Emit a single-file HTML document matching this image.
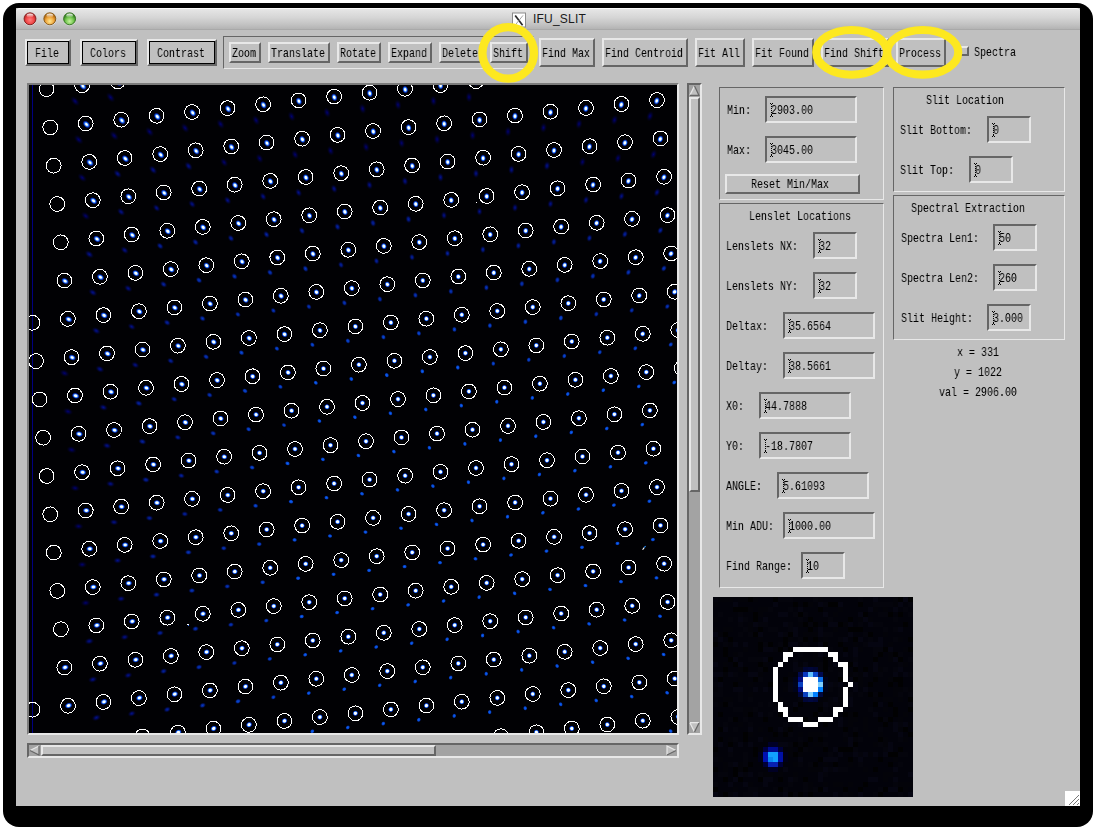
<!DOCTYPE html><html><head><meta charset="utf-8"><style>
html,body{margin:0;padding:0;width:1096px;height:830px;overflow:hidden;background:#fff}
.a{position:absolute;box-sizing:border-box}
.m{font-family:"Liberation Mono",monospace;font-size:13px;line-height:13px;white-space:pre;transform:scaleX(0.7692);transform-origin:0 0;color:#000;will-change:transform}
</style></head><body>
<div class="a" style="left:3px;top:3px;width:1090px;height:824px;background:#000;border-radius:16px"></div>
<div class="a" style="left:16px;top:8px;width:1064px;height:798px;background:#c0c0c0;"></div>
<div class="a" style="left:16px;top:8px;width:1064px;height:22px;border-radius:4px 4px 0 0;background:linear-gradient(#e6e6e6 0%,#d6d6d6 40%,#c2c2c2 75%,#b0b0b0 100%);border-top:1px solid #fafafa"></div>
<div class="a" style="left:16px;top:29px;width:1064px;height:1px;background:#a9a9a9"></div>
<svg class="a" style="left:16px;top:8px" width="70" height="22"><defs><radialGradient id="tr" cx="50%" cy="60%" r="55%"><stop offset="0" stop-color="#ff8080"/><stop offset="0.6" stop-color="#f04848"/><stop offset="1" stop-color="#b02020"/></radialGradient><radialGradient id="to" cx="50%" cy="70%" r="55%"><stop offset="0" stop-color="#ffe890"/><stop offset="0.6" stop-color="#f0a840"/><stop offset="1" stop-color="#b86c10"/></radialGradient><radialGradient id="tg" cx="50%" cy="70%" r="55%"><stop offset="0" stop-color="#c8f0a0"/><stop offset="0.6" stop-color="#74c850"/><stop offset="1" stop-color="#3c8828"/></radialGradient><linearGradient id="th" x1="0" y1="0" x2="0" y2="1"><stop offset="0" stop-color="#fff" stop-opacity="0.95"/><stop offset="1" stop-color="#fff" stop-opacity="0"/></linearGradient></defs><circle cx="14" cy="11.2" r="6.6" fill="#f2f2f2" opacity="0.7"/><circle cx="33.8" cy="11.2" r="6.6" fill="#f2f2f2" opacity="0.7"/><circle cx="53.6" cy="11.2" r="6.6" fill="#f2f2f2" opacity="0.7"/><circle cx="14" cy="10.8" r="6" fill="url(#tr)" stroke="#7a1818" stroke-width="0.9"/><circle cx="33.8" cy="10.8" r="6" fill="url(#to)" stroke="#7a5010" stroke-width="0.9"/><circle cx="53.6" cy="10.8" r="6" fill="url(#tg)" stroke="#2e6a1a" stroke-width="0.9"/><ellipse cx="14" cy="7.6" rx="3.4" ry="2" fill="url(#th)"/><ellipse cx="33.8" cy="7.6" rx="3.4" ry="2" fill="url(#th)"/><ellipse cx="53.6" cy="7.6" rx="3.4" ry="2" fill="url(#th)"/></svg>
<svg class="a" style="left:510px;top:10px" width="18" height="19"><rect x="2.5" y="3" width="13" height="14" fill="#fff" stroke="#8c8c8c" stroke-width="1"/><path d="M5.2 5.4 L12.6 15.2" stroke="#2a2a2a" stroke-width="1.7"/><path d="M13 5.4 L5.6 14.6" stroke="#999" stroke-width="0.9"/></svg>
<div class="a" style="left:533px;top:12px;font:12px 'Liberation Sans';line-height:14px;color:#1a1a1a;letter-spacing:0.2px;white-space:pre">IFU_SLIT</div>
<div class="a" style="left:25px;top:39px;width:46px;height:27px;background:#c0c0c0;border-style:solid;border-width:2px;border-color:#e8e8e8 #666666 #666666 #e8e8e8;"></div>
<div class="a" style="left:27px;top:41px;width:42px;height:23px;border-style:solid;border-width:1px;border-color:#000 #000 #000 #000;"></div>
<div class="a m" style="left:35.0px;top:47px;">File</div>
<div class="a" style="left:80px;top:39px;width:58px;height:27px;background:#c0c0c0;border-style:solid;border-width:2px;border-color:#e8e8e8 #666666 #666666 #e8e8e8;"></div>
<div class="a" style="left:82px;top:41px;width:54px;height:23px;border-style:solid;border-width:1px;border-color:#000 #000 #000 #000;"></div>
<div class="a m" style="left:90.0px;top:47px;">Colors</div>
<div class="a" style="left:147px;top:39px;width:70px;height:27px;background:#c0c0c0;border-style:solid;border-width:2px;border-color:#e8e8e8 #666666 #666666 #e8e8e8;"></div>
<div class="a" style="left:149px;top:41px;width:66px;height:23px;border-style:solid;border-width:1px;border-color:#000 #000 #000 #000;"></div>
<div class="a m" style="left:157.0px;top:47px;">Contrast</div>
<div class="a" style="left:223px;top:36px;width:311px;height:33px;border-style:solid;border-width:1px;border-color:#666666 #e8e8e8 #e8e8e8 #666666;"></div>
<div class="a" style="left:229px;top:42px;width:32px;height:21px;background:#c0c0c0;border-style:solid;border-width:2px;border-color:#e8e8e8 #666666 #666666 #e8e8e8;"></div>
<div class="a m" style="left:232.0px;top:47px;">Zoom</div>
<div class="a" style="left:268px;top:42px;width:62px;height:21px;background:#c0c0c0;border-style:solid;border-width:2px;border-color:#e8e8e8 #666666 #666666 #e8e8e8;"></div>
<div class="a m" style="left:271.0px;top:47px;">Translate</div>
<div class="a" style="left:337px;top:42px;width:44px;height:21px;background:#c0c0c0;border-style:solid;border-width:2px;border-color:#e8e8e8 #666666 #666666 #e8e8e8;"></div>
<div class="a m" style="left:340.0px;top:47px;">Rotate</div>
<div class="a" style="left:388px;top:42px;width:44px;height:21px;background:#c0c0c0;border-style:solid;border-width:2px;border-color:#e8e8e8 #666666 #666666 #e8e8e8;"></div>
<div class="a m" style="left:391.0px;top:47px;">Expand</div>
<div class="a" style="left:439px;top:42px;width:44px;height:21px;background:#c0c0c0;border-style:solid;border-width:2px;border-color:#e8e8e8 #666666 #666666 #e8e8e8;"></div>
<div class="a m" style="left:442.0px;top:47px;">Delete</div>
<div class="a" style="left:490px;top:42px;width:38px;height:21px;background:#c0c0c0;border-style:solid;border-width:2px;border-color:#e8e8e8 #666666 #666666 #e8e8e8;"></div>
<div class="a m" style="left:493.0px;top:47px;">Shift</div>
<div class="a" style="left:539px;top:38px;width:56px;height:29px;background:#c0c0c0;border-style:solid;border-width:2px;border-color:#e8e8e8 #666666 #666666 #e8e8e8;"></div>
<div class="a m" style="left:542.0px;top:47px;">Find Max</div>
<div class="a" style="left:602px;top:38px;width:86px;height:29px;background:#c0c0c0;border-style:solid;border-width:2px;border-color:#e8e8e8 #666666 #666666 #e8e8e8;"></div>
<div class="a m" style="left:605.0px;top:47px;">Find Centroid</div>
<div class="a" style="left:695px;top:38px;width:50px;height:29px;background:#c0c0c0;border-style:solid;border-width:2px;border-color:#e8e8e8 #666666 #666666 #e8e8e8;"></div>
<div class="a m" style="left:698.0px;top:47px;">Fit All</div>
<div class="a" style="left:752px;top:38px;width:62px;height:29px;background:#c0c0c0;border-style:solid;border-width:2px;border-color:#e8e8e8 #666666 #666666 #e8e8e8;"></div>
<div class="a m" style="left:755.0px;top:47px;">Fit Found</div>
<div class="a" style="left:821px;top:38px;width:68px;height:29px;background:#c0c0c0;border-style:solid;border-width:2px;border-color:#e8e8e8 #666666 #666666 #e8e8e8;"></div>
<div class="a m" style="left:824.0px;top:47px;">Find Shift</div>
<div class="a" style="left:896px;top:38px;width:50px;height:29px;background:#c0c0c0;border-style:solid;border-width:2px;border-color:#e8e8e8 #666666 #666666 #e8e8e8;"></div>
<div class="a m" style="left:899.0px;top:47px;">Process</div>
<div class="a" style="left:959px;top:46px;width:10px;height:10px;background:#c0c0c0;border-style:solid;border-width:2px;border-color:#e8e8e8 #666666 #666666 #e8e8e8;"></div>
<div class="a m" style="left:974px;top:46px;">Spectra</div>
<div class="a" style="left:27px;top:83px;width:652px;height:652px;border-style:solid;border-width:2px;border-color:#7c7c7c #e8e8e8 #e8e8e8 #7c7c7c;background:#010104"></div>
<svg class="a" style="left:29px;top:85px" width="648" height="648" viewBox="29 85 648 648">
<defs>
<radialGradient id="bs0"><stop offset="0" stop-color="#fff"/><stop offset="0.42" stop-color="#f4faff"/><stop offset="0.62" stop-color="#2a80ff"/><stop offset="0.82" stop-color="#0820b0" stop-opacity="0.7"/><stop offset="1" stop-color="#000050" stop-opacity="0"/></radialGradient>
<radialGradient id="bs1"><stop offset="0" stop-color="#fff"/><stop offset="0.37" stop-color="#f4faff"/><stop offset="0.59" stop-color="#2a80ff"/><stop offset="0.81" stop-color="#0820b0" stop-opacity="0.7"/><stop offset="1" stop-color="#000050" stop-opacity="0"/></radialGradient>
<radialGradient id="bs2"><stop offset="0" stop-color="#fff"/><stop offset="0.32" stop-color="#f4faff"/><stop offset="0.56" stop-color="#2a80ff"/><stop offset="0.79" stop-color="#0820b0" stop-opacity="0.7"/><stop offset="1" stop-color="#000050" stop-opacity="0"/></radialGradient>
<radialGradient id="bs3"><stop offset="0" stop-color="#fff"/><stop offset="0.27" stop-color="#f4faff"/><stop offset="0.53" stop-color="#2a80ff"/><stop offset="0.78" stop-color="#0820b0" stop-opacity="0.7"/><stop offset="1" stop-color="#000050" stop-opacity="0"/></radialGradient>
<radialGradient id="bs4"><stop offset="0" stop-color="#fff"/><stop offset="0.22" stop-color="#f4faff"/><stop offset="0.50" stop-color="#2a80ff"/><stop offset="0.77" stop-color="#0820b0" stop-opacity="0.7"/><stop offset="1" stop-color="#000050" stop-opacity="0"/></radialGradient>
<radialGradient id="ds0"><stop offset="0" stop-color="rgb(0,0,150)" stop-opacity="0.75"/><stop offset="0.30" stop-color="rgb(0,0,127)" stop-opacity="0.55"/><stop offset="1" stop-color="#000030" stop-opacity="0"/></radialGradient>
<radialGradient id="ds1"><stop offset="0" stop-color="rgb(2,21,171)" stop-opacity="0.80"/><stop offset="0.35" stop-color="rgb(1,14,145)" stop-opacity="0.62"/><stop offset="1" stop-color="#000030" stop-opacity="0"/></radialGradient>
<radialGradient id="ds2"><stop offset="0" stop-color="rgb(4,42,192)" stop-opacity="0.85"/><stop offset="0.40" stop-color="rgb(2,29,163)" stop-opacity="0.69"/><stop offset="1" stop-color="#000030" stop-opacity="0"/></radialGradient>
<radialGradient id="ds3"><stop offset="0" stop-color="rgb(6,63,213)" stop-opacity="0.90"/><stop offset="0.45" stop-color="rgb(4,44,181)" stop-opacity="0.76"/><stop offset="1" stop-color="#000030" stop-opacity="0"/></radialGradient>
<radialGradient id="ds4"><stop offset="0" stop-color="rgb(8,84,234)" stop-opacity="0.95"/><stop offset="0.50" stop-color="rgb(5,58,198)" stop-opacity="0.83"/><stop offset="1" stop-color="#000030" stop-opacity="0"/></radialGradient>
<radialGradient id="ds5"><stop offset="0" stop-color="rgb(10,105,255)" stop-opacity="1.00"/><stop offset="0.55" stop-color="rgb(7,73,216)" stop-opacity="0.90"/><stop offset="1" stop-color="#000030" stop-opacity="0"/></radialGradient>
<clipPath id="cp"><rect x="29" y="85" width="648" height="648"/></clipPath></defs>
<rect x="29" y="85" width="648" height="648" fill="#010104"/>
<g clip-path="url(#cp)">
<rect x="32" y="85" width="1" height="648" fill="#000080"/>
<g><ellipse cx="64.5" cy="373.2" rx="5.5" ry="3.6" transform="rotate(-156 64.5 373.2)" fill="url(#ds0)"/><ellipse cx="68.0" cy="411.5" rx="5.4" ry="3.6" transform="rotate(-160 68.0 411.5)" fill="url(#ds0)"/><ellipse cx="71.6" cy="449.8" rx="5.3" ry="3.6" transform="rotate(-165 71.6 449.8)" fill="url(#ds0)"/><ellipse cx="75.1" cy="488.1" rx="5.2" ry="3.5" transform="rotate(-169 75.1 488.1)" fill="url(#ds0)"/><ellipse cx="78.6" cy="526.3" rx="5.2" ry="3.5" transform="rotate(-175 78.6 526.3)" fill="url(#ds0)"/><ellipse cx="82.2" cy="564.6" rx="5.1" ry="3.5" transform="rotate(-180 82.2 564.6)" fill="url(#ds0)"/><ellipse cx="85.7" cy="602.9" rx="5.1" ry="3.5" transform="rotate(175 85.7 602.9)" fill="url(#ds0)"/><ellipse cx="89.3" cy="641.2" rx="5.0" ry="3.5" transform="rotate(169 89.3 641.2)" fill="url(#ds1)"/><ellipse cx="92.8" cy="679.5" rx="5.0" ry="3.4" transform="rotate(164 92.8 679.5)" fill="url(#ds1)"/><ellipse cx="96.4" cy="717.7" rx="5.0" ry="3.4" transform="rotate(159 96.4 717.7)" fill="url(#ds1)"/><ellipse cx="75.1" cy="101.2" rx="6.1" ry="3.6" transform="rotate(-132 75.1 101.2)" fill="url(#ds0)"/><ellipse cx="78.7" cy="139.6" rx="6.0" ry="3.6" transform="rotate(-134 78.7 139.6)" fill="url(#ds0)"/><ellipse cx="82.2" cy="177.7" rx="5.7" ry="3.5" transform="rotate(-137 82.2 177.7)" fill="url(#ds0)"/><ellipse cx="85.7" cy="216.0" rx="5.5" ry="3.5" transform="rotate(-139 85.7 216.0)" fill="url(#ds0)"/><ellipse cx="89.3" cy="254.3" rx="5.4" ry="3.5" transform="rotate(-142 89.3 254.3)" fill="url(#ds1)"/><ellipse cx="92.8" cy="292.5" rx="5.2" ry="3.4" transform="rotate(-146 92.8 292.5)" fill="url(#ds1)"/><ellipse cx="96.3" cy="330.8" rx="5.1" ry="3.4" transform="rotate(-149 96.3 330.8)" fill="url(#ds1)"/><ellipse cx="99.9" cy="369.1" rx="5.0" ry="3.4" transform="rotate(-153 99.9 369.1)" fill="url(#ds1)"/><ellipse cx="103.4" cy="407.4" rx="4.9" ry="3.4" transform="rotate(-158 103.4 407.4)" fill="url(#ds1)"/><ellipse cx="107.0" cy="445.7" rx="4.8" ry="3.4" transform="rotate(-163 107.0 445.7)" fill="url(#ds1)"/><ellipse cx="110.5" cy="483.9" rx="4.7" ry="3.3" transform="rotate(-168 110.5 483.9)" fill="url(#ds1)"/><ellipse cx="114.0" cy="522.2" rx="4.7" ry="3.3" transform="rotate(-173 114.0 522.2)" fill="url(#ds1)"/><ellipse cx="117.6" cy="560.5" rx="4.6" ry="3.3" transform="rotate(-179 117.6 560.5)" fill="url(#ds1)"/><ellipse cx="121.1" cy="598.8" rx="4.6" ry="3.3" transform="rotate(175 121.1 598.8)" fill="url(#ds1)"/><ellipse cx="124.7" cy="637.1" rx="4.6" ry="3.3" transform="rotate(169 124.7 637.1)" fill="url(#ds1)"/><ellipse cx="128.2" cy="675.3" rx="4.5" ry="3.3" transform="rotate(163 128.2 675.3)" fill="url(#ds1)"/><ellipse cx="131.8" cy="713.6" rx="4.5" ry="3.2" transform="rotate(158 131.8 713.6)" fill="url(#ds1)"/><ellipse cx="135.3" cy="751.9" rx="4.5" ry="3.2" transform="rotate(152 135.3 751.9)" fill="url(#ds1)"/><ellipse cx="110.6" cy="97.4" rx="6.1" ry="3.6" transform="rotate(-129 110.6 97.4)" fill="url(#ds0)"/><ellipse cx="114.2" cy="135.7" rx="6.0" ry="3.6" transform="rotate(-131 114.2 135.7)" fill="url(#ds0)"/><ellipse cx="117.6" cy="173.8" rx="5.4" ry="3.4" transform="rotate(-134 117.6 173.8)" fill="url(#ds1)"/><ellipse cx="121.1" cy="211.9" rx="5.0" ry="3.3" transform="rotate(-136 121.1 211.9)" fill="url(#ds1)"/><ellipse cx="124.7" cy="250.2" rx="4.9" ry="3.3" transform="rotate(-139 124.7 250.2)" fill="url(#ds1)"/><ellipse cx="128.2" cy="288.4" rx="4.8" ry="3.3" transform="rotate(-143 128.2 288.4)" fill="url(#ds1)"/><ellipse cx="131.7" cy="326.7" rx="4.6" ry="3.2" transform="rotate(-147 131.7 326.7)" fill="url(#ds1)"/><ellipse cx="135.3" cy="365.0" rx="4.5" ry="3.2" transform="rotate(-151 135.3 365.0)" fill="url(#ds1)"/><ellipse cx="138.8" cy="403.3" rx="4.5" ry="3.2" transform="rotate(-155 138.8 403.3)" fill="url(#ds2)"/><ellipse cx="142.4" cy="441.6" rx="4.4" ry="3.2" transform="rotate(-161 142.4 441.6)" fill="url(#ds2)"/><ellipse cx="145.9" cy="479.8" rx="4.3" ry="3.2" transform="rotate(-166 145.9 479.8)" fill="url(#ds2)"/><ellipse cx="149.4" cy="518.1" rx="4.2" ry="3.1" transform="rotate(-172 149.4 518.1)" fill="url(#ds2)"/><ellipse cx="153.0" cy="556.4" rx="4.2" ry="3.1" transform="rotate(-178 153.0 556.4)" fill="url(#ds2)"/><ellipse cx="156.5" cy="594.7" rx="4.1" ry="3.1" transform="rotate(175 156.5 594.7)" fill="url(#ds2)"/><ellipse cx="160.1" cy="633.0" rx="4.1" ry="3.1" transform="rotate(169 160.1 633.0)" fill="url(#ds2)"/><ellipse cx="163.6" cy="671.2" rx="4.1" ry="3.1" transform="rotate(162 163.6 671.2)" fill="url(#ds2)"/><ellipse cx="167.2" cy="709.5" rx="4.1" ry="3.1" transform="rotate(156 167.2 709.5)" fill="url(#ds2)"/><ellipse cx="170.7" cy="747.8" rx="4.1" ry="3.0" transform="rotate(150 170.7 747.8)" fill="url(#ds2)"/><ellipse cx="149.6" cy="131.8" rx="5.9" ry="3.6" transform="rotate(-128 149.6 131.8)" fill="url(#ds0)"/><ellipse cx="153.1" cy="169.9" rx="5.4" ry="3.4" transform="rotate(-131 153.1 169.9)" fill="url(#ds1)"/><ellipse cx="156.6" cy="208.0" rx="4.8" ry="3.2" transform="rotate(-133 156.6 208.0)" fill="url(#ds1)"/><ellipse cx="160.1" cy="246.0" rx="4.4" ry="3.1" transform="rotate(-136 160.1 246.0)" fill="url(#ds2)"/><ellipse cx="163.6" cy="284.3" rx="4.3" ry="3.1" transform="rotate(-140 163.6 284.3)" fill="url(#ds2)"/><ellipse cx="167.1" cy="322.6" rx="4.2" ry="3.1" transform="rotate(-143 167.1 322.6)" fill="url(#ds2)"/><ellipse cx="170.7" cy="360.9" rx="4.1" ry="3.0" transform="rotate(-148 170.7 360.9)" fill="url(#ds2)"/><ellipse cx="174.2" cy="399.2" rx="4.0" ry="3.0" transform="rotate(-152 174.2 399.2)" fill="url(#ds2)"/><ellipse cx="177.8" cy="437.4" rx="4.0" ry="3.0" transform="rotate(-158 177.8 437.4)" fill="url(#ds2)"/><ellipse cx="181.3" cy="475.7" rx="3.9" ry="3.0" transform="rotate(-164 181.3 475.7)" fill="url(#ds2)"/><ellipse cx="184.8" cy="514.0" rx="3.8" ry="3.0" transform="rotate(-171 184.8 514.0)" fill="url(#ds2)"/><ellipse cx="188.4" cy="552.3" rx="3.8" ry="2.9" transform="rotate(-178 188.4 552.3)" fill="url(#ds3)"/><ellipse cx="191.9" cy="590.6" rx="3.7" ry="2.9" transform="rotate(175 191.9 590.6)" fill="url(#ds3)"/><ellipse cx="195.5" cy="628.8" rx="3.7" ry="2.9" transform="rotate(168 195.5 628.8)" fill="url(#ds3)"/><ellipse cx="199.0" cy="667.1" rx="3.7" ry="2.9" transform="rotate(161 199.0 667.1)" fill="url(#ds3)"/><ellipse cx="202.6" cy="705.4" rx="3.7" ry="2.9" transform="rotate(154 202.6 705.4)" fill="url(#ds3)"/><ellipse cx="206.1" cy="743.7" rx="3.7" ry="2.8" transform="rotate(148 206.1 743.7)" fill="url(#ds3)"/><ellipse cx="185.1" cy="128.0" rx="5.8" ry="3.6" transform="rotate(-125 185.1 128.0)" fill="url(#ds0)"/><ellipse cx="188.6" cy="166.1" rx="5.4" ry="3.5" transform="rotate(-127 188.6 166.1)" fill="url(#ds1)"/><ellipse cx="192.1" cy="204.1" rx="4.8" ry="3.3" transform="rotate(-130 192.1 204.1)" fill="url(#ds1)"/><ellipse cx="195.5" cy="242.2" rx="4.3" ry="3.1" transform="rotate(-133 195.5 242.2)" fill="url(#ds2)"/><ellipse cx="199.0" cy="280.2" rx="3.9" ry="2.9" transform="rotate(-136 199.0 280.2)" fill="url(#ds3)"/><ellipse cx="202.5" cy="318.5" rx="3.8" ry="2.9" transform="rotate(-140 202.5 318.5)" fill="url(#ds3)"/><ellipse cx="206.1" cy="356.8" rx="3.7" ry="2.8" transform="rotate(-144 206.1 356.8)" fill="url(#ds3)"/><ellipse cx="209.6" cy="395.0" rx="3.6" ry="2.8" transform="rotate(-149 209.6 395.0)" fill="url(#ds3)"/><ellipse cx="213.2" cy="433.3" rx="3.6" ry="2.8" transform="rotate(-155 213.2 433.3)" fill="url(#ds3)"/><ellipse cx="216.7" cy="471.6" rx="3.5" ry="2.8" transform="rotate(-161 216.7 471.6)" fill="url(#ds3)"/><ellipse cx="220.2" cy="509.9" rx="3.5" ry="2.8" transform="rotate(-169 220.2 509.9)" fill="url(#ds3)"/><ellipse cx="223.8" cy="548.2" rx="3.4" ry="2.8" transform="rotate(-176 223.8 548.2)" fill="url(#ds3)"/><ellipse cx="227.3" cy="586.4" rx="3.4" ry="2.7" transform="rotate(175 227.3 586.4)" fill="url(#ds3)"/><ellipse cx="230.9" cy="624.7" rx="3.4" ry="2.7" transform="rotate(167 230.9 624.7)" fill="url(#ds3)"/><ellipse cx="234.4" cy="663.0" rx="3.3" ry="2.7" transform="rotate(159 234.4 663.0)" fill="url(#ds3)"/><ellipse cx="238.0" cy="701.3" rx="3.3" ry="2.7" transform="rotate(152 238.0 701.3)" fill="url(#ds4)"/><ellipse cx="241.5" cy="739.6" rx="3.3" ry="2.7" transform="rotate(145 241.5 739.6)" fill="url(#ds4)"/><ellipse cx="220.6" cy="124.1" rx="5.7" ry="3.6" transform="rotate(-122 220.6 124.1)" fill="url(#ds0)"/><ellipse cx="224.1" cy="162.3" rx="5.4" ry="3.5" transform="rotate(-124 224.1 162.3)" fill="url(#ds0)"/><ellipse cx="227.6" cy="200.3" rx="4.8" ry="3.3" transform="rotate(-126 227.6 200.3)" fill="url(#ds1)"/><ellipse cx="231.0" cy="238.3" rx="4.3" ry="3.1" transform="rotate(-129 231.0 238.3)" fill="url(#ds2)"/><ellipse cx="234.5" cy="276.4" rx="3.8" ry="2.9" transform="rotate(-132 234.5 276.4)" fill="url(#ds3)"/><ellipse cx="237.9" cy="314.4" rx="3.4" ry="2.7" transform="rotate(-135 237.9 314.4)" fill="url(#ds3)"/><ellipse cx="241.5" cy="352.7" rx="3.3" ry="2.7" transform="rotate(-140 241.5 352.7)" fill="url(#ds4)"/><ellipse cx="245.0" cy="390.9" rx="3.3" ry="2.6" transform="rotate(-145 245.0 390.9)" fill="url(#ds4)"/><ellipse cx="248.6" cy="429.2" rx="3.2" ry="2.6" transform="rotate(-151 248.6 429.2)" fill="url(#ds4)"/><ellipse cx="252.1" cy="467.5" rx="3.2" ry="2.6" transform="rotate(-158 252.1 467.5)" fill="url(#ds4)"/><ellipse cx="255.6" cy="505.8" rx="3.1" ry="2.6" transform="rotate(-166 255.6 505.8)" fill="url(#ds4)"/><ellipse cx="259.2" cy="544.1" rx="3.1" ry="2.6" transform="rotate(-175 259.2 544.1)" fill="url(#ds4)"/><ellipse cx="262.7" cy="582.3" rx="3.1" ry="2.6" transform="rotate(176 262.7 582.3)" fill="url(#ds4)"/><ellipse cx="266.3" cy="620.6" rx="3.0" ry="2.5" transform="rotate(166 266.3 620.6)" fill="url(#ds4)"/><ellipse cx="269.8" cy="658.9" rx="3.0" ry="2.5" transform="rotate(157 269.8 658.9)" fill="url(#ds4)"/><ellipse cx="273.4" cy="697.2" rx="3.0" ry="2.5" transform="rotate(149 273.4 697.2)" fill="url(#ds4)"/><ellipse cx="276.9" cy="735.5" rx="3.0" ry="2.5" transform="rotate(142 276.9 735.5)" fill="url(#ds4)"/><ellipse cx="256.1" cy="120.3" rx="5.7" ry="3.6" transform="rotate(-118 256.1 120.3)" fill="url(#ds0)"/><ellipse cx="259.6" cy="158.4" rx="5.3" ry="3.5" transform="rotate(-120 259.6 158.4)" fill="url(#ds0)"/><ellipse cx="263.1" cy="196.5" rx="4.8" ry="3.3" transform="rotate(-122 263.1 196.5)" fill="url(#ds1)"/><ellipse cx="266.5" cy="234.5" rx="4.3" ry="3.1" transform="rotate(-124 266.5 234.5)" fill="url(#ds2)"/><ellipse cx="270.0" cy="272.5" rx="3.8" ry="2.9" transform="rotate(-127 270.0 272.5)" fill="url(#ds3)"/><ellipse cx="273.4" cy="310.6" rx="3.4" ry="2.7" transform="rotate(-131 273.4 310.6)" fill="url(#ds3)"/><ellipse cx="276.9" cy="348.6" rx="3.1" ry="2.5" transform="rotate(-135 276.9 348.6)" fill="url(#ds4)"/><ellipse cx="280.4" cy="386.8" rx="3.0" ry="2.5" transform="rotate(-140 280.4 386.8)" fill="url(#ds4)"/><ellipse cx="284.0" cy="425.1" rx="2.9" ry="2.4" transform="rotate(-146 284.0 425.1)" fill="url(#ds4)"/><ellipse cx="287.5" cy="463.4" rx="2.9" ry="2.4" transform="rotate(-154 287.5 463.4)" fill="url(#ds5)"/><ellipse cx="291.0" cy="501.7" rx="2.9" ry="2.4" transform="rotate(-163 291.0 501.7)" fill="url(#ds5)"/><ellipse cx="294.6" cy="539.9" rx="2.8" ry="2.4" transform="rotate(-173 294.6 539.9)" fill="url(#ds5)"/><ellipse cx="298.1" cy="578.2" rx="2.8" ry="2.4" transform="rotate(176 298.1 578.2)" fill="url(#ds5)"/><ellipse cx="301.7" cy="616.5" rx="2.8" ry="2.4" transform="rotate(165 301.7 616.5)" fill="url(#ds5)"/><ellipse cx="305.2" cy="654.8" rx="2.7" ry="2.3" transform="rotate(154 305.2 654.8)" fill="url(#ds5)"/><ellipse cx="308.8" cy="693.1" rx="2.7" ry="2.3" transform="rotate(145 308.8 693.1)" fill="url(#ds5)"/><ellipse cx="312.3" cy="731.3" rx="2.7" ry="2.3" transform="rotate(137 312.3 731.3)" fill="url(#ds5)"/><ellipse cx="291.6" cy="116.4" rx="5.6" ry="3.6" transform="rotate(-114 291.6 116.4)" fill="url(#ds0)"/><ellipse cx="295.1" cy="154.6" rx="5.3" ry="3.5" transform="rotate(-116 295.1 154.6)" fill="url(#ds0)"/><ellipse cx="298.6" cy="192.6" rx="4.8" ry="3.3" transform="rotate(-118 298.6 192.6)" fill="url(#ds1)"/><ellipse cx="302.0" cy="230.7" rx="4.3" ry="3.1" transform="rotate(-120 302.0 230.7)" fill="url(#ds2)"/><ellipse cx="305.5" cy="268.7" rx="3.9" ry="2.9" transform="rotate(-122 305.5 268.7)" fill="url(#ds3)"/><ellipse cx="308.9" cy="306.7" rx="3.4" ry="2.7" transform="rotate(-125 308.9 306.7)" fill="url(#ds3)"/><ellipse cx="312.4" cy="344.8" rx="3.1" ry="2.5" transform="rotate(-129 312.4 344.8)" fill="url(#ds4)"/><ellipse cx="315.8" cy="382.8" rx="2.8" ry="2.3" transform="rotate(-134 315.8 382.8)" fill="url(#ds5)"/><ellipse cx="319.4" cy="421.0" rx="2.7" ry="2.3" transform="rotate(-140 319.4 421.0)" fill="url(#ds5)"/><ellipse cx="322.9" cy="459.4" rx="2.7" ry="2.3" transform="rotate(-148 322.9 459.4)" fill="url(#ds5)"/><ellipse cx="326.5" cy="497.7" rx="2.7" ry="2.3" transform="rotate(-158 326.5 497.7)" fill="url(#ds5)"/><ellipse cx="330.0" cy="536.0" rx="2.7" ry="2.3" transform="rotate(-170 330.0 536.0)" fill="url(#ds5)"/><ellipse cx="333.6" cy="574.3" rx="2.7" ry="2.3" transform="rotate(176 333.6 574.3)" fill="url(#ds5)"/><ellipse cx="337.1" cy="612.6" rx="2.7" ry="2.3" transform="rotate(163 337.1 612.6)" fill="url(#ds5)"/><ellipse cx="340.7" cy="650.9" rx="2.7" ry="2.3" transform="rotate(150 340.7 650.9)" fill="url(#ds5)"/><ellipse cx="344.2" cy="689.2" rx="2.7" ry="2.3" transform="rotate(140 344.2 689.2)" fill="url(#ds5)"/><ellipse cx="347.8" cy="727.5" rx="2.7" ry="2.3" transform="rotate(132 347.8 727.5)" fill="url(#ds5)"/><ellipse cx="327.1" cy="112.6" rx="5.6" ry="3.6" transform="rotate(-110 327.1 112.6)" fill="url(#ds0)"/><ellipse cx="330.6" cy="150.8" rx="5.3" ry="3.5" transform="rotate(-111 330.6 150.8)" fill="url(#ds0)"/><ellipse cx="334.1" cy="188.8" rx="4.8" ry="3.3" transform="rotate(-113 334.1 188.8)" fill="url(#ds1)"/><ellipse cx="337.5" cy="226.8" rx="4.3" ry="3.2" transform="rotate(-115 337.5 226.8)" fill="url(#ds2)"/><ellipse cx="341.0" cy="264.9" rx="3.9" ry="3.0" transform="rotate(-117 341.0 264.9)" fill="url(#ds2)"/><ellipse cx="344.4" cy="302.9" rx="3.5" ry="2.8" transform="rotate(-119 344.4 302.9)" fill="url(#ds3)"/><ellipse cx="347.9" cy="340.9" rx="3.1" ry="2.6" transform="rotate(-123 347.9 340.9)" fill="url(#ds4)"/><ellipse cx="351.3" cy="379.0" rx="2.8" ry="2.4" transform="rotate(-127 351.3 379.0)" fill="url(#ds5)"/><ellipse cx="354.9" cy="417.2" rx="2.7" ry="2.3" transform="rotate(-133 354.9 417.2)" fill="url(#ds5)"/><ellipse cx="358.4" cy="455.5" rx="2.7" ry="2.3" transform="rotate(-141 358.4 455.5)" fill="url(#ds5)"/><ellipse cx="362.0" cy="493.8" rx="2.7" ry="2.3" transform="rotate(-152 362.0 493.8)" fill="url(#ds5)"/><ellipse cx="365.5" cy="532.1" rx="2.7" ry="2.3" transform="rotate(-166 365.5 532.1)" fill="url(#ds5)"/><ellipse cx="369.1" cy="570.4" rx="2.7" ry="2.3" transform="rotate(177 369.1 570.4)" fill="url(#ds5)"/><ellipse cx="372.6" cy="608.7" rx="2.7" ry="2.3" transform="rotate(160 372.6 608.7)" fill="url(#ds5)"/><ellipse cx="376.2" cy="647.0" rx="2.7" ry="2.3" transform="rotate(145 376.2 647.0)" fill="url(#ds5)"/><ellipse cx="379.7" cy="685.3" rx="2.7" ry="2.3" transform="rotate(133 379.7 685.3)" fill="url(#ds5)"/><ellipse cx="383.3" cy="723.6" rx="2.7" ry="2.3" transform="rotate(124 383.3 723.6)" fill="url(#ds5)"/><ellipse cx="362.6" cy="108.7" rx="5.6" ry="3.6" transform="rotate(-106 362.6 108.7)" fill="url(#ds0)"/><ellipse cx="366.1" cy="147.0" rx="5.4" ry="3.6" transform="rotate(-107 366.1 147.0)" fill="url(#ds0)"/><ellipse cx="369.5" cy="185.0" rx="4.8" ry="3.4" transform="rotate(-108 369.5 185.0)" fill="url(#ds1)"/><ellipse cx="373.0" cy="223.0" rx="4.3" ry="3.2" transform="rotate(-109 373.0 223.0)" fill="url(#ds2)"/><ellipse cx="376.5" cy="261.0" rx="3.9" ry="3.0" transform="rotate(-111 376.5 261.0)" fill="url(#ds2)"/><ellipse cx="379.9" cy="299.1" rx="3.5" ry="2.8" transform="rotate(-113 379.9 299.1)" fill="url(#ds3)"/><ellipse cx="383.4" cy="337.1" rx="3.1" ry="2.6" transform="rotate(-116 383.4 337.1)" fill="url(#ds4)"/><ellipse cx="386.8" cy="375.1" rx="2.8" ry="2.4" transform="rotate(-119 386.8 375.1)" fill="url(#ds5)"/><ellipse cx="390.4" cy="413.3" rx="2.7" ry="2.3" transform="rotate(-124 390.4 413.3)" fill="url(#ds5)"/><ellipse cx="393.9" cy="451.6" rx="2.7" ry="2.3" transform="rotate(-131 393.9 451.6)" fill="url(#ds5)"/><ellipse cx="397.5" cy="489.9" rx="2.7" ry="2.3" transform="rotate(-142 397.5 489.9)" fill="url(#ds5)"/><ellipse cx="401.0" cy="528.2" rx="2.7" ry="2.3" transform="rotate(-159 401.0 528.2)" fill="url(#ds5)"/><ellipse cx="404.6" cy="566.6" rx="2.7" ry="2.3" transform="rotate(178 404.6 566.6)" fill="url(#ds5)"/><ellipse cx="408.1" cy="604.9" rx="2.7" ry="2.3" transform="rotate(154 408.1 604.9)" fill="url(#ds5)"/><ellipse cx="411.7" cy="643.2" rx="2.7" ry="2.3" transform="rotate(136 411.7 643.2)" fill="url(#ds5)"/><ellipse cx="415.2" cy="681.5" rx="2.7" ry="2.3" transform="rotate(123 415.2 681.5)" fill="url(#ds5)"/><ellipse cx="418.8" cy="719.8" rx="2.7" ry="2.3" transform="rotate(115 418.8 719.8)" fill="url(#ds5)"/><ellipse cx="398.0" cy="104.8" rx="5.6" ry="3.6" transform="rotate(-102 398.0 104.8)" fill="url(#ds0)"/><ellipse cx="401.6" cy="143.1" rx="5.4" ry="3.6" transform="rotate(-102 401.6 143.1)" fill="url(#ds0)"/><ellipse cx="405.0" cy="181.2" rx="4.8" ry="3.4" transform="rotate(-103 405.0 181.2)" fill="url(#ds1)"/><ellipse cx="408.5" cy="219.2" rx="4.3" ry="3.2" transform="rotate(-104 408.5 219.2)" fill="url(#ds2)"/><ellipse cx="412.0" cy="257.2" rx="3.9" ry="3.0" transform="rotate(-105 412.0 257.2)" fill="url(#ds2)"/><ellipse cx="415.4" cy="295.2" rx="3.5" ry="2.8" transform="rotate(-106 415.4 295.2)" fill="url(#ds3)"/><ellipse cx="418.9" cy="333.3" rx="3.1" ry="2.6" transform="rotate(-108 418.9 333.3)" fill="url(#ds4)"/><ellipse cx="422.3" cy="371.3" rx="2.8" ry="2.4" transform="rotate(-110 422.3 371.3)" fill="url(#ds5)"/><ellipse cx="425.8" cy="409.5" rx="2.7" ry="2.3" transform="rotate(-113 425.8 409.5)" fill="url(#ds5)"/><ellipse cx="429.4" cy="447.8" rx="2.7" ry="2.3" transform="rotate(-118 429.4 447.8)" fill="url(#ds5)"/><ellipse cx="432.9" cy="486.1" rx="2.7" ry="2.3" transform="rotate(-127 432.9 486.1)" fill="url(#ds5)"/><ellipse cx="436.5" cy="524.4" rx="2.7" ry="2.3" transform="rotate(-145 436.5 524.4)" fill="url(#ds5)"/><ellipse cx="440.0" cy="562.7" rx="2.7" ry="2.3" transform="rotate(-178 440.0 562.7)" fill="url(#ds5)"/><ellipse cx="443.6" cy="601.0" rx="2.7" ry="2.3" transform="rotate(143 443.6 601.0)" fill="url(#ds5)"/><ellipse cx="447.1" cy="639.3" rx="2.7" ry="2.3" transform="rotate(121 447.1 639.3)" fill="url(#ds5)"/><ellipse cx="450.7" cy="677.6" rx="2.7" ry="2.3" transform="rotate(110 450.7 677.6)" fill="url(#ds5)"/><ellipse cx="454.2" cy="715.9" rx="2.7" ry="2.3" transform="rotate(104 454.2 715.9)" fill="url(#ds5)"/><ellipse cx="433.5" cy="101.0" rx="5.5" ry="3.6" transform="rotate(-97 433.5 101.0)" fill="url(#ds0)"/><ellipse cx="437.1" cy="139.3" rx="5.4" ry="3.6" transform="rotate(-97 437.1 139.3)" fill="url(#ds0)"/><ellipse cx="440.5" cy="177.3" rx="4.9" ry="3.4" transform="rotate(-98 440.5 177.3)" fill="url(#ds1)"/><ellipse cx="444.0" cy="215.4" rx="4.4" ry="3.2" transform="rotate(-98 444.0 215.4)" fill="url(#ds1)"/><ellipse cx="447.5" cy="253.4" rx="3.9" ry="3.0" transform="rotate(-98 447.5 253.4)" fill="url(#ds2)"/><ellipse cx="450.9" cy="291.4" rx="3.5" ry="2.8" transform="rotate(-99 450.9 291.4)" fill="url(#ds3)"/><ellipse cx="454.4" cy="329.4" rx="3.2" ry="2.6" transform="rotate(-99 454.4 329.4)" fill="url(#ds4)"/><ellipse cx="457.8" cy="367.5" rx="2.9" ry="2.4" transform="rotate(-100 457.8 367.5)" fill="url(#ds5)"/><ellipse cx="461.3" cy="405.6" rx="2.7" ry="2.3" transform="rotate(-101 461.3 405.6)" fill="url(#ds5)"/><ellipse cx="464.9" cy="443.9" rx="2.7" ry="2.3" transform="rotate(-103 464.9 443.9)" fill="url(#ds5)"/><ellipse cx="468.4" cy="482.2" rx="2.7" ry="2.3" transform="rotate(-106 468.4 482.2)" fill="url(#ds5)"/><ellipse cx="472.0" cy="520.5" rx="2.7" ry="2.3" transform="rotate(-115 472.0 520.5)" fill="url(#ds5)"/><ellipse cx="475.5" cy="558.8" rx="2.7" ry="2.3" transform="rotate(-162 475.5 558.8)" fill="url(#ds5)"/><ellipse cx="479.1" cy="597.1" rx="2.7" ry="2.3" transform="rotate(112 479.1 597.1)" fill="url(#ds5)"/><ellipse cx="482.6" cy="635.5" rx="2.7" ry="2.3" transform="rotate(98 482.6 635.5)" fill="url(#ds5)"/><ellipse cx="486.2" cy="673.8" rx="2.7" ry="2.3" transform="rotate(93 486.2 673.8)" fill="url(#ds5)"/><ellipse cx="489.7" cy="712.1" rx="2.7" ry="2.3" transform="rotate(91 489.7 712.1)" fill="url(#ds5)"/><ellipse cx="493.3" cy="750.4" rx="2.7" ry="2.3" transform="rotate(90 493.3 750.4)" fill="url(#ds5)"/><ellipse cx="469.0" cy="97.1" rx="5.5" ry="3.6" transform="rotate(-93 469.0 97.1)" fill="url(#ds0)"/><ellipse cx="472.6" cy="135.4" rx="5.4" ry="3.6" transform="rotate(-93 472.6 135.4)" fill="url(#ds0)"/><ellipse cx="476.0" cy="173.5" rx="4.9" ry="3.4" transform="rotate(-92 476.0 173.5)" fill="url(#ds1)"/><ellipse cx="479.5" cy="211.5" rx="4.4" ry="3.2" transform="rotate(-92 479.5 211.5)" fill="url(#ds1)"/><ellipse cx="482.9" cy="249.6" rx="4.0" ry="3.0" transform="rotate(-92 482.9 249.6)" fill="url(#ds2)"/><ellipse cx="486.4" cy="287.6" rx="3.6" ry="2.8" transform="rotate(-91 486.4 287.6)" fill="url(#ds3)"/><ellipse cx="489.9" cy="325.6" rx="3.2" ry="2.6" transform="rotate(-91 489.9 325.6)" fill="url(#ds4)"/><ellipse cx="493.3" cy="363.6" rx="2.9" ry="2.4" transform="rotate(-90 493.3 363.6)" fill="url(#ds4)"/><ellipse cx="496.8" cy="401.8" rx="2.7" ry="2.3" transform="rotate(-88 496.8 401.8)" fill="url(#ds5)"/><ellipse cx="500.4" cy="440.1" rx="2.7" ry="2.3" transform="rotate(-86 500.4 440.1)" fill="url(#ds5)"/><ellipse cx="503.9" cy="478.4" rx="2.7" ry="2.3" transform="rotate(-82 503.9 478.4)" fill="url(#ds5)"/><ellipse cx="507.5" cy="516.7" rx="2.7" ry="2.3" transform="rotate(-72 507.5 516.7)" fill="url(#ds5)"/><ellipse cx="511.0" cy="555.0" rx="2.7" ry="2.3" transform="rotate(-26 511.0 555.0)" fill="url(#ds5)"/><ellipse cx="514.6" cy="593.3" rx="2.7" ry="2.3" transform="rotate(53 514.6 593.3)" fill="url(#ds5)"/><ellipse cx="518.1" cy="631.6" rx="2.7" ry="2.3" transform="rotate(69 518.1 631.6)" fill="url(#ds5)"/><ellipse cx="521.7" cy="669.9" rx="2.7" ry="2.3" transform="rotate(75 521.7 669.9)" fill="url(#ds5)"/><ellipse cx="525.2" cy="708.2" rx="2.7" ry="2.3" transform="rotate(77 525.2 708.2)" fill="url(#ds5)"/><ellipse cx="528.8" cy="746.5" rx="2.7" ry="2.3" transform="rotate(79 528.8 746.5)" fill="url(#ds5)"/><ellipse cx="508.0" cy="131.6" rx="5.4" ry="3.6" transform="rotate(-88 508.0 131.6)" fill="url(#ds0)"/><ellipse cx="511.5" cy="169.7" rx="5.0" ry="3.4" transform="rotate(-87 511.5 169.7)" fill="url(#ds1)"/><ellipse cx="515.0" cy="207.7" rx="4.5" ry="3.3" transform="rotate(-86 515.0 207.7)" fill="url(#ds1)"/><ellipse cx="518.4" cy="245.7" rx="4.0" ry="3.1" transform="rotate(-85 518.4 245.7)" fill="url(#ds2)"/><ellipse cx="521.9" cy="283.8" rx="3.6" ry="2.9" transform="rotate(-84 521.9 283.8)" fill="url(#ds3)"/><ellipse cx="525.4" cy="321.8" rx="3.2" ry="2.7" transform="rotate(-82 525.4 321.8)" fill="url(#ds4)"/><ellipse cx="528.8" cy="359.8" rx="2.9" ry="2.5" transform="rotate(-80 528.8 359.8)" fill="url(#ds4)"/><ellipse cx="532.3" cy="397.9" rx="2.7" ry="2.3" transform="rotate(-77 532.3 397.9)" fill="url(#ds5)"/><ellipse cx="535.8" cy="436.2" rx="2.7" ry="2.3" transform="rotate(-71 535.8 436.2)" fill="url(#ds5)"/><ellipse cx="539.4" cy="474.5" rx="2.7" ry="2.3" transform="rotate(-62 539.4 474.5)" fill="url(#ds5)"/><ellipse cx="542.9" cy="512.8" rx="2.7" ry="2.3" transform="rotate(-45 542.9 512.8)" fill="url(#ds5)"/><ellipse cx="546.5" cy="551.1" rx="2.7" ry="2.3" transform="rotate(-14 546.5 551.1)" fill="url(#ds5)"/><ellipse cx="550.0" cy="589.4" rx="2.7" ry="2.3" transform="rotate(24 550.0 589.4)" fill="url(#ds5)"/><ellipse cx="553.6" cy="627.7" rx="2.7" ry="2.3" transform="rotate(46 553.6 627.7)" fill="url(#ds5)"/><ellipse cx="557.1" cy="666.0" rx="2.7" ry="2.3" transform="rotate(58 557.1 666.0)" fill="url(#ds5)"/><ellipse cx="560.7" cy="704.3" rx="2.7" ry="2.3" transform="rotate(64 560.7 704.3)" fill="url(#ds5)"/><ellipse cx="564.2" cy="742.7" rx="2.7" ry="2.3" transform="rotate(68 564.2 742.7)" fill="url(#ds5)"/><ellipse cx="543.5" cy="127.7" rx="5.4" ry="3.6" transform="rotate(-83 543.5 127.7)" fill="url(#ds0)"/><ellipse cx="547.0" cy="165.8" rx="5.0" ry="3.5" transform="rotate(-82 547.0 165.8)" fill="url(#ds1)"/><ellipse cx="550.5" cy="203.9" rx="4.5" ry="3.3" transform="rotate(-81 550.5 203.9)" fill="url(#ds1)"/><ellipse cx="553.9" cy="241.9" rx="4.1" ry="3.1" transform="rotate(-79 553.9 241.9)" fill="url(#ds2)"/><ellipse cx="557.4" cy="279.9" rx="3.6" ry="2.9" transform="rotate(-77 557.4 279.9)" fill="url(#ds3)"/><ellipse cx="560.9" cy="318.0" rx="3.3" ry="2.7" transform="rotate(-75 560.9 318.0)" fill="url(#ds4)"/><ellipse cx="564.3" cy="356.0" rx="3.0" ry="2.5" transform="rotate(-71 564.3 356.0)" fill="url(#ds4)"/><ellipse cx="567.8" cy="394.0" rx="2.7" ry="2.3" transform="rotate(-66 567.8 394.0)" fill="url(#ds5)"/><ellipse cx="571.3" cy="432.4" rx="2.7" ry="2.3" transform="rotate(-59 571.3 432.4)" fill="url(#ds5)"/><ellipse cx="574.9" cy="470.7" rx="2.7" ry="2.3" transform="rotate(-49 574.9 470.7)" fill="url(#ds5)"/><ellipse cx="578.4" cy="509.0" rx="2.7" ry="2.3" transform="rotate(-33 578.4 509.0)" fill="url(#ds5)"/><ellipse cx="582.0" cy="547.3" rx="2.7" ry="2.3" transform="rotate(-11 582.0 547.3)" fill="url(#ds5)"/><ellipse cx="585.5" cy="585.6" rx="2.7" ry="2.3" transform="rotate(13 585.5 585.6)" fill="url(#ds5)"/><ellipse cx="589.1" cy="623.9" rx="2.7" ry="2.3" transform="rotate(32 589.1 623.9)" fill="url(#ds5)"/><ellipse cx="592.6" cy="662.2" rx="2.7" ry="2.3" transform="rotate(44 592.6 662.2)" fill="url(#ds5)"/><ellipse cx="596.2" cy="700.5" rx="2.7" ry="2.3" transform="rotate(53 596.2 700.5)" fill="url(#ds5)"/><ellipse cx="599.7" cy="738.8" rx="2.7" ry="2.3" transform="rotate(58 599.7 738.8)" fill="url(#ds5)"/><ellipse cx="579.0" cy="123.9" rx="5.5" ry="3.6" transform="rotate(-79 579.0 123.9)" fill="url(#ds0)"/><ellipse cx="582.5" cy="162.0" rx="5.1" ry="3.5" transform="rotate(-77 582.5 162.0)" fill="url(#ds0)"/><ellipse cx="586.0" cy="200.0" rx="4.6" ry="3.3" transform="rotate(-76 586.0 200.0)" fill="url(#ds1)"/><ellipse cx="589.4" cy="238.1" rx="4.1" ry="3.1" transform="rotate(-74 589.4 238.1)" fill="url(#ds2)"/><ellipse cx="592.9" cy="276.1" rx="3.7" ry="2.9" transform="rotate(-71 592.9 276.1)" fill="url(#ds3)"/><ellipse cx="596.3" cy="314.1" rx="3.3" ry="2.7" transform="rotate(-68 596.3 314.1)" fill="url(#ds3)"/><ellipse cx="599.8" cy="352.2" rx="3.0" ry="2.5" transform="rotate(-63 599.8 352.2)" fill="url(#ds4)"/><ellipse cx="603.3" cy="390.2" rx="2.7" ry="2.3" transform="rotate(-57 603.3 390.2)" fill="url(#ds5)"/><ellipse cx="606.8" cy="428.5" rx="2.7" ry="2.3" transform="rotate(-50 606.8 428.5)" fill="url(#ds5)"/><ellipse cx="610.4" cy="466.8" rx="2.7" ry="2.3" transform="rotate(-40 610.4 466.8)" fill="url(#ds5)"/><ellipse cx="613.9" cy="505.1" rx="2.7" ry="2.3" transform="rotate(-26 613.9 505.1)" fill="url(#ds5)"/><ellipse cx="617.5" cy="543.4" rx="2.7" ry="2.3" transform="rotate(-9 617.5 543.4)" fill="url(#ds5)"/><ellipse cx="621.0" cy="581.7" rx="2.7" ry="2.3" transform="rotate(8 621.0 581.7)" fill="url(#ds5)"/><ellipse cx="624.6" cy="620.0" rx="2.7" ry="2.3" transform="rotate(23 624.6 620.0)" fill="url(#ds5)"/><ellipse cx="628.1" cy="658.3" rx="2.7" ry="2.3" transform="rotate(35 628.1 658.3)" fill="url(#ds5)"/><ellipse cx="631.7" cy="696.6" rx="2.7" ry="2.3" transform="rotate(44 631.7 696.6)" fill="url(#ds5)"/><ellipse cx="635.2" cy="734.9" rx="2.7" ry="2.3" transform="rotate(50 635.2 734.9)" fill="url(#ds5)"/><ellipse cx="614.5" cy="120.0" rx="5.5" ry="3.6" transform="rotate(-75 614.5 120.0)" fill="url(#ds0)"/><ellipse cx="618.0" cy="158.2" rx="5.2" ry="3.5" transform="rotate(-73 618.0 158.2)" fill="url(#ds0)"/><ellipse cx="621.5" cy="196.2" rx="4.7" ry="3.3" transform="rotate(-71 621.5 196.2)" fill="url(#ds1)"/><ellipse cx="624.9" cy="234.2" rx="4.2" ry="3.1" transform="rotate(-68 624.9 234.2)" fill="url(#ds2)"/><ellipse cx="628.4" cy="272.3" rx="3.8" ry="2.9" transform="rotate(-65 628.4 272.3)" fill="url(#ds3)"/><ellipse cx="631.8" cy="310.3" rx="3.4" ry="2.7" transform="rotate(-61 631.8 310.3)" fill="url(#ds3)"/><ellipse cx="635.3" cy="348.3" rx="3.0" ry="2.5" transform="rotate(-57 635.3 348.3)" fill="url(#ds4)"/><ellipse cx="638.8" cy="386.4" rx="2.7" ry="2.3" transform="rotate(-51 638.8 386.4)" fill="url(#ds5)"/><ellipse cx="642.3" cy="424.6" rx="2.7" ry="2.3" transform="rotate(-43 642.3 424.6)" fill="url(#ds5)"/><ellipse cx="645.8" cy="462.9" rx="2.7" ry="2.3" transform="rotate(-33 645.8 462.9)" fill="url(#ds5)"/><ellipse cx="649.4" cy="501.2" rx="2.7" ry="2.3" transform="rotate(-22 649.4 501.2)" fill="url(#ds5)"/><ellipse cx="652.9" cy="539.6" rx="2.7" ry="2.3" transform="rotate(-9 652.9 539.6)" fill="url(#ds5)"/><ellipse cx="656.5" cy="577.9" rx="2.7" ry="2.3" transform="rotate(5 656.5 577.9)" fill="url(#ds5)"/><ellipse cx="660.0" cy="616.2" rx="2.7" ry="2.3" transform="rotate(17 660.0 616.2)" fill="url(#ds5)"/><ellipse cx="663.6" cy="654.5" rx="2.7" ry="2.3" transform="rotate(28 663.6 654.5)" fill="url(#ds5)"/><ellipse cx="667.1" cy="692.8" rx="2.7" ry="2.3" transform="rotate(36 667.1 692.8)" fill="url(#ds5)"/><ellipse cx="670.7" cy="731.1" rx="2.7" ry="2.3" transform="rotate(43 670.7 731.1)" fill="url(#ds5)"/><ellipse cx="650.0" cy="116.1" rx="5.6" ry="3.6" transform="rotate(-71 650.0 116.1)" fill="url(#ds0)"/><ellipse cx="653.5" cy="154.4" rx="5.3" ry="3.5" transform="rotate(-69 653.5 154.4)" fill="url(#ds0)"/><ellipse cx="657.0" cy="192.4" rx="4.8" ry="3.3" transform="rotate(-66 657.0 192.4)" fill="url(#ds1)"/><ellipse cx="660.4" cy="230.4" rx="4.3" ry="3.1" transform="rotate(-63 660.4 230.4)" fill="url(#ds2)"/><ellipse cx="663.9" cy="268.4" rx="3.8" ry="2.9" transform="rotate(-60 663.9 268.4)" fill="url(#ds3)"/><ellipse cx="667.3" cy="306.5" rx="3.4" ry="2.7" transform="rotate(-56 667.3 306.5)" fill="url(#ds3)"/><ellipse cx="670.8" cy="344.5" rx="3.1" ry="2.5" transform="rotate(-51 670.8 344.5)" fill="url(#ds4)"/><ellipse cx="674.2" cy="382.5" rx="2.8" ry="2.3" transform="rotate(-45 674.2 382.5)" fill="url(#ds5)"/></g>
<g><ellipse cx="65.1" cy="667.4" rx="4.0" ry="3.1" transform="rotate(165 65.1 667.4)" fill="url(#bs2)"/><ellipse cx="68.6" cy="705.6" rx="4.1" ry="3.1" transform="rotate(160 68.6 705.6)" fill="url(#bs2)"/><ellipse cx="65.1" cy="281.1" rx="4.3" ry="3.1" transform="rotate(-148 65.1 281.1)" fill="url(#bs3)"/><ellipse cx="68.7" cy="319.3" rx="4.2" ry="3.1" transform="rotate(-152 68.7 319.3)" fill="url(#bs3)"/><ellipse cx="72.2" cy="357.5" rx="4.1" ry="3.1" transform="rotate(-156 72.2 357.5)" fill="url(#bs3)"/><ellipse cx="75.7" cy="395.8" rx="4.1" ry="3.1" transform="rotate(-160 75.7 395.8)" fill="url(#bs2)"/><ellipse cx="79.2" cy="434.0" rx="4.0" ry="3.1" transform="rotate(-165 79.2 434.0)" fill="url(#bs2)"/><ellipse cx="82.7" cy="472.3" rx="3.9" ry="3.1" transform="rotate(-169 82.7 472.3)" fill="url(#bs2)"/><ellipse cx="86.3" cy="510.5" rx="3.9" ry="3.0" transform="rotate(-175 86.3 510.5)" fill="url(#bs2)"/><ellipse cx="89.8" cy="548.8" rx="3.9" ry="3.0" transform="rotate(-180 89.8 548.8)" fill="url(#bs2)"/><ellipse cx="93.4" cy="587.0" rx="3.8" ry="3.0" transform="rotate(175 93.4 587.0)" fill="url(#bs2)"/><ellipse cx="96.9" cy="625.3" rx="3.9" ry="3.0" transform="rotate(169 96.9 625.3)" fill="url(#bs2)"/><ellipse cx="100.5" cy="663.5" rx="3.9" ry="3.0" transform="rotate(164 100.5 663.5)" fill="url(#bs2)"/><ellipse cx="104.0" cy="701.8" rx="3.9" ry="3.1" transform="rotate(159 104.0 701.8)" fill="url(#bs2)"/><ellipse cx="82.9" cy="86.1" rx="4.8" ry="3.2" transform="rotate(-132 82.9 86.1)" fill="url(#bs4)"/><ellipse cx="86.5" cy="124.4" rx="4.7" ry="3.2" transform="rotate(-134 86.5 124.4)" fill="url(#bs4)"/><ellipse cx="90.0" cy="162.6" rx="4.6" ry="3.2" transform="rotate(-137 90.0 162.6)" fill="url(#bs4)"/><ellipse cx="93.5" cy="200.8" rx="4.5" ry="3.1" transform="rotate(-139 93.5 200.8)" fill="url(#bs3)"/><ellipse cx="97.0" cy="239.0" rx="4.3" ry="3.1" transform="rotate(-142 97.0 239.0)" fill="url(#bs3)"/><ellipse cx="100.5" cy="277.2" rx="4.2" ry="3.1" transform="rotate(-146 100.5 277.2)" fill="url(#bs3)"/><ellipse cx="104.1" cy="315.4" rx="4.1" ry="3.1" transform="rotate(-149 104.1 315.4)" fill="url(#bs2)"/><ellipse cx="107.6" cy="353.7" rx="4.0" ry="3.1" transform="rotate(-153 107.6 353.7)" fill="url(#bs2)"/><ellipse cx="111.1" cy="391.9" rx="3.9" ry="3.1" transform="rotate(-158 111.1 391.9)" fill="url(#bs2)"/><ellipse cx="114.6" cy="430.2" rx="3.8" ry="3.0" transform="rotate(-163 114.6 430.2)" fill="url(#bs2)"/><ellipse cx="118.1" cy="468.4" rx="3.8" ry="3.0" transform="rotate(-168 118.1 468.4)" fill="url(#bs2)"/><ellipse cx="121.6" cy="506.7" rx="3.7" ry="3.0" transform="rotate(-173 121.6 506.7)" fill="url(#bs2)"/><ellipse cx="125.2" cy="544.9" rx="3.7" ry="3.0" transform="rotate(-179 125.2 544.9)" fill="url(#bs2)"/><ellipse cx="128.7" cy="583.2" rx="3.7" ry="3.0" transform="rotate(175 128.7 583.2)" fill="url(#bs2)"/><ellipse cx="132.3" cy="621.4" rx="3.7" ry="3.0" transform="rotate(169 132.3 621.4)" fill="url(#bs2)"/><ellipse cx="135.8" cy="659.7" rx="3.7" ry="3.0" transform="rotate(163 135.8 659.7)" fill="url(#bs2)"/><ellipse cx="139.4" cy="697.9" rx="3.8" ry="3.0" transform="rotate(158 139.4 697.9)" fill="url(#bs2)"/><ellipse cx="143.0" cy="736.2" rx="3.8" ry="3.0" transform="rotate(152 143.0 736.2)" fill="url(#bs2)"/><ellipse cx="118.4" cy="82.3" rx="4.8" ry="3.2" transform="rotate(-129 118.4 82.3)" fill="url(#bs4)"/><ellipse cx="121.9" cy="120.5" rx="4.6" ry="3.2" transform="rotate(-131 121.9 120.5)" fill="url(#bs4)"/><ellipse cx="125.4" cy="158.7" rx="4.5" ry="3.1" transform="rotate(-134 125.4 158.7)" fill="url(#bs3)"/><ellipse cx="128.9" cy="196.9" rx="4.3" ry="3.1" transform="rotate(-136 128.9 196.9)" fill="url(#bs3)"/><ellipse cx="132.4" cy="235.1" rx="4.2" ry="3.1" transform="rotate(-139 132.4 235.1)" fill="url(#bs3)"/><ellipse cx="135.9" cy="273.3" rx="4.1" ry="3.1" transform="rotate(-143 135.9 273.3)" fill="url(#bs2)"/><ellipse cx="139.4" cy="311.6" rx="4.0" ry="3.1" transform="rotate(-147 139.4 311.6)" fill="url(#bs2)"/><ellipse cx="143.0" cy="349.8" rx="3.9" ry="3.0" transform="rotate(-151 143.0 349.8)" fill="url(#bs2)"/><ellipse cx="146.5" cy="388.0" rx="3.8" ry="3.0" transform="rotate(-155 146.5 388.0)" fill="url(#bs2)"/><ellipse cx="150.0" cy="426.3" rx="3.7" ry="3.0" transform="rotate(-161 150.0 426.3)" fill="url(#bs1)"/><ellipse cx="153.5" cy="464.5" rx="3.6" ry="3.0" transform="rotate(-166 153.5 464.5)" fill="url(#bs1)"/><ellipse cx="157.0" cy="502.8" rx="3.6" ry="3.0" transform="rotate(-172 157.0 502.8)" fill="url(#bs1)"/><ellipse cx="160.6" cy="541.1" rx="3.5" ry="3.0" transform="rotate(-178 160.6 541.1)" fill="url(#bs1)"/><ellipse cx="164.1" cy="579.3" rx="3.5" ry="3.0" transform="rotate(175 164.1 579.3)" fill="url(#bs1)"/><ellipse cx="167.6" cy="617.6" rx="3.5" ry="3.0" transform="rotate(169 167.6 617.6)" fill="url(#bs1)"/><ellipse cx="171.2" cy="655.9" rx="3.5" ry="3.0" transform="rotate(162 171.2 655.9)" fill="url(#bs1)"/><ellipse cx="174.8" cy="694.1" rx="3.6" ry="3.0" transform="rotate(156 174.8 694.1)" fill="url(#bs1)"/><ellipse cx="178.3" cy="732.4" rx="3.7" ry="3.0" transform="rotate(150 178.3 732.4)" fill="url(#bs1)"/><ellipse cx="157.3" cy="116.6" rx="4.5" ry="3.2" transform="rotate(-128 157.3 116.6)" fill="url(#bs3)"/><ellipse cx="160.8" cy="154.8" rx="4.4" ry="3.1" transform="rotate(-131 160.8 154.8)" fill="url(#bs3)"/><ellipse cx="164.3" cy="193.0" rx="4.2" ry="3.1" transform="rotate(-133 164.3 193.0)" fill="url(#bs3)"/><ellipse cx="167.8" cy="231.3" rx="4.1" ry="3.1" transform="rotate(-136 167.8 231.3)" fill="url(#bs2)"/><ellipse cx="171.3" cy="269.5" rx="4.0" ry="3.1" transform="rotate(-140 171.3 269.5)" fill="url(#bs2)"/><ellipse cx="174.8" cy="307.7" rx="3.8" ry="3.0" transform="rotate(-143 174.8 307.7)" fill="url(#bs2)"/><ellipse cx="178.3" cy="345.9" rx="3.7" ry="3.0" transform="rotate(-148 178.3 345.9)" fill="url(#bs2)"/><ellipse cx="181.9" cy="384.2" rx="3.6" ry="3.0" transform="rotate(-152 181.9 384.2)" fill="url(#bs1)"/><ellipse cx="185.4" cy="422.4" rx="3.5" ry="3.0" transform="rotate(-158 185.4 422.4)" fill="url(#bs1)"/><ellipse cx="188.9" cy="460.7" rx="3.4" ry="3.0" transform="rotate(-164 188.9 460.7)" fill="url(#bs1)"/><ellipse cx="192.4" cy="498.9" rx="3.4" ry="3.0" transform="rotate(-171 192.4 498.9)" fill="url(#bs1)"/><ellipse cx="195.9" cy="537.2" rx="3.4" ry="3.0" transform="rotate(-178 195.9 537.2)" fill="url(#bs1)"/><ellipse cx="199.5" cy="575.5" rx="3.3" ry="3.0" transform="rotate(175 199.5 575.5)" fill="url(#bs1)"/><ellipse cx="203.0" cy="613.8" rx="3.4" ry="3.0" transform="rotate(168 203.0 613.8)" fill="url(#bs1)"/><ellipse cx="206.6" cy="652.0" rx="3.4" ry="3.0" transform="rotate(161 206.6 652.0)" fill="url(#bs1)"/><ellipse cx="210.2" cy="690.3" rx="3.4" ry="3.0" transform="rotate(154 210.2 690.3)" fill="url(#bs1)"/><ellipse cx="213.7" cy="728.5" rx="3.5" ry="3.0" transform="rotate(148 213.7 728.5)" fill="url(#bs1)"/><ellipse cx="192.7" cy="112.8" rx="4.4" ry="3.1" transform="rotate(-125 192.7 112.8)" fill="url(#bs3)"/><ellipse cx="196.2" cy="151.0" rx="4.3" ry="3.1" transform="rotate(-127 196.2 151.0)" fill="url(#bs3)"/><ellipse cx="199.7" cy="189.2" rx="4.1" ry="3.1" transform="rotate(-130 199.7 189.2)" fill="url(#bs3)"/><ellipse cx="203.2" cy="227.4" rx="4.0" ry="3.1" transform="rotate(-133 203.2 227.4)" fill="url(#bs2)"/><ellipse cx="206.7" cy="265.6" rx="3.8" ry="3.0" transform="rotate(-136 206.7 265.6)" fill="url(#bs2)"/><ellipse cx="210.2" cy="303.8" rx="3.7" ry="3.0" transform="rotate(-140 210.2 303.8)" fill="url(#bs2)"/><ellipse cx="213.7" cy="342.0" rx="3.6" ry="3.0" transform="rotate(-144 213.7 342.0)" fill="url(#bs1)"/><ellipse cx="217.2" cy="380.3" rx="3.5" ry="3.0" transform="rotate(-149 217.2 380.3)" fill="url(#bs1)"/><ellipse cx="220.8" cy="418.5" rx="3.4" ry="3.0" transform="rotate(-155 220.8 418.5)" fill="url(#bs1)"/><ellipse cx="224.3" cy="456.8" rx="3.3" ry="2.9" transform="rotate(-161 224.3 456.8)" fill="url(#bs1)"/><ellipse cx="227.8" cy="495.1" rx="3.2" ry="2.9" transform="rotate(-169 227.8 495.1)" fill="url(#bs1)"/><ellipse cx="231.3" cy="533.3" rx="3.2" ry="2.9" transform="rotate(-176 231.3 533.3)" fill="url(#bs0)"/><ellipse cx="234.8" cy="571.6" rx="3.2" ry="2.9" transform="rotate(175 234.8 571.6)" fill="url(#bs0)"/><ellipse cx="238.4" cy="609.9" rx="3.2" ry="2.9" transform="rotate(167 238.4 609.9)" fill="url(#bs0)"/><ellipse cx="242.0" cy="648.2" rx="3.2" ry="2.9" transform="rotate(159 242.0 648.2)" fill="url(#bs0)"/><ellipse cx="245.5" cy="686.5" rx="3.3" ry="2.9" transform="rotate(152 245.5 686.5)" fill="url(#bs1)"/><ellipse cx="249.1" cy="724.7" rx="3.4" ry="3.0" transform="rotate(145 249.1 724.7)" fill="url(#bs1)"/><ellipse cx="228.1" cy="108.9" rx="4.4" ry="3.1" transform="rotate(-122 228.1 108.9)" fill="url(#bs3)"/><ellipse cx="231.6" cy="147.1" rx="4.2" ry="3.1" transform="rotate(-124 231.6 147.1)" fill="url(#bs3)"/><ellipse cx="235.1" cy="185.3" rx="4.0" ry="3.1" transform="rotate(-126 235.1 185.3)" fill="url(#bs2)"/><ellipse cx="238.6" cy="223.5" rx="3.9" ry="3.0" transform="rotate(-129 238.6 223.5)" fill="url(#bs2)"/><ellipse cx="242.1" cy="261.7" rx="3.7" ry="3.0" transform="rotate(-132 242.1 261.7)" fill="url(#bs2)"/><ellipse cx="245.6" cy="299.9" rx="3.6" ry="3.0" transform="rotate(-135 245.6 299.9)" fill="url(#bs1)"/><ellipse cx="249.2" cy="338.2" rx="3.5" ry="3.0" transform="rotate(-140 249.2 338.2)" fill="url(#bs1)"/><ellipse cx="252.7" cy="376.4" rx="3.3" ry="3.0" transform="rotate(-145 252.7 376.4)" fill="url(#bs1)"/><ellipse cx="256.1" cy="414.6" rx="3.2" ry="2.9" transform="rotate(-151 256.1 414.6)" fill="url(#bs1)"/><ellipse cx="259.6" cy="452.9" rx="3.1" ry="2.9" transform="rotate(-158 259.6 452.9)" fill="url(#bs0)"/><ellipse cx="263.2" cy="491.2" rx="3.1" ry="2.9" transform="rotate(-166 263.2 491.2)" fill="url(#bs0)"/><ellipse cx="266.7" cy="529.5" rx="3.0" ry="2.9" transform="rotate(-175 266.7 529.5)" fill="url(#bs0)"/><ellipse cx="270.2" cy="567.8" rx="3.0" ry="2.9" transform="rotate(176 270.2 567.8)" fill="url(#bs0)"/><ellipse cx="273.8" cy="606.1" rx="3.0" ry="2.9" transform="rotate(166 273.8 606.1)" fill="url(#bs0)"/><ellipse cx="277.3" cy="644.4" rx="3.1" ry="2.9" transform="rotate(157 277.3 644.4)" fill="url(#bs0)"/><ellipse cx="280.9" cy="682.7" rx="3.1" ry="2.9" transform="rotate(149 280.9 682.7)" fill="url(#bs0)"/><ellipse cx="284.5" cy="720.9" rx="3.2" ry="2.9" transform="rotate(142 284.5 720.9)" fill="url(#bs0)"/><ellipse cx="263.5" cy="105.0" rx="4.3" ry="3.1" transform="rotate(-118 263.5 105.0)" fill="url(#bs3)"/><ellipse cx="267.0" cy="143.2" rx="4.1" ry="3.1" transform="rotate(-120 267.0 143.2)" fill="url(#bs3)"/><ellipse cx="270.5" cy="181.4" rx="4.0" ry="3.1" transform="rotate(-122 270.5 181.4)" fill="url(#bs2)"/><ellipse cx="274.1" cy="219.6" rx="3.8" ry="3.0" transform="rotate(-124 274.1 219.6)" fill="url(#bs2)"/><ellipse cx="277.6" cy="257.8" rx="3.7" ry="3.0" transform="rotate(-127 277.6 257.8)" fill="url(#bs1)"/><ellipse cx="281.1" cy="296.0" rx="3.5" ry="3.0" transform="rotate(-131 281.1 296.0)" fill="url(#bs1)"/><ellipse cx="284.6" cy="334.3" rx="3.4" ry="3.0" transform="rotate(-135 284.6 334.3)" fill="url(#bs1)"/><ellipse cx="288.1" cy="372.5" rx="3.2" ry="2.9" transform="rotate(-140 288.1 372.5)" fill="url(#bs0)"/><ellipse cx="291.6" cy="410.7" rx="3.1" ry="2.9" transform="rotate(-146 291.6 410.7)" fill="url(#bs0)"/><ellipse cx="295.0" cy="449.0" rx="3.0" ry="2.9" transform="rotate(-154 295.0 449.0)" fill="url(#bs0)"/><ellipse cx="298.6" cy="487.3" rx="3.0" ry="2.9" transform="rotate(-163 298.6 487.3)" fill="url(#bs0)"/><ellipse cx="302.1" cy="525.6" rx="3.0" ry="2.9" transform="rotate(-173 302.1 525.6)" fill="url(#bs0)"/><ellipse cx="305.7" cy="563.9" rx="3.0" ry="2.9" transform="rotate(176 305.7 563.9)" fill="url(#bs0)"/><ellipse cx="309.2" cy="602.2" rx="3.0" ry="2.9" transform="rotate(165 309.2 602.2)" fill="url(#bs0)"/><ellipse cx="312.8" cy="640.5" rx="3.0" ry="2.9" transform="rotate(154 312.8 640.5)" fill="url(#bs0)"/><ellipse cx="316.3" cy="678.8" rx="3.0" ry="2.9" transform="rotate(145 316.3 678.8)" fill="url(#bs0)"/><ellipse cx="319.9" cy="717.1" rx="3.1" ry="2.9" transform="rotate(137 319.9 717.1)" fill="url(#bs0)"/><ellipse cx="298.9" cy="101.2" rx="4.2" ry="3.1" transform="rotate(-114 298.9 101.2)" fill="url(#bs3)"/><ellipse cx="302.4" cy="139.4" rx="4.1" ry="3.1" transform="rotate(-116 302.4 139.4)" fill="url(#bs2)"/><ellipse cx="306.0" cy="177.6" rx="3.9" ry="3.1" transform="rotate(-118 306.0 177.6)" fill="url(#bs2)"/><ellipse cx="309.5" cy="215.7" rx="3.7" ry="3.0" transform="rotate(-120 309.5 215.7)" fill="url(#bs2)"/><ellipse cx="313.0" cy="253.9" rx="3.6" ry="3.0" transform="rotate(-122 313.0 253.9)" fill="url(#bs1)"/><ellipse cx="316.5" cy="292.2" rx="3.4" ry="3.0" transform="rotate(-125 316.5 292.2)" fill="url(#bs1)"/><ellipse cx="320.0" cy="330.4" rx="3.3" ry="2.9" transform="rotate(-129 320.0 330.4)" fill="url(#bs1)"/><ellipse cx="323.5" cy="368.6" rx="3.1" ry="2.9" transform="rotate(-134 323.5 368.6)" fill="url(#bs0)"/><ellipse cx="327.0" cy="406.8" rx="3.0" ry="2.9" transform="rotate(-140 327.0 406.8)" fill="url(#bs0)"/><ellipse cx="330.5" cy="445.2" rx="3.0" ry="2.9" transform="rotate(-148 330.5 445.2)" fill="url(#bs0)"/><ellipse cx="334.1" cy="483.5" rx="3.0" ry="2.9" transform="rotate(-158 334.1 483.5)" fill="url(#bs0)"/><ellipse cx="337.6" cy="521.8" rx="3.0" ry="2.9" transform="rotate(-170 337.6 521.8)" fill="url(#bs0)"/><ellipse cx="341.2" cy="560.1" rx="3.0" ry="2.9" transform="rotate(176 341.2 560.1)" fill="url(#bs0)"/><ellipse cx="344.7" cy="598.4" rx="3.0" ry="2.9" transform="rotate(163 344.7 598.4)" fill="url(#bs0)"/><ellipse cx="348.3" cy="636.7" rx="3.0" ry="2.9" transform="rotate(150 348.3 636.7)" fill="url(#bs0)"/><ellipse cx="351.8" cy="675.0" rx="3.0" ry="2.9" transform="rotate(140 351.8 675.0)" fill="url(#bs0)"/><ellipse cx="355.4" cy="713.3" rx="3.0" ry="2.9" transform="rotate(132 355.4 713.3)" fill="url(#bs0)"/><ellipse cx="334.3" cy="97.3" rx="4.2" ry="3.1" transform="rotate(-110 334.3 97.3)" fill="url(#bs3)"/><ellipse cx="337.9" cy="135.5" rx="4.0" ry="3.1" transform="rotate(-111 337.9 135.5)" fill="url(#bs2)"/><ellipse cx="341.4" cy="173.7" rx="3.8" ry="3.0" transform="rotate(-113 341.4 173.7)" fill="url(#bs2)"/><ellipse cx="344.9" cy="211.9" rx="3.7" ry="3.0" transform="rotate(-115 344.9 211.9)" fill="url(#bs1)"/><ellipse cx="348.4" cy="250.1" rx="3.5" ry="3.0" transform="rotate(-117 348.4 250.1)" fill="url(#bs1)"/><ellipse cx="351.9" cy="288.3" rx="3.3" ry="3.0" transform="rotate(-119 351.9 288.3)" fill="url(#bs1)"/><ellipse cx="355.4" cy="326.5" rx="3.2" ry="2.9" transform="rotate(-123 355.4 326.5)" fill="url(#bs0)"/><ellipse cx="358.9" cy="364.7" rx="3.0" ry="2.9" transform="rotate(-127 358.9 364.7)" fill="url(#bs0)"/><ellipse cx="362.5" cy="403.0" rx="3.0" ry="2.9" transform="rotate(-133 362.5 403.0)" fill="url(#bs0)"/><ellipse cx="366.0" cy="441.3" rx="3.0" ry="2.9" transform="rotate(-141 366.0 441.3)" fill="url(#bs0)"/><ellipse cx="369.6" cy="479.6" rx="3.0" ry="2.9" transform="rotate(-152 369.6 479.6)" fill="url(#bs0)"/><ellipse cx="373.1" cy="517.9" rx="3.0" ry="2.9" transform="rotate(-166 373.1 517.9)" fill="url(#bs0)"/><ellipse cx="376.7" cy="556.2" rx="3.0" ry="2.9" transform="rotate(177 376.7 556.2)" fill="url(#bs0)"/><ellipse cx="380.2" cy="594.5" rx="3.0" ry="2.9" transform="rotate(160 380.2 594.5)" fill="url(#bs0)"/><ellipse cx="383.8" cy="632.8" rx="3.0" ry="2.9" transform="rotate(145 383.8 632.8)" fill="url(#bs0)"/><ellipse cx="387.3" cy="671.1" rx="3.0" ry="2.9" transform="rotate(133 387.3 671.1)" fill="url(#bs0)"/><ellipse cx="390.9" cy="709.4" rx="3.0" ry="2.9" transform="rotate(124 390.9 709.4)" fill="url(#bs0)"/><ellipse cx="369.8" cy="93.4" rx="4.2" ry="3.1" transform="rotate(-106 369.8 93.4)" fill="url(#bs3)"/><ellipse cx="373.3" cy="131.6" rx="4.0" ry="3.1" transform="rotate(-107 373.3 131.6)" fill="url(#bs2)"/><ellipse cx="376.8" cy="169.8" rx="3.8" ry="3.0" transform="rotate(-108 376.8 169.8)" fill="url(#bs2)"/><ellipse cx="380.3" cy="208.0" rx="3.6" ry="3.0" transform="rotate(-109 380.3 208.0)" fill="url(#bs1)"/><ellipse cx="383.9" cy="246.2" rx="3.5" ry="3.0" transform="rotate(-111 383.9 246.2)" fill="url(#bs1)"/><ellipse cx="387.4" cy="284.4" rx="3.3" ry="2.9" transform="rotate(-113 387.4 284.4)" fill="url(#bs1)"/><ellipse cx="390.9" cy="322.6" rx="3.1" ry="2.9" transform="rotate(-116 390.9 322.6)" fill="url(#bs0)"/><ellipse cx="394.4" cy="360.8" rx="3.0" ry="2.9" transform="rotate(-119 394.4 360.8)" fill="url(#bs0)"/><ellipse cx="398.0" cy="399.1" rx="3.0" ry="2.9" transform="rotate(-124 398.0 399.1)" fill="url(#bs0)"/><ellipse cx="401.5" cy="437.4" rx="3.0" ry="2.9" transform="rotate(-131 401.5 437.4)" fill="url(#bs0)"/><ellipse cx="405.1" cy="475.7" rx="3.0" ry="2.9" transform="rotate(-142 405.1 475.7)" fill="url(#bs0)"/><ellipse cx="408.6" cy="514.0" rx="3.0" ry="2.9" transform="rotate(-159 408.6 514.0)" fill="url(#bs0)"/><ellipse cx="412.2" cy="552.4" rx="3.0" ry="2.9" transform="rotate(178 412.2 552.4)" fill="url(#bs0)"/><ellipse cx="415.7" cy="590.7" rx="3.0" ry="2.9" transform="rotate(154 415.7 590.7)" fill="url(#bs0)"/><ellipse cx="419.3" cy="629.0" rx="3.0" ry="2.9" transform="rotate(136 419.3 629.0)" fill="url(#bs0)"/><ellipse cx="422.8" cy="667.3" rx="3.0" ry="2.9" transform="rotate(123 422.8 667.3)" fill="url(#bs0)"/><ellipse cx="426.4" cy="705.6" rx="3.0" ry="2.9" transform="rotate(115 426.4 705.6)" fill="url(#bs0)"/><ellipse cx="405.2" cy="89.6" rx="4.1" ry="3.1" transform="rotate(-102 405.2 89.6)" fill="url(#bs3)"/><ellipse cx="408.7" cy="127.8" rx="4.0" ry="3.1" transform="rotate(-102 408.7 127.8)" fill="url(#bs2)"/><ellipse cx="412.3" cy="166.0" rx="3.8" ry="3.0" transform="rotate(-103 412.3 166.0)" fill="url(#bs2)"/><ellipse cx="415.8" cy="204.1" rx="3.6" ry="3.0" transform="rotate(-104 415.8 204.1)" fill="url(#bs1)"/><ellipse cx="419.3" cy="242.3" rx="3.4" ry="3.0" transform="rotate(-105 419.3 242.3)" fill="url(#bs1)"/><ellipse cx="422.8" cy="280.5" rx="3.2" ry="2.9" transform="rotate(-106 422.8 280.5)" fill="url(#bs1)"/><ellipse cx="426.4" cy="318.7" rx="3.1" ry="2.9" transform="rotate(-108 426.4 318.7)" fill="url(#bs0)"/><ellipse cx="429.9" cy="357.0" rx="3.0" ry="2.9" transform="rotate(-110 429.9 357.0)" fill="url(#bs0)"/><ellipse cx="433.4" cy="395.3" rx="3.0" ry="2.9" transform="rotate(-113 433.4 395.3)" fill="url(#bs0)"/><ellipse cx="437.0" cy="433.6" rx="3.0" ry="2.9" transform="rotate(-118 437.0 433.6)" fill="url(#bs0)"/><ellipse cx="440.5" cy="471.9" rx="3.0" ry="2.9" transform="rotate(-127 440.5 471.9)" fill="url(#bs0)"/><ellipse cx="444.1" cy="510.2" rx="3.0" ry="2.9" transform="rotate(-145 444.1 510.2)" fill="url(#bs0)"/><ellipse cx="447.6" cy="548.5" rx="3.0" ry="2.9" transform="rotate(-178 447.6 548.5)" fill="url(#bs0)"/><ellipse cx="451.2" cy="586.8" rx="3.0" ry="2.9" transform="rotate(143 451.2 586.8)" fill="url(#bs0)"/><ellipse cx="454.7" cy="625.1" rx="3.0" ry="2.9" transform="rotate(121 454.7 625.1)" fill="url(#bs0)"/><ellipse cx="458.3" cy="663.4" rx="3.0" ry="2.9" transform="rotate(110 458.3 663.4)" fill="url(#bs0)"/><ellipse cx="461.8" cy="701.7" rx="3.0" ry="2.9" transform="rotate(104 461.8 701.7)" fill="url(#bs0)"/><ellipse cx="440.6" cy="85.7" rx="4.1" ry="3.1" transform="rotate(-97 440.6 85.7)" fill="url(#bs3)"/><ellipse cx="444.2" cy="123.9" rx="3.9" ry="3.1" transform="rotate(-97 444.2 123.9)" fill="url(#bs2)"/><ellipse cx="447.7" cy="162.1" rx="3.8" ry="3.0" transform="rotate(-98 447.7 162.1)" fill="url(#bs2)"/><ellipse cx="451.2" cy="200.3" rx="3.6" ry="3.0" transform="rotate(-98 451.2 200.3)" fill="url(#bs1)"/><ellipse cx="454.8" cy="238.5" rx="3.4" ry="3.0" transform="rotate(-98 454.8 238.5)" fill="url(#bs1)"/><ellipse cx="458.3" cy="276.7" rx="3.2" ry="2.9" transform="rotate(-99 458.3 276.7)" fill="url(#bs0)"/><ellipse cx="461.8" cy="314.8" rx="3.0" ry="2.9" transform="rotate(-99 461.8 314.8)" fill="url(#bs0)"/><ellipse cx="465.4" cy="353.1" rx="3.0" ry="2.9" transform="rotate(-100 465.4 353.1)" fill="url(#bs0)"/><ellipse cx="468.9" cy="391.4" rx="3.0" ry="2.9" transform="rotate(-101 468.9 391.4)" fill="url(#bs0)"/><ellipse cx="472.5" cy="429.7" rx="3.0" ry="2.9" transform="rotate(-103 472.5 429.7)" fill="url(#bs0)"/><ellipse cx="476.0" cy="468.0" rx="3.0" ry="2.9" transform="rotate(-106 476.0 468.0)" fill="url(#bs0)"/><ellipse cx="479.6" cy="506.3" rx="3.0" ry="2.9" transform="rotate(-115 479.6 506.3)" fill="url(#bs0)"/><ellipse cx="483.1" cy="544.6" rx="3.0" ry="2.9" transform="rotate(-162 483.1 544.6)" fill="url(#bs0)"/><ellipse cx="486.7" cy="582.9" rx="3.0" ry="2.9" transform="rotate(112 486.7 582.9)" fill="url(#bs0)"/><ellipse cx="490.2" cy="621.2" rx="3.0" ry="2.9" transform="rotate(98 490.2 621.2)" fill="url(#bs0)"/><ellipse cx="493.8" cy="659.6" rx="3.0" ry="2.9" transform="rotate(93 493.8 659.6)" fill="url(#bs0)"/><ellipse cx="497.3" cy="697.9" rx="3.0" ry="2.9" transform="rotate(91 497.3 697.9)" fill="url(#bs0)"/><ellipse cx="500.9" cy="736.2" rx="3.0" ry="2.9" transform="rotate(90 500.9 736.2)" fill="url(#bs0)"/><ellipse cx="476.0" cy="81.9" rx="4.1" ry="3.1" transform="rotate(-93 476.0 81.9)" fill="url(#bs3)"/><ellipse cx="479.6" cy="120.1" rx="4.0" ry="3.1" transform="rotate(-93 479.6 120.1)" fill="url(#bs2)"/><ellipse cx="483.1" cy="158.2" rx="3.8" ry="3.0" transform="rotate(-92 483.1 158.2)" fill="url(#bs2)"/><ellipse cx="486.7" cy="196.4" rx="3.6" ry="3.0" transform="rotate(-92 486.7 196.4)" fill="url(#bs1)"/><ellipse cx="490.2" cy="234.6" rx="3.4" ry="3.0" transform="rotate(-92 490.2 234.6)" fill="url(#bs1)"/><ellipse cx="493.8" cy="272.8" rx="3.2" ry="2.9" transform="rotate(-91 493.8 272.8)" fill="url(#bs0)"/><ellipse cx="497.3" cy="311.0" rx="3.0" ry="2.9" transform="rotate(-91 497.3 311.0)" fill="url(#bs0)"/><ellipse cx="500.9" cy="349.3" rx="3.0" ry="2.9" transform="rotate(-90 500.9 349.3)" fill="url(#bs0)"/><ellipse cx="504.4" cy="387.6" rx="3.0" ry="2.9" transform="rotate(-88 504.4 387.6)" fill="url(#bs0)"/><ellipse cx="508.0" cy="425.9" rx="3.0" ry="2.9" transform="rotate(-86 508.0 425.9)" fill="url(#bs0)"/><ellipse cx="511.5" cy="464.2" rx="3.0" ry="2.9" transform="rotate(-82 511.5 464.2)" fill="url(#bs0)"/><ellipse cx="515.1" cy="502.5" rx="3.0" ry="2.9" transform="rotate(-72 515.1 502.5)" fill="url(#bs0)"/><ellipse cx="518.6" cy="540.8" rx="3.0" ry="2.9" transform="rotate(-26 518.6 540.8)" fill="url(#bs0)"/><ellipse cx="522.2" cy="579.1" rx="3.0" ry="2.9" transform="rotate(53 522.2 579.1)" fill="url(#bs0)"/><ellipse cx="525.7" cy="617.4" rx="3.0" ry="2.9" transform="rotate(69 525.7 617.4)" fill="url(#bs0)"/><ellipse cx="529.3" cy="655.7" rx="3.0" ry="2.9" transform="rotate(75 529.3 655.7)" fill="url(#bs0)"/><ellipse cx="532.8" cy="694.0" rx="3.0" ry="2.9" transform="rotate(77 532.8 694.0)" fill="url(#bs0)"/><ellipse cx="536.4" cy="732.3" rx="3.0" ry="2.9" transform="rotate(79 536.4 732.3)" fill="url(#bs0)"/><ellipse cx="515.0" cy="116.2" rx="4.0" ry="3.1" transform="rotate(-88 515.0 116.2)" fill="url(#bs2)"/><ellipse cx="518.6" cy="154.4" rx="3.8" ry="3.0" transform="rotate(-87 518.6 154.4)" fill="url(#bs2)"/><ellipse cx="522.1" cy="192.6" rx="3.6" ry="3.0" transform="rotate(-86 522.1 192.6)" fill="url(#bs1)"/><ellipse cx="525.7" cy="230.8" rx="3.4" ry="3.0" transform="rotate(-85 525.7 230.8)" fill="url(#bs1)"/><ellipse cx="529.2" cy="269.0" rx="3.2" ry="2.9" transform="rotate(-84 529.2 269.0)" fill="url(#bs1)"/><ellipse cx="532.8" cy="307.1" rx="3.1" ry="2.9" transform="rotate(-82 532.8 307.1)" fill="url(#bs0)"/><ellipse cx="536.3" cy="345.4" rx="3.0" ry="2.9" transform="rotate(-80 536.3 345.4)" fill="url(#bs0)"/><ellipse cx="539.9" cy="383.7" rx="3.0" ry="2.9" transform="rotate(-77 539.9 383.7)" fill="url(#bs0)"/><ellipse cx="543.4" cy="422.0" rx="3.0" ry="2.9" transform="rotate(-71 543.4 422.0)" fill="url(#bs0)"/><ellipse cx="547.0" cy="460.3" rx="3.0" ry="2.9" transform="rotate(-62 547.0 460.3)" fill="url(#bs0)"/><ellipse cx="550.5" cy="498.6" rx="3.0" ry="2.9" transform="rotate(-45 550.5 498.6)" fill="url(#bs0)"/><ellipse cx="554.1" cy="536.9" rx="3.0" ry="2.9" transform="rotate(-14 554.1 536.9)" fill="url(#bs0)"/><ellipse cx="557.6" cy="575.2" rx="3.0" ry="2.9" transform="rotate(24 557.6 575.2)" fill="url(#bs0)"/><ellipse cx="561.2" cy="613.5" rx="3.0" ry="2.9" transform="rotate(46 561.2 613.5)" fill="url(#bs0)"/><ellipse cx="564.7" cy="651.8" rx="3.0" ry="2.9" transform="rotate(58 564.7 651.8)" fill="url(#bs0)"/><ellipse cx="568.3" cy="690.1" rx="3.0" ry="2.9" transform="rotate(64 568.3 690.1)" fill="url(#bs0)"/><ellipse cx="571.8" cy="728.5" rx="3.0" ry="2.9" transform="rotate(68 571.8 728.5)" fill="url(#bs0)"/><ellipse cx="550.5" cy="112.4" rx="4.0" ry="3.1" transform="rotate(-83 550.5 112.4)" fill="url(#bs2)"/><ellipse cx="554.0" cy="150.6" rx="3.8" ry="3.0" transform="rotate(-82 554.0 150.6)" fill="url(#bs2)"/><ellipse cx="557.6" cy="188.7" rx="3.6" ry="3.0" transform="rotate(-81 557.6 188.7)" fill="url(#bs1)"/><ellipse cx="561.1" cy="226.9" rx="3.5" ry="3.0" transform="rotate(-79 561.1 226.9)" fill="url(#bs1)"/><ellipse cx="564.7" cy="265.1" rx="3.3" ry="2.9" transform="rotate(-77 564.7 265.1)" fill="url(#bs1)"/><ellipse cx="568.3" cy="303.3" rx="3.1" ry="2.9" transform="rotate(-75 568.3 303.3)" fill="url(#bs0)"/><ellipse cx="571.8" cy="341.5" rx="3.0" ry="2.9" transform="rotate(-71 571.8 341.5)" fill="url(#bs0)"/><ellipse cx="575.4" cy="379.8" rx="3.0" ry="2.9" transform="rotate(-66 575.4 379.8)" fill="url(#bs0)"/><ellipse cx="578.9" cy="418.2" rx="3.0" ry="2.9" transform="rotate(-59 578.9 418.2)" fill="url(#bs0)"/><ellipse cx="582.5" cy="456.5" rx="3.0" ry="2.9" transform="rotate(-49 582.5 456.5)" fill="url(#bs0)"/><ellipse cx="586.0" cy="494.8" rx="3.0" ry="2.9" transform="rotate(-33 586.0 494.8)" fill="url(#bs0)"/><ellipse cx="589.6" cy="533.1" rx="3.0" ry="2.9" transform="rotate(-11 589.6 533.1)" fill="url(#bs0)"/><ellipse cx="593.1" cy="571.4" rx="3.0" ry="2.9" transform="rotate(13 593.1 571.4)" fill="url(#bs0)"/><ellipse cx="596.7" cy="609.7" rx="3.0" ry="2.9" transform="rotate(32 596.7 609.7)" fill="url(#bs0)"/><ellipse cx="600.2" cy="648.0" rx="3.0" ry="2.9" transform="rotate(44 600.2 648.0)" fill="url(#bs0)"/><ellipse cx="603.8" cy="686.3" rx="3.0" ry="2.9" transform="rotate(53 603.8 686.3)" fill="url(#bs0)"/><ellipse cx="607.3" cy="724.6" rx="3.0" ry="2.9" transform="rotate(58 607.3 724.6)" fill="url(#bs0)"/><ellipse cx="585.9" cy="108.5" rx="4.0" ry="3.1" transform="rotate(-79 585.9 108.5)" fill="url(#bs2)"/><ellipse cx="589.4" cy="146.7" rx="3.9" ry="3.0" transform="rotate(-77 589.4 146.7)" fill="url(#bs2)"/><ellipse cx="593.0" cy="184.9" rx="3.7" ry="3.0" transform="rotate(-76 593.0 184.9)" fill="url(#bs2)"/><ellipse cx="596.6" cy="223.1" rx="3.5" ry="3.0" transform="rotate(-74 596.6 223.1)" fill="url(#bs1)"/><ellipse cx="600.1" cy="261.3" rx="3.4" ry="3.0" transform="rotate(-71 600.1 261.3)" fill="url(#bs1)"/><ellipse cx="603.7" cy="299.5" rx="3.2" ry="2.9" transform="rotate(-68 603.7 299.5)" fill="url(#bs0)"/><ellipse cx="607.3" cy="337.7" rx="3.0" ry="2.9" transform="rotate(-63 607.3 337.7)" fill="url(#bs0)"/><ellipse cx="610.9" cy="376.0" rx="3.0" ry="2.9" transform="rotate(-57 610.9 376.0)" fill="url(#bs0)"/><ellipse cx="614.4" cy="414.3" rx="3.0" ry="2.9" transform="rotate(-50 614.4 414.3)" fill="url(#bs0)"/><ellipse cx="618.0" cy="452.6" rx="3.0" ry="2.9" transform="rotate(-40 618.0 452.6)" fill="url(#bs0)"/><ellipse cx="621.5" cy="490.9" rx="3.0" ry="2.9" transform="rotate(-26 621.5 490.9)" fill="url(#bs0)"/><ellipse cx="625.1" cy="529.2" rx="3.0" ry="2.9" transform="rotate(-9 625.1 529.2)" fill="url(#bs0)"/><ellipse cx="628.6" cy="567.5" rx="3.0" ry="2.9" transform="rotate(8 628.6 567.5)" fill="url(#bs0)"/><ellipse cx="632.2" cy="605.8" rx="3.0" ry="2.9" transform="rotate(23 632.2 605.8)" fill="url(#bs0)"/><ellipse cx="635.7" cy="644.1" rx="3.0" ry="2.9" transform="rotate(35 635.7 644.1)" fill="url(#bs0)"/><ellipse cx="639.3" cy="682.4" rx="3.0" ry="2.9" transform="rotate(44 639.3 682.4)" fill="url(#bs0)"/><ellipse cx="642.8" cy="720.7" rx="3.0" ry="2.9" transform="rotate(50 642.8 720.7)" fill="url(#bs0)"/><ellipse cx="621.3" cy="104.7" rx="4.1" ry="3.1" transform="rotate(-75 621.3 104.7)" fill="url(#bs2)"/><ellipse cx="624.9" cy="142.9" rx="3.9" ry="3.1" transform="rotate(-73 624.9 142.9)" fill="url(#bs2)"/><ellipse cx="628.4" cy="181.1" rx="3.8" ry="3.0" transform="rotate(-71 628.4 181.1)" fill="url(#bs2)"/><ellipse cx="632.0" cy="219.3" rx="3.6" ry="3.0" transform="rotate(-68 632.0 219.3)" fill="url(#bs1)"/><ellipse cx="635.6" cy="257.5" rx="3.4" ry="3.0" transform="rotate(-65 635.6 257.5)" fill="url(#bs1)"/><ellipse cx="639.2" cy="295.7" rx="3.3" ry="2.9" transform="rotate(-61 639.2 295.7)" fill="url(#bs1)"/><ellipse cx="642.7" cy="333.9" rx="3.1" ry="2.9" transform="rotate(-57 642.7 333.9)" fill="url(#bs0)"/><ellipse cx="646.3" cy="372.1" rx="3.0" ry="2.9" transform="rotate(-51 646.3 372.1)" fill="url(#bs0)"/><ellipse cx="649.9" cy="410.4" rx="3.0" ry="2.9" transform="rotate(-43 649.9 410.4)" fill="url(#bs0)"/><ellipse cx="653.4" cy="448.7" rx="3.0" ry="2.9" transform="rotate(-33 653.4 448.7)" fill="url(#bs0)"/><ellipse cx="657.0" cy="487.1" rx="3.0" ry="2.9" transform="rotate(-22 657.0 487.1)" fill="url(#bs0)"/><ellipse cx="660.5" cy="525.4" rx="3.0" ry="2.9" transform="rotate(-9 660.5 525.4)" fill="url(#bs0)"/><ellipse cx="664.1" cy="563.7" rx="3.0" ry="2.9" transform="rotate(5 664.1 563.7)" fill="url(#bs0)"/><ellipse cx="667.6" cy="602.0" rx="3.0" ry="2.9" transform="rotate(17 667.6 602.0)" fill="url(#bs0)"/><ellipse cx="671.2" cy="640.3" rx="3.0" ry="2.9" transform="rotate(28 671.2 640.3)" fill="url(#bs0)"/><ellipse cx="674.7" cy="678.6" rx="3.0" ry="2.9" transform="rotate(36 674.7 678.6)" fill="url(#bs0)"/><ellipse cx="678.3" cy="716.8" rx="3.1" ry="2.9" transform="rotate(43 678.3 716.8)" fill="url(#bs0)"/><ellipse cx="656.7" cy="100.9" rx="4.2" ry="3.1" transform="rotate(-71 656.7 100.9)" fill="url(#bs3)"/><ellipse cx="660.3" cy="139.1" rx="4.0" ry="3.1" transform="rotate(-69 660.3 139.1)" fill="url(#bs2)"/><ellipse cx="663.9" cy="177.3" rx="3.8" ry="3.0" transform="rotate(-66 663.9 177.3)" fill="url(#bs2)"/><ellipse cx="667.4" cy="215.5" rx="3.7" ry="3.0" transform="rotate(-63 667.4 215.5)" fill="url(#bs2)"/><ellipse cx="671.0" cy="253.7" rx="3.5" ry="3.0" transform="rotate(-60 671.0 253.7)" fill="url(#bs1)"/><ellipse cx="674.6" cy="291.9" rx="3.4" ry="3.0" transform="rotate(-56 674.6 291.9)" fill="url(#bs1)"/><ellipse cx="678.2" cy="330.1" rx="3.3" ry="2.9" transform="rotate(-51 678.2 330.1)" fill="url(#bs1)"/><ellipse cx="681.8" cy="368.3" rx="3.1" ry="2.9" transform="rotate(-45 681.8 368.3)" fill="url(#bs0)"/></g>
<g fill="none" stroke="#fff" stroke-width="1" shape-rendering="crispEdges"><circle cx="32.5" cy="709.7" r="7.4"/><circle cx="32.5" cy="322.8" r="7.4"/><circle cx="36.0" cy="361.1" r="7.4"/><circle cx="39.6" cy="399.4" r="7.4"/><circle cx="43.1" cy="437.7" r="7.4"/><circle cx="46.7" cy="476.0" r="7.4"/><circle cx="50.2" cy="514.3" r="7.4"/><circle cx="53.8" cy="552.6" r="7.4"/><circle cx="57.3" cy="590.9" r="7.4"/><circle cx="60.9" cy="629.2" r="7.4"/><circle cx="64.4" cy="667.5" r="7.4"/><circle cx="68.0" cy="705.8" r="7.4"/><circle cx="46.6" cy="89.1" r="7.4"/><circle cx="50.2" cy="127.4" r="7.4"/><circle cx="53.7" cy="165.7" r="7.4"/><circle cx="57.3" cy="204.0" r="7.4"/><circle cx="60.8" cy="242.3" r="7.4"/><circle cx="64.4" cy="280.6" r="7.4"/><circle cx="67.9" cy="318.9" r="7.4"/><circle cx="71.5" cy="357.2" r="7.4"/><circle cx="75.0" cy="395.5" r="7.4"/><circle cx="78.6" cy="433.8" r="7.4"/><circle cx="82.1" cy="472.2" r="7.4"/><circle cx="85.7" cy="510.5" r="7.4"/><circle cx="89.2" cy="548.8" r="7.4"/><circle cx="92.8" cy="587.1" r="7.4"/><circle cx="96.3" cy="625.4" r="7.4"/><circle cx="99.9" cy="663.7" r="7.4"/><circle cx="103.4" cy="702.0" r="7.4"/><circle cx="82.1" cy="85.2" r="7.4"/><circle cx="85.7" cy="123.5" r="7.4"/><circle cx="89.2" cy="161.9" r="7.4"/><circle cx="92.8" cy="200.2" r="7.4"/><circle cx="96.3" cy="238.5" r="7.4"/><circle cx="99.9" cy="276.8" r="7.4"/><circle cx="103.4" cy="315.1" r="7.4"/><circle cx="107.0" cy="353.4" r="7.4"/><circle cx="110.5" cy="391.7" r="7.4"/><circle cx="114.1" cy="430.0" r="7.4"/><circle cx="117.6" cy="468.3" r="7.4"/><circle cx="121.2" cy="506.6" r="7.4"/><circle cx="124.7" cy="544.9" r="7.4"/><circle cx="128.3" cy="583.2" r="7.4"/><circle cx="131.8" cy="621.5" r="7.4"/><circle cx="135.4" cy="659.8" r="7.4"/><circle cx="138.9" cy="698.1" r="7.4"/><circle cx="142.5" cy="736.4" r="7.4"/><circle cx="117.6" cy="81.4" r="7.4"/><circle cx="121.2" cy="119.7" r="7.4"/><circle cx="124.7" cy="158.0" r="7.4"/><circle cx="128.3" cy="196.3" r="7.4"/><circle cx="131.8" cy="234.6" r="7.4"/><circle cx="135.4" cy="272.9" r="7.4"/><circle cx="138.9" cy="311.2" r="7.4"/><circle cx="142.5" cy="349.5" r="7.4"/><circle cx="146.0" cy="387.8" r="7.4"/><circle cx="149.6" cy="426.1" r="7.4"/><circle cx="153.1" cy="464.4" r="7.4"/><circle cx="156.7" cy="502.7" r="7.4"/><circle cx="160.2" cy="541.0" r="7.4"/><circle cx="163.8" cy="579.4" r="7.4"/><circle cx="167.3" cy="617.7" r="7.4"/><circle cx="170.9" cy="656.0" r="7.4"/><circle cx="174.4" cy="694.3" r="7.4"/><circle cx="178.0" cy="732.6" r="7.4"/><circle cx="156.6" cy="115.8" r="7.4"/><circle cx="160.2" cy="154.1" r="7.4"/><circle cx="163.7" cy="192.4" r="7.4"/><circle cx="167.3" cy="230.8" r="7.4"/><circle cx="170.8" cy="269.1" r="7.4"/><circle cx="174.4" cy="307.4" r="7.4"/><circle cx="177.9" cy="345.7" r="7.4"/><circle cx="181.5" cy="384.0" r="7.4"/><circle cx="185.0" cy="422.3" r="7.4"/><circle cx="188.6" cy="460.6" r="7.4"/><circle cx="192.1" cy="498.9" r="7.4"/><circle cx="195.7" cy="537.2" r="7.4"/><circle cx="199.2" cy="575.5" r="7.4"/><circle cx="202.8" cy="613.8" r="7.4"/><circle cx="206.3" cy="652.1" r="7.4"/><circle cx="209.9" cy="690.4" r="7.4"/><circle cx="213.4" cy="728.7" r="7.4"/><circle cx="192.1" cy="112.0" r="7.4"/><circle cx="195.7" cy="150.3" r="7.4"/><circle cx="199.2" cy="188.6" r="7.4"/><circle cx="202.8" cy="226.9" r="7.4"/><circle cx="206.3" cy="265.2" r="7.4"/><circle cx="209.9" cy="303.5" r="7.4"/><circle cx="213.4" cy="341.8" r="7.4"/><circle cx="217.0" cy="380.1" r="7.4"/><circle cx="220.5" cy="418.4" r="7.4"/><circle cx="224.1" cy="456.7" r="7.4"/><circle cx="227.6" cy="495.0" r="7.4"/><circle cx="231.2" cy="533.3" r="7.4"/><circle cx="234.7" cy="571.6" r="7.4"/><circle cx="238.3" cy="609.9" r="7.4"/><circle cx="241.8" cy="648.2" r="7.4"/><circle cx="245.4" cy="686.6" r="7.4"/><circle cx="248.9" cy="724.9" r="7.4"/><circle cx="227.6" cy="108.1" r="7.4"/><circle cx="231.2" cy="146.4" r="7.4"/><circle cx="234.7" cy="184.7" r="7.4"/><circle cx="238.3" cy="223.0" r="7.4"/><circle cx="241.8" cy="261.3" r="7.4"/><circle cx="245.4" cy="299.6" r="7.4"/><circle cx="248.9" cy="338.0" r="7.4"/><circle cx="252.5" cy="376.3" r="7.4"/><circle cx="256.0" cy="414.6" r="7.4"/><circle cx="259.6" cy="452.9" r="7.4"/><circle cx="263.1" cy="491.2" r="7.4"/><circle cx="266.7" cy="529.5" r="7.4"/><circle cx="270.2" cy="567.8" r="7.4"/><circle cx="273.8" cy="606.1" r="7.4"/><circle cx="277.3" cy="644.4" r="7.4"/><circle cx="280.9" cy="682.7" r="7.4"/><circle cx="284.4" cy="721.0" r="7.4"/><circle cx="263.1" cy="104.3" r="7.4"/><circle cx="266.6" cy="142.6" r="7.4"/><circle cx="270.2" cy="180.9" r="7.4"/><circle cx="273.7" cy="219.2" r="7.4"/><circle cx="277.3" cy="257.5" r="7.4"/><circle cx="280.8" cy="295.8" r="7.4"/><circle cx="284.4" cy="334.1" r="7.4"/><circle cx="287.9" cy="372.4" r="7.4"/><circle cx="291.5" cy="410.7" r="7.4"/><circle cx="295.0" cy="449.0" r="7.4"/><circle cx="298.6" cy="487.3" r="7.4"/><circle cx="302.1" cy="525.6" r="7.4"/><circle cx="305.7" cy="563.9" r="7.4"/><circle cx="309.2" cy="602.2" r="7.4"/><circle cx="312.8" cy="640.5" r="7.4"/><circle cx="316.3" cy="678.8" r="7.4"/><circle cx="319.9" cy="717.1" r="7.4"/><circle cx="298.6" cy="100.4" r="7.4"/><circle cx="302.1" cy="138.7" r="7.4"/><circle cx="305.7" cy="177.0" r="7.4"/><circle cx="309.2" cy="215.3" r="7.4"/><circle cx="312.8" cy="253.6" r="7.4"/><circle cx="316.3" cy="291.9" r="7.4"/><circle cx="319.9" cy="330.2" r="7.4"/><circle cx="323.4" cy="368.5" r="7.4"/><circle cx="327.0" cy="406.8" r="7.4"/><circle cx="330.5" cy="445.2" r="7.4"/><circle cx="334.1" cy="483.5" r="7.4"/><circle cx="337.6" cy="521.8" r="7.4"/><circle cx="341.2" cy="560.1" r="7.4"/><circle cx="344.7" cy="598.4" r="7.4"/><circle cx="348.3" cy="636.7" r="7.4"/><circle cx="351.8" cy="675.0" r="7.4"/><circle cx="355.4" cy="713.3" r="7.4"/><circle cx="334.1" cy="96.6" r="7.4"/><circle cx="337.6" cy="134.9" r="7.4"/><circle cx="341.2" cy="173.2" r="7.4"/><circle cx="344.7" cy="211.5" r="7.4"/><circle cx="348.3" cy="249.8" r="7.4"/><circle cx="351.8" cy="288.1" r="7.4"/><circle cx="355.4" cy="326.4" r="7.4"/><circle cx="358.9" cy="364.7" r="7.4"/><circle cx="362.5" cy="403.0" r="7.4"/><circle cx="366.0" cy="441.3" r="7.4"/><circle cx="369.6" cy="479.6" r="7.4"/><circle cx="373.1" cy="517.9" r="7.4"/><circle cx="376.7" cy="556.2" r="7.4"/><circle cx="380.2" cy="594.5" r="7.4"/><circle cx="383.8" cy="632.8" r="7.4"/><circle cx="387.3" cy="671.1" r="7.4"/><circle cx="390.9" cy="709.4" r="7.4"/><circle cx="369.6" cy="92.7" r="7.4"/><circle cx="373.1" cy="131.0" r="7.4"/><circle cx="376.7" cy="169.3" r="7.4"/><circle cx="380.2" cy="207.6" r="7.4"/><circle cx="383.8" cy="245.9" r="7.4"/><circle cx="387.3" cy="284.2" r="7.4"/><circle cx="390.9" cy="322.5" r="7.4"/><circle cx="394.4" cy="360.8" r="7.4"/><circle cx="398.0" cy="399.1" r="7.4"/><circle cx="401.5" cy="437.4" r="7.4"/><circle cx="405.1" cy="475.7" r="7.4"/><circle cx="408.6" cy="514.0" r="7.4"/><circle cx="412.2" cy="552.4" r="7.4"/><circle cx="415.7" cy="590.7" r="7.4"/><circle cx="419.3" cy="629.0" r="7.4"/><circle cx="422.8" cy="667.3" r="7.4"/><circle cx="426.4" cy="705.6" r="7.4"/><circle cx="405.0" cy="88.8" r="7.4"/><circle cx="408.6" cy="127.1" r="7.4"/><circle cx="412.1" cy="165.4" r="7.4"/><circle cx="415.7" cy="203.8" r="7.4"/><circle cx="419.2" cy="242.1" r="7.4"/><circle cx="422.8" cy="280.4" r="7.4"/><circle cx="426.3" cy="318.7" r="7.4"/><circle cx="429.9" cy="357.0" r="7.4"/><circle cx="433.4" cy="395.3" r="7.4"/><circle cx="437.0" cy="433.6" r="7.4"/><circle cx="440.5" cy="471.9" r="7.4"/><circle cx="444.1" cy="510.2" r="7.4"/><circle cx="447.6" cy="548.5" r="7.4"/><circle cx="451.2" cy="586.8" r="7.4"/><circle cx="454.7" cy="625.1" r="7.4"/><circle cx="458.3" cy="663.4" r="7.4"/><circle cx="461.8" cy="701.7" r="7.4"/><circle cx="440.5" cy="85.0" r="7.4"/><circle cx="444.1" cy="123.3" r="7.4"/><circle cx="447.6" cy="161.6" r="7.4"/><circle cx="451.2" cy="199.9" r="7.4"/><circle cx="454.7" cy="238.2" r="7.4"/><circle cx="458.3" cy="276.5" r="7.4"/><circle cx="461.8" cy="314.8" r="7.4"/><circle cx="465.4" cy="353.1" r="7.4"/><circle cx="468.9" cy="391.4" r="7.4"/><circle cx="472.5" cy="429.7" r="7.4"/><circle cx="476.0" cy="468.0" r="7.4"/><circle cx="479.6" cy="506.3" r="7.4"/><circle cx="483.1" cy="544.6" r="7.4"/><circle cx="486.7" cy="582.9" r="7.4"/><circle cx="490.2" cy="621.2" r="7.4"/><circle cx="493.8" cy="659.6" r="7.4"/><circle cx="497.3" cy="697.9" r="7.4"/><circle cx="500.9" cy="736.2" r="7.4"/><circle cx="476.0" cy="81.1" r="7.4"/><circle cx="479.6" cy="119.4" r="7.4"/><circle cx="483.1" cy="157.7" r="7.4"/><circle cx="486.7" cy="196.0" r="7.4"/><circle cx="490.2" cy="234.3" r="7.4"/><circle cx="493.8" cy="272.6" r="7.4"/><circle cx="497.3" cy="311.0" r="7.4"/><circle cx="500.9" cy="349.3" r="7.4"/><circle cx="504.4" cy="387.6" r="7.4"/><circle cx="508.0" cy="425.9" r="7.4"/><circle cx="511.5" cy="464.2" r="7.4"/><circle cx="515.1" cy="502.5" r="7.4"/><circle cx="518.6" cy="540.8" r="7.4"/><circle cx="522.2" cy="579.1" r="7.4"/><circle cx="525.7" cy="617.4" r="7.4"/><circle cx="529.3" cy="655.7" r="7.4"/><circle cx="532.8" cy="694.0" r="7.4"/><circle cx="536.4" cy="732.3" r="7.4"/><circle cx="515.0" cy="115.6" r="7.4"/><circle cx="518.6" cy="153.9" r="7.4"/><circle cx="522.1" cy="192.2" r="7.4"/><circle cx="525.7" cy="230.5" r="7.4"/><circle cx="529.2" cy="268.8" r="7.4"/><circle cx="532.8" cy="307.1" r="7.4"/><circle cx="536.3" cy="345.4" r="7.4"/><circle cx="539.9" cy="383.7" r="7.4"/><circle cx="543.4" cy="422.0" r="7.4"/><circle cx="547.0" cy="460.3" r="7.4"/><circle cx="550.5" cy="498.6" r="7.4"/><circle cx="554.1" cy="536.9" r="7.4"/><circle cx="557.6" cy="575.2" r="7.4"/><circle cx="561.2" cy="613.5" r="7.4"/><circle cx="564.7" cy="651.8" r="7.4"/><circle cx="568.3" cy="690.1" r="7.4"/><circle cx="571.8" cy="728.5" r="7.4"/><circle cx="550.5" cy="111.7" r="7.4"/><circle cx="554.1" cy="150.0" r="7.4"/><circle cx="557.6" cy="188.3" r="7.4"/><circle cx="561.2" cy="226.6" r="7.4"/><circle cx="564.7" cy="264.9" r="7.4"/><circle cx="568.3" cy="303.2" r="7.4"/><circle cx="571.8" cy="341.5" r="7.4"/><circle cx="575.4" cy="379.8" r="7.4"/><circle cx="578.9" cy="418.2" r="7.4"/><circle cx="582.5" cy="456.5" r="7.4"/><circle cx="586.0" cy="494.8" r="7.4"/><circle cx="589.6" cy="533.1" r="7.4"/><circle cx="593.1" cy="571.4" r="7.4"/><circle cx="596.7" cy="609.7" r="7.4"/><circle cx="600.2" cy="648.0" r="7.4"/><circle cx="603.8" cy="686.3" r="7.4"/><circle cx="607.3" cy="724.6" r="7.4"/><circle cx="586.0" cy="107.9" r="7.4"/><circle cx="589.6" cy="146.2" r="7.4"/><circle cx="593.1" cy="184.5" r="7.4"/><circle cx="596.7" cy="222.8" r="7.4"/><circle cx="600.2" cy="261.1" r="7.4"/><circle cx="603.8" cy="299.4" r="7.4"/><circle cx="607.3" cy="337.7" r="7.4"/><circle cx="610.9" cy="376.0" r="7.4"/><circle cx="614.4" cy="414.3" r="7.4"/><circle cx="618.0" cy="452.6" r="7.4"/><circle cx="621.5" cy="490.9" r="7.4"/><circle cx="625.1" cy="529.2" r="7.4"/><circle cx="628.6" cy="567.5" r="7.4"/><circle cx="632.2" cy="605.8" r="7.4"/><circle cx="635.7" cy="644.1" r="7.4"/><circle cx="639.3" cy="682.4" r="7.4"/><circle cx="642.8" cy="720.7" r="7.4"/><circle cx="621.5" cy="104.0" r="7.4"/><circle cx="625.0" cy="142.3" r="7.4"/><circle cx="628.6" cy="180.6" r="7.4"/><circle cx="632.1" cy="218.9" r="7.4"/><circle cx="635.7" cy="257.2" r="7.4"/><circle cx="639.2" cy="295.5" r="7.4"/><circle cx="642.8" cy="333.8" r="7.4"/><circle cx="646.3" cy="372.1" r="7.4"/><circle cx="649.9" cy="410.4" r="7.4"/><circle cx="653.4" cy="448.7" r="7.4"/><circle cx="657.0" cy="487.1" r="7.4"/><circle cx="660.5" cy="525.4" r="7.4"/><circle cx="664.1" cy="563.7" r="7.4"/><circle cx="667.6" cy="602.0" r="7.4"/><circle cx="671.2" cy="640.3" r="7.4"/><circle cx="674.7" cy="678.6" r="7.4"/><circle cx="678.3" cy="716.9" r="7.4"/><circle cx="657.0" cy="100.1" r="7.4"/><circle cx="660.5" cy="138.4" r="7.4"/><circle cx="664.1" cy="176.8" r="7.4"/><circle cx="667.6" cy="215.1" r="7.4"/><circle cx="671.2" cy="253.4" r="7.4"/><circle cx="674.7" cy="291.7" r="7.4"/><circle cx="678.3" cy="330.0" r="7.4"/><circle cx="681.8" cy="368.3" r="7.4"/></g>
<rect x="187" y="624" width="2" height="1" fill="#fff"/><rect x="188" y="625" width="1" height="1" fill="#2a70ff"/>
<rect x="476" y="202" width="1" height="1" fill="#fff"/>
<path d="M642.6 549.8 L644.2 547.6" stroke="#fff" stroke-width="1.1"/><path d="M644.2 547.6 L645.6 546" stroke="#2a90ff" stroke-width="1.1"/>
</g></svg>
<div class="a" style="left:687px;top:83px;width:15px;height:652px;background:#a3a3a3;border-style:solid;border-width:2px;border-color:#666666 #e8e8e8 #e8e8e8 #666666;"></div>
<svg class="a" style="left:689px;top:85px" width="11" height="11"><polygon points="5.5,1 10,10 1,10" fill="#c0c0c0"/><path d="M1 10 L5.5 1" stroke="#e8e8e8" stroke-width="1.2"/><path d="M1 10.4 H10 L5.5 1" stroke="#666" stroke-width="1.2" fill="none"/></svg>
<div class="a" style="left:689px;top:97px;width:11px;height:395px;background:#c0c0c0;border-style:solid;border-width:2px;border-color:#e8e8e8 #666666 #666666 #e8e8e8;"></div>
<svg class="a" style="left:689px;top:722px" width="11" height="11"><polygon points="1,1 10,1 5.5,10" fill="#c0c0c0"/><path d="M1 0.6 H10 M1 1 L5.5 10" stroke="#e8e8e8" stroke-width="1.2" fill="none"/><path d="M10 1 L5.5 10" stroke="#666" stroke-width="1.2"/></svg>
<div class="a" style="left:27px;top:743px;width:652px;height:15px;background:#a3a3a3;border-style:solid;border-width:2px;border-color:#666666 #e8e8e8 #e8e8e8 #666666;"></div>
<svg class="a" style="left:29px;top:745px" width="11" height="11"><polygon points="1,5.5 10,1 10,10" fill="#c0c0c0"/><path d="M1 5.5 L10 1" stroke="#e8e8e8" stroke-width="1.2"/><path d="M1 5.5 L10 10 V1" stroke="#666" stroke-width="1.2" fill="none"/></svg>
<div class="a" style="left:41px;top:745px;width:395px;height:11px;background:#c0c0c0;border-style:solid;border-width:2px;border-color:#e8e8e8 #666666 #666666 #e8e8e8;"></div>
<svg class="a" style="left:666px;top:745px" width="11" height="11"><polygon points="10,5.5 1,1 1,10" fill="#c0c0c0"/><path d="M1 10 V1 L10 5.5" stroke="#e8e8e8" stroke-width="1.2" fill="none"/><path d="M1 10 L10 5.5" stroke="#666" stroke-width="1.2"/></svg>
<div class="a" style="left:719px;top:87px;width:165px;height:113px;border-style:solid;border-width:1px;border-color:#666666 #e8e8e8 #e8e8e8 #666666;"></div>
<div class="a" style="left:719px;top:203px;width:165px;height:385px;border-style:solid;border-width:1px;border-color:#666666 #e8e8e8 #e8e8e8 #666666;"></div>
<div class="a" style="left:893px;top:87px;width:172px;height:105px;border-style:solid;border-width:1px;border-color:#666666 #e8e8e8 #e8e8e8 #666666;"></div>
<div class="a" style="left:893px;top:195px;width:172px;height:145px;border-style:solid;border-width:1px;border-color:#666666 #e8e8e8 #e8e8e8 #666666;"></div>
<div class="a m" style="left:727px;top:104px;">Min:</div>
<div class="a" style="left:765px;top:96px;width:92px;height:27px;background:#c0c0c0;border-style:solid;border-width:2px;border-color:#666666 #e8e8e8 #e8e8e8 #666666;"></div>
<div class="a m" style="left:771px;top:104px;">2903.00</div>
<svg class="a" style="left:770px;top:103px" width="3" height="15" fill="#000"><rect x="0" y="0" width="1" height="1"/><rect x="2" y="0" width="1" height="1"/><rect x="1" y="1" width="1" height="1"/><rect x="1" y="3" width="1" height="1"/><rect x="1" y="5" width="1" height="1"/><rect x="1" y="7" width="1" height="1"/><rect x="1" y="9" width="1" height="1"/><rect x="1" y="11" width="1" height="1"/><rect x="0" y="13" width="1" height="1"/><rect x="2" y="13" width="1" height="1"/><rect x="1" y="12" width="1" height="1"/></svg>
<div class="a m" style="left:727px;top:144px;">Max:</div>
<div class="a" style="left:765px;top:136px;width:92px;height:27px;background:#c0c0c0;border-style:solid;border-width:2px;border-color:#666666 #e8e8e8 #e8e8e8 #666666;"></div>
<div class="a m" style="left:771px;top:144px;">3045.00</div>
<svg class="a" style="left:770px;top:143px" width="3" height="15" fill="#000"><rect x="0" y="0" width="1" height="1"/><rect x="2" y="0" width="1" height="1"/><rect x="1" y="1" width="1" height="1"/><rect x="1" y="3" width="1" height="1"/><rect x="1" y="5" width="1" height="1"/><rect x="1" y="7" width="1" height="1"/><rect x="1" y="9" width="1" height="1"/><rect x="1" y="11" width="1" height="1"/><rect x="0" y="13" width="1" height="1"/><rect x="2" y="13" width="1" height="1"/><rect x="1" y="12" width="1" height="1"/></svg>
<div class="a" style="left:725px;top:174px;width:135px;height:20px;background:#c0c0c0;border-style:solid;border-width:2px;border-color:#e8e8e8 #666666 #666666 #e8e8e8;"></div>
<div class="a m" style="left:751px;top:178px;">Reset Min/Max</div>
<div class="a m" style="left:749px;top:210px;">Lenslet Locations</div>
<div class="a m" style="left:726px;top:240px;">Lenslets NX:</div>
<div class="a" style="left:813px;top:232px;width:44px;height:27px;background:#c0c0c0;border-style:solid;border-width:2px;border-color:#666666 #e8e8e8 #e8e8e8 #666666;"></div>
<div class="a m" style="left:819px;top:240px;">32</div>
<svg class="a" style="left:818px;top:239px" width="3" height="15" fill="#000"><rect x="0" y="0" width="1" height="1"/><rect x="2" y="0" width="1" height="1"/><rect x="1" y="1" width="1" height="1"/><rect x="1" y="3" width="1" height="1"/><rect x="1" y="5" width="1" height="1"/><rect x="1" y="7" width="1" height="1"/><rect x="1" y="9" width="1" height="1"/><rect x="1" y="11" width="1" height="1"/><rect x="0" y="13" width="1" height="1"/><rect x="2" y="13" width="1" height="1"/><rect x="1" y="12" width="1" height="1"/></svg>
<div class="a m" style="left:726px;top:280px;">Lenslets NY:</div>
<div class="a" style="left:813px;top:272px;width:44px;height:27px;background:#c0c0c0;border-style:solid;border-width:2px;border-color:#666666 #e8e8e8 #e8e8e8 #666666;"></div>
<div class="a m" style="left:819px;top:280px;">32</div>
<svg class="a" style="left:818px;top:279px" width="3" height="15" fill="#000"><rect x="0" y="0" width="1" height="1"/><rect x="2" y="0" width="1" height="1"/><rect x="1" y="1" width="1" height="1"/><rect x="1" y="3" width="1" height="1"/><rect x="1" y="5" width="1" height="1"/><rect x="1" y="7" width="1" height="1"/><rect x="1" y="9" width="1" height="1"/><rect x="1" y="11" width="1" height="1"/><rect x="0" y="13" width="1" height="1"/><rect x="2" y="13" width="1" height="1"/><rect x="1" y="12" width="1" height="1"/></svg>
<div class="a m" style="left:726px;top:320px;">Deltax:</div>
<div class="a" style="left:783px;top:312px;width:92px;height:27px;background:#c0c0c0;border-style:solid;border-width:2px;border-color:#666666 #e8e8e8 #e8e8e8 #666666;"></div>
<div class="a m" style="left:789px;top:320px;">35.6564</div>
<svg class="a" style="left:788px;top:319px" width="3" height="15" fill="#000"><rect x="0" y="0" width="1" height="1"/><rect x="2" y="0" width="1" height="1"/><rect x="1" y="1" width="1" height="1"/><rect x="1" y="3" width="1" height="1"/><rect x="1" y="5" width="1" height="1"/><rect x="1" y="7" width="1" height="1"/><rect x="1" y="9" width="1" height="1"/><rect x="1" y="11" width="1" height="1"/><rect x="0" y="13" width="1" height="1"/><rect x="2" y="13" width="1" height="1"/><rect x="1" y="12" width="1" height="1"/></svg>
<div class="a m" style="left:726px;top:360px;">Deltay:</div>
<div class="a" style="left:783px;top:352px;width:92px;height:27px;background:#c0c0c0;border-style:solid;border-width:2px;border-color:#666666 #e8e8e8 #e8e8e8 #666666;"></div>
<div class="a m" style="left:789px;top:360px;">38.5661</div>
<svg class="a" style="left:788px;top:359px" width="3" height="15" fill="#000"><rect x="0" y="0" width="1" height="1"/><rect x="2" y="0" width="1" height="1"/><rect x="1" y="1" width="1" height="1"/><rect x="1" y="3" width="1" height="1"/><rect x="1" y="5" width="1" height="1"/><rect x="1" y="7" width="1" height="1"/><rect x="1" y="9" width="1" height="1"/><rect x="1" y="11" width="1" height="1"/><rect x="0" y="13" width="1" height="1"/><rect x="2" y="13" width="1" height="1"/><rect x="1" y="12" width="1" height="1"/></svg>
<div class="a m" style="left:726px;top:400px;">X0:</div>
<div class="a" style="left:759px;top:392px;width:92px;height:27px;background:#c0c0c0;border-style:solid;border-width:2px;border-color:#666666 #e8e8e8 #e8e8e8 #666666;"></div>
<div class="a m" style="left:765px;top:400px;">44.7888</div>
<svg class="a" style="left:764px;top:399px" width="3" height="15" fill="#000"><rect x="0" y="0" width="1" height="1"/><rect x="2" y="0" width="1" height="1"/><rect x="1" y="1" width="1" height="1"/><rect x="1" y="3" width="1" height="1"/><rect x="1" y="5" width="1" height="1"/><rect x="1" y="7" width="1" height="1"/><rect x="1" y="9" width="1" height="1"/><rect x="1" y="11" width="1" height="1"/><rect x="0" y="13" width="1" height="1"/><rect x="2" y="13" width="1" height="1"/><rect x="1" y="12" width="1" height="1"/></svg>
<div class="a m" style="left:726px;top:440px;">Y0:</div>
<div class="a" style="left:759px;top:432px;width:92px;height:27px;background:#c0c0c0;border-style:solid;border-width:2px;border-color:#666666 #e8e8e8 #e8e8e8 #666666;"></div>
<div class="a m" style="left:765px;top:440px;">-18.7807</div>
<svg class="a" style="left:764px;top:439px" width="3" height="15" fill="#000"><rect x="0" y="0" width="1" height="1"/><rect x="2" y="0" width="1" height="1"/><rect x="1" y="1" width="1" height="1"/><rect x="1" y="3" width="1" height="1"/><rect x="1" y="5" width="1" height="1"/><rect x="1" y="7" width="1" height="1"/><rect x="1" y="9" width="1" height="1"/><rect x="1" y="11" width="1" height="1"/><rect x="0" y="13" width="1" height="1"/><rect x="2" y="13" width="1" height="1"/><rect x="1" y="12" width="1" height="1"/></svg>
<div class="a m" style="left:726px;top:480px;">ANGLE:</div>
<div class="a" style="left:777px;top:472px;width:92px;height:27px;background:#c0c0c0;border-style:solid;border-width:2px;border-color:#666666 #e8e8e8 #e8e8e8 #666666;"></div>
<div class="a m" style="left:783px;top:480px;">5.61093</div>
<svg class="a" style="left:782px;top:479px" width="3" height="15" fill="#000"><rect x="0" y="0" width="1" height="1"/><rect x="2" y="0" width="1" height="1"/><rect x="1" y="1" width="1" height="1"/><rect x="1" y="3" width="1" height="1"/><rect x="1" y="5" width="1" height="1"/><rect x="1" y="7" width="1" height="1"/><rect x="1" y="9" width="1" height="1"/><rect x="1" y="11" width="1" height="1"/><rect x="0" y="13" width="1" height="1"/><rect x="2" y="13" width="1" height="1"/><rect x="1" y="12" width="1" height="1"/></svg>
<div class="a m" style="left:726px;top:520px;">Min ADU:</div>
<div class="a" style="left:783px;top:512px;width:92px;height:27px;background:#c0c0c0;border-style:solid;border-width:2px;border-color:#666666 #e8e8e8 #e8e8e8 #666666;"></div>
<div class="a m" style="left:789px;top:520px;">1000.00</div>
<svg class="a" style="left:788px;top:519px" width="3" height="15" fill="#000"><rect x="0" y="0" width="1" height="1"/><rect x="2" y="0" width="1" height="1"/><rect x="1" y="1" width="1" height="1"/><rect x="1" y="3" width="1" height="1"/><rect x="1" y="5" width="1" height="1"/><rect x="1" y="7" width="1" height="1"/><rect x="1" y="9" width="1" height="1"/><rect x="1" y="11" width="1" height="1"/><rect x="0" y="13" width="1" height="1"/><rect x="2" y="13" width="1" height="1"/><rect x="1" y="12" width="1" height="1"/></svg>
<div class="a m" style="left:726px;top:560px;">Find Range:</div>
<div class="a" style="left:801px;top:552px;width:44px;height:27px;background:#c0c0c0;border-style:solid;border-width:2px;border-color:#666666 #e8e8e8 #e8e8e8 #666666;"></div>
<div class="a m" style="left:807px;top:560px;">10</div>
<svg class="a" style="left:806px;top:559px" width="3" height="15" fill="#000"><rect x="0" y="0" width="1" height="1"/><rect x="2" y="0" width="1" height="1"/><rect x="1" y="1" width="1" height="1"/><rect x="1" y="3" width="1" height="1"/><rect x="1" y="5" width="1" height="1"/><rect x="1" y="7" width="1" height="1"/><rect x="1" y="9" width="1" height="1"/><rect x="1" y="11" width="1" height="1"/><rect x="0" y="13" width="1" height="1"/><rect x="2" y="13" width="1" height="1"/><rect x="1" y="12" width="1" height="1"/></svg>
<div class="a m" style="left:926px;top:94px;">Slit Location</div>
<div class="a m" style="left:900px;top:124px;">Slit Bottom:</div>
<div class="a" style="left:987px;top:116px;width:44px;height:27px;background:#c0c0c0;border-style:solid;border-width:2px;border-color:#666666 #e8e8e8 #e8e8e8 #666666;"></div>
<div class="a m" style="left:993px;top:124px;">0</div>
<svg class="a" style="left:992px;top:123px" width="3" height="15" fill="#000"><rect x="0" y="0" width="1" height="1"/><rect x="2" y="0" width="1" height="1"/><rect x="1" y="1" width="1" height="1"/><rect x="1" y="3" width="1" height="1"/><rect x="1" y="5" width="1" height="1"/><rect x="1" y="7" width="1" height="1"/><rect x="1" y="9" width="1" height="1"/><rect x="1" y="11" width="1" height="1"/><rect x="0" y="13" width="1" height="1"/><rect x="2" y="13" width="1" height="1"/><rect x="1" y="12" width="1" height="1"/></svg>
<div class="a m" style="left:900px;top:164px;">Slit Top:</div>
<div class="a" style="left:969px;top:156px;width:44px;height:27px;background:#c0c0c0;border-style:solid;border-width:2px;border-color:#666666 #e8e8e8 #e8e8e8 #666666;"></div>
<div class="a m" style="left:975px;top:164px;">0</div>
<svg class="a" style="left:974px;top:163px" width="3" height="15" fill="#000"><rect x="0" y="0" width="1" height="1"/><rect x="2" y="0" width="1" height="1"/><rect x="1" y="1" width="1" height="1"/><rect x="1" y="3" width="1" height="1"/><rect x="1" y="5" width="1" height="1"/><rect x="1" y="7" width="1" height="1"/><rect x="1" y="9" width="1" height="1"/><rect x="1" y="11" width="1" height="1"/><rect x="0" y="13" width="1" height="1"/><rect x="2" y="13" width="1" height="1"/><rect x="1" y="12" width="1" height="1"/></svg>
<div class="a m" style="left:911px;top:202px;">Spectral Extraction</div>
<div class="a m" style="left:901px;top:232px;">Spectra Len1:</div>
<div class="a" style="left:993px;top:224px;width:44px;height:27px;background:#c0c0c0;border-style:solid;border-width:2px;border-color:#666666 #e8e8e8 #e8e8e8 #666666;"></div>
<div class="a m" style="left:999px;top:232px;">50</div>
<svg class="a" style="left:998px;top:231px" width="3" height="15" fill="#000"><rect x="0" y="0" width="1" height="1"/><rect x="2" y="0" width="1" height="1"/><rect x="1" y="1" width="1" height="1"/><rect x="1" y="3" width="1" height="1"/><rect x="1" y="5" width="1" height="1"/><rect x="1" y="7" width="1" height="1"/><rect x="1" y="9" width="1" height="1"/><rect x="1" y="11" width="1" height="1"/><rect x="0" y="13" width="1" height="1"/><rect x="2" y="13" width="1" height="1"/><rect x="1" y="12" width="1" height="1"/></svg>
<div class="a m" style="left:901px;top:272px;">Spectra Len2:</div>
<div class="a" style="left:993px;top:264px;width:44px;height:27px;background:#c0c0c0;border-style:solid;border-width:2px;border-color:#666666 #e8e8e8 #e8e8e8 #666666;"></div>
<div class="a m" style="left:999px;top:272px;">260</div>
<svg class="a" style="left:998px;top:271px" width="3" height="15" fill="#000"><rect x="0" y="0" width="1" height="1"/><rect x="2" y="0" width="1" height="1"/><rect x="1" y="1" width="1" height="1"/><rect x="1" y="3" width="1" height="1"/><rect x="1" y="5" width="1" height="1"/><rect x="1" y="7" width="1" height="1"/><rect x="1" y="9" width="1" height="1"/><rect x="1" y="11" width="1" height="1"/><rect x="0" y="13" width="1" height="1"/><rect x="2" y="13" width="1" height="1"/><rect x="1" y="12" width="1" height="1"/></svg>
<div class="a m" style="left:901px;top:312px;">Slit Height:</div>
<div class="a" style="left:987px;top:304px;width:44px;height:27px;background:#c0c0c0;border-style:solid;border-width:2px;border-color:#666666 #e8e8e8 #e8e8e8 #666666;"></div>
<div class="a m" style="left:993px;top:312px;">3.000</div>
<svg class="a" style="left:992px;top:311px" width="3" height="15" fill="#000"><rect x="0" y="0" width="1" height="1"/><rect x="2" y="0" width="1" height="1"/><rect x="1" y="1" width="1" height="1"/><rect x="1" y="3" width="1" height="1"/><rect x="1" y="5" width="1" height="1"/><rect x="1" y="7" width="1" height="1"/><rect x="1" y="9" width="1" height="1"/><rect x="1" y="11" width="1" height="1"/><rect x="0" y="13" width="1" height="1"/><rect x="2" y="13" width="1" height="1"/><rect x="1" y="12" width="1" height="1"/></svg>
<div class="a m" style="left:957px;top:346px;">x = 331</div>
<div class="a m" style="left:954px;top:366px;">y = 1022</div>
<div class="a m" style="left:939px;top:386px;">val = 2906.00</div>
<svg class="a" style="left:713px;top:597px" width="200" height="200" shape-rendering="crispEdges">
<rect width="200" height="200" fill="#02020a"/>
<rect x="0" y="0" width="5" height="5" fill="#04040c"/>
<rect x="5" y="0" width="5" height="5" fill="#030309"/>
<rect x="10" y="0" width="5" height="5" fill="#030309"/>
<rect x="15" y="0" width="5" height="5" fill="#030309"/>
<rect x="25" y="0" width="5" height="5" fill="#030309"/>
<rect x="30" y="0" width="5" height="5" fill="#030309"/>
<rect x="35" y="0" width="5" height="5" fill="#010102"/>
<rect x="40" y="0" width="5" height="5" fill="#030309"/>
<rect x="60" y="0" width="5" height="5" fill="#010102"/>
<rect x="65" y="0" width="5" height="5" fill="#04040c"/>
<rect x="70" y="0" width="5" height="5" fill="#04040c"/>
<rect x="75" y="0" width="5" height="5" fill="#04040c"/>
<rect x="100" y="0" width="5" height="5" fill="#04040c"/>
<rect x="105" y="0" width="5" height="5" fill="#030309"/>
<rect x="145" y="0" width="5" height="5" fill="#04040c"/>
<rect x="160" y="0" width="5" height="5" fill="#050511"/>
<rect x="180" y="0" width="5" height="5" fill="#030309"/>
<rect x="185" y="0" width="5" height="5" fill="#010102"/>
<rect x="190" y="0" width="5" height="5" fill="#050511"/>
<rect x="195" y="0" width="5" height="5" fill="#010102"/>
<rect x="0" y="5" width="5" height="5" fill="#030309"/>
<rect x="20" y="5" width="5" height="5" fill="#050511"/>
<rect x="60" y="5" width="5" height="5" fill="#050511"/>
<rect x="80" y="5" width="5" height="5" fill="#010102"/>
<rect x="90" y="5" width="5" height="5" fill="#010102"/>
<rect x="95" y="5" width="5" height="5" fill="#030309"/>
<rect x="105" y="5" width="5" height="5" fill="#050511"/>
<rect x="110" y="5" width="5" height="5" fill="#04040c"/>
<rect x="115" y="5" width="5" height="5" fill="#010102"/>
<rect x="120" y="5" width="5" height="5" fill="#010102"/>
<rect x="125" y="5" width="5" height="5" fill="#050511"/>
<rect x="145" y="5" width="5" height="5" fill="#010102"/>
<rect x="160" y="5" width="5" height="5" fill="#04040c"/>
<rect x="165" y="5" width="5" height="5" fill="#04040c"/>
<rect x="170" y="5" width="5" height="5" fill="#04040c"/>
<rect x="175" y="5" width="5" height="5" fill="#04040c"/>
<rect x="180" y="5" width="5" height="5" fill="#030309"/>
<rect x="185" y="5" width="5" height="5" fill="#050511"/>
<rect x="195" y="5" width="5" height="5" fill="#04040c"/>
<rect x="20" y="10" width="5" height="5" fill="#010102"/>
<rect x="25" y="10" width="5" height="5" fill="#010102"/>
<rect x="30" y="10" width="5" height="5" fill="#010102"/>
<rect x="35" y="10" width="5" height="5" fill="#030309"/>
<rect x="45" y="10" width="5" height="5" fill="#030309"/>
<rect x="50" y="10" width="5" height="5" fill="#030309"/>
<rect x="55" y="10" width="5" height="5" fill="#04040c"/>
<rect x="75" y="10" width="5" height="5" fill="#04040c"/>
<rect x="85" y="10" width="5" height="5" fill="#050511"/>
<rect x="105" y="10" width="5" height="5" fill="#010102"/>
<rect x="125" y="10" width="5" height="5" fill="#030309"/>
<rect x="155" y="10" width="5" height="5" fill="#050511"/>
<rect x="160" y="10" width="5" height="5" fill="#030309"/>
<rect x="170" y="10" width="5" height="5" fill="#030309"/>
<rect x="180" y="10" width="5" height="5" fill="#050511"/>
<rect x="190" y="10" width="5" height="5" fill="#04040c"/>
<rect x="5" y="15" width="5" height="5" fill="#04040c"/>
<rect x="25" y="15" width="5" height="5" fill="#04040c"/>
<rect x="40" y="15" width="5" height="5" fill="#010102"/>
<rect x="45" y="15" width="5" height="5" fill="#030309"/>
<rect x="65" y="15" width="5" height="5" fill="#050511"/>
<rect x="70" y="15" width="5" height="5" fill="#050511"/>
<rect x="80" y="15" width="5" height="5" fill="#04040c"/>
<rect x="85" y="15" width="5" height="5" fill="#010102"/>
<rect x="90" y="15" width="5" height="5" fill="#04040c"/>
<rect x="110" y="15" width="5" height="5" fill="#050511"/>
<rect x="120" y="15" width="5" height="5" fill="#030309"/>
<rect x="145" y="15" width="5" height="5" fill="#050511"/>
<rect x="150" y="15" width="5" height="5" fill="#010102"/>
<rect x="165" y="15" width="5" height="5" fill="#04040c"/>
<rect x="170" y="15" width="5" height="5" fill="#04040c"/>
<rect x="175" y="15" width="5" height="5" fill="#010102"/>
<rect x="185" y="15" width="5" height="5" fill="#010102"/>
<rect x="195" y="15" width="5" height="5" fill="#04040c"/>
<rect x="0" y="20" width="5" height="5" fill="#030309"/>
<rect x="15" y="20" width="5" height="5" fill="#04040c"/>
<rect x="25" y="20" width="5" height="5" fill="#050511"/>
<rect x="30" y="20" width="5" height="5" fill="#04040c"/>
<rect x="40" y="20" width="5" height="5" fill="#010102"/>
<rect x="50" y="20" width="5" height="5" fill="#050511"/>
<rect x="85" y="20" width="5" height="5" fill="#04040c"/>
<rect x="95" y="20" width="5" height="5" fill="#010102"/>
<rect x="115" y="20" width="5" height="5" fill="#04040c"/>
<rect x="135" y="20" width="5" height="5" fill="#010102"/>
<rect x="145" y="20" width="5" height="5" fill="#030309"/>
<rect x="150" y="20" width="5" height="5" fill="#050511"/>
<rect x="155" y="20" width="5" height="5" fill="#030309"/>
<rect x="180" y="20" width="5" height="5" fill="#04040c"/>
<rect x="25" y="25" width="5" height="5" fill="#04040c"/>
<rect x="35" y="25" width="5" height="5" fill="#030309"/>
<rect x="40" y="25" width="5" height="5" fill="#050511"/>
<rect x="45" y="25" width="5" height="5" fill="#04040c"/>
<rect x="50" y="25" width="5" height="5" fill="#04040c"/>
<rect x="70" y="25" width="5" height="5" fill="#050511"/>
<rect x="75" y="25" width="5" height="5" fill="#04040c"/>
<rect x="85" y="25" width="5" height="5" fill="#030309"/>
<rect x="90" y="25" width="5" height="5" fill="#010102"/>
<rect x="95" y="25" width="5" height="5" fill="#04040c"/>
<rect x="100" y="25" width="5" height="5" fill="#010102"/>
<rect x="110" y="25" width="5" height="5" fill="#010102"/>
<rect x="115" y="25" width="5" height="5" fill="#050511"/>
<rect x="120" y="25" width="5" height="5" fill="#050511"/>
<rect x="125" y="25" width="5" height="5" fill="#010102"/>
<rect x="130" y="25" width="5" height="5" fill="#030309"/>
<rect x="135" y="25" width="5" height="5" fill="#050511"/>
<rect x="145" y="25" width="5" height="5" fill="#04040c"/>
<rect x="155" y="25" width="5" height="5" fill="#050511"/>
<rect x="160" y="25" width="5" height="5" fill="#04040c"/>
<rect x="165" y="25" width="5" height="5" fill="#04040c"/>
<rect x="190" y="25" width="5" height="5" fill="#010102"/>
<rect x="0" y="30" width="5" height="5" fill="#030309"/>
<rect x="10" y="30" width="5" height="5" fill="#030309"/>
<rect x="15" y="30" width="5" height="5" fill="#030309"/>
<rect x="30" y="30" width="5" height="5" fill="#04040c"/>
<rect x="35" y="30" width="5" height="5" fill="#030309"/>
<rect x="45" y="30" width="5" height="5" fill="#010102"/>
<rect x="55" y="30" width="5" height="5" fill="#04040c"/>
<rect x="60" y="30" width="5" height="5" fill="#04040c"/>
<rect x="75" y="30" width="5" height="5" fill="#04040c"/>
<rect x="80" y="30" width="5" height="5" fill="#050511"/>
<rect x="95" y="30" width="5" height="5" fill="#010102"/>
<rect x="105" y="30" width="5" height="5" fill="#050511"/>
<rect x="120" y="30" width="5" height="5" fill="#030309"/>
<rect x="135" y="30" width="5" height="5" fill="#010102"/>
<rect x="140" y="30" width="5" height="5" fill="#010102"/>
<rect x="145" y="30" width="5" height="5" fill="#010102"/>
<rect x="170" y="30" width="5" height="5" fill="#04040c"/>
<rect x="180" y="30" width="5" height="5" fill="#04040c"/>
<rect x="185" y="30" width="5" height="5" fill="#050511"/>
<rect x="0" y="35" width="5" height="5" fill="#050511"/>
<rect x="5" y="35" width="5" height="5" fill="#030309"/>
<rect x="10" y="35" width="5" height="5" fill="#010102"/>
<rect x="25" y="35" width="5" height="5" fill="#04040c"/>
<rect x="35" y="35" width="5" height="5" fill="#04040c"/>
<rect x="40" y="35" width="5" height="5" fill="#010102"/>
<rect x="45" y="35" width="5" height="5" fill="#050511"/>
<rect x="65" y="35" width="5" height="5" fill="#050511"/>
<rect x="70" y="35" width="5" height="5" fill="#04040c"/>
<rect x="75" y="35" width="5" height="5" fill="#010102"/>
<rect x="80" y="35" width="5" height="5" fill="#050511"/>
<rect x="90" y="35" width="5" height="5" fill="#030309"/>
<rect x="95" y="35" width="5" height="5" fill="#030309"/>
<rect x="100" y="35" width="5" height="5" fill="#030309"/>
<rect x="105" y="35" width="5" height="5" fill="#050511"/>
<rect x="110" y="35" width="5" height="5" fill="#04040c"/>
<rect x="115" y="35" width="5" height="5" fill="#04040c"/>
<rect x="135" y="35" width="5" height="5" fill="#050511"/>
<rect x="150" y="35" width="5" height="5" fill="#04040c"/>
<rect x="155" y="35" width="5" height="5" fill="#010102"/>
<rect x="170" y="35" width="5" height="5" fill="#030309"/>
<rect x="0" y="40" width="5" height="5" fill="#030309"/>
<rect x="5" y="40" width="5" height="5" fill="#050511"/>
<rect x="15" y="40" width="5" height="5" fill="#010102"/>
<rect x="45" y="40" width="5" height="5" fill="#030309"/>
<rect x="70" y="40" width="5" height="5" fill="#010102"/>
<rect x="75" y="40" width="5" height="5" fill="#030309"/>
<rect x="85" y="40" width="5" height="5" fill="#04040c"/>
<rect x="90" y="40" width="5" height="5" fill="#010102"/>
<rect x="100" y="40" width="5" height="5" fill="#010102"/>
<rect x="110" y="40" width="5" height="5" fill="#030309"/>
<rect x="125" y="40" width="5" height="5" fill="#04040c"/>
<rect x="130" y="40" width="5" height="5" fill="#050511"/>
<rect x="140" y="40" width="5" height="5" fill="#010102"/>
<rect x="145" y="40" width="5" height="5" fill="#050511"/>
<rect x="155" y="40" width="5" height="5" fill="#04040c"/>
<rect x="165" y="40" width="5" height="5" fill="#050511"/>
<rect x="180" y="40" width="5" height="5" fill="#04040c"/>
<rect x="185" y="40" width="5" height="5" fill="#030309"/>
<rect x="195" y="40" width="5" height="5" fill="#010102"/>
<rect x="0" y="45" width="5" height="5" fill="#010102"/>
<rect x="10" y="45" width="5" height="5" fill="#04040c"/>
<rect x="15" y="45" width="5" height="5" fill="#030309"/>
<rect x="20" y="45" width="5" height="5" fill="#050511"/>
<rect x="30" y="45" width="5" height="5" fill="#050511"/>
<rect x="45" y="45" width="5" height="5" fill="#010102"/>
<rect x="50" y="45" width="5" height="5" fill="#04040c"/>
<rect x="55" y="45" width="5" height="5" fill="#010102"/>
<rect x="65" y="45" width="5" height="5" fill="#04040c"/>
<rect x="70" y="45" width="5" height="5" fill="#010102"/>
<rect x="75" y="45" width="5" height="5" fill="#050511"/>
<rect x="80" y="45" width="5" height="5" fill="#050511"/>
<rect x="90" y="45" width="5" height="5" fill="#04040c"/>
<rect x="105" y="45" width="5" height="5" fill="#050511"/>
<rect x="110" y="45" width="5" height="5" fill="#010102"/>
<rect x="125" y="45" width="5" height="5" fill="#010102"/>
<rect x="140" y="45" width="5" height="5" fill="#030309"/>
<rect x="150" y="45" width="5" height="5" fill="#04040c"/>
<rect x="155" y="45" width="5" height="5" fill="#050511"/>
<rect x="160" y="45" width="5" height="5" fill="#050511"/>
<rect x="165" y="45" width="5" height="5" fill="#050511"/>
<rect x="175" y="45" width="5" height="5" fill="#030309"/>
<rect x="10" y="50" width="5" height="5" fill="#010102"/>
<rect x="30" y="50" width="5" height="5" fill="#030309"/>
<rect x="45" y="50" width="5" height="5" fill="#010102"/>
<rect x="50" y="50" width="5" height="5" fill="#050511"/>
<rect x="55" y="50" width="5" height="5" fill="#050511"/>
<rect x="60" y="50" width="5" height="5" fill="#04040c"/>
<rect x="65" y="50" width="5" height="5" fill="#010102"/>
<rect x="70" y="50" width="5" height="5" fill="#04040c"/>
<rect x="75" y="50" width="5" height="5" fill="#010102"/>
<rect x="90" y="50" width="5" height="5" fill="#010102"/>
<rect x="95" y="50" width="5" height="5" fill="#04040c"/>
<rect x="100" y="50" width="5" height="5" fill="#04040c"/>
<rect x="105" y="50" width="5" height="5" fill="#030309"/>
<rect x="110" y="50" width="5" height="5" fill="#050511"/>
<rect x="115" y="50" width="5" height="5" fill="#04040c"/>
<rect x="130" y="50" width="5" height="5" fill="#010102"/>
<rect x="140" y="50" width="5" height="5" fill="#050511"/>
<rect x="145" y="50" width="5" height="5" fill="#030309"/>
<rect x="160" y="50" width="5" height="5" fill="#04040c"/>
<rect x="165" y="50" width="5" height="5" fill="#04040c"/>
<rect x="170" y="50" width="5" height="5" fill="#010102"/>
<rect x="175" y="50" width="5" height="5" fill="#050511"/>
<rect x="190" y="50" width="5" height="5" fill="#030309"/>
<rect x="195" y="50" width="5" height="5" fill="#010102"/>
<rect x="10" y="55" width="5" height="5" fill="#010102"/>
<rect x="20" y="55" width="5" height="5" fill="#030309"/>
<rect x="25" y="55" width="5" height="5" fill="#04040c"/>
<rect x="70" y="55" width="5" height="5" fill="#04040c"/>
<rect x="75" y="55" width="5" height="5" fill="#030309"/>
<rect x="85" y="55" width="5" height="5" fill="#04040c"/>
<rect x="100" y="55" width="5" height="5" fill="#030309"/>
<rect x="105" y="55" width="5" height="5" fill="#050511"/>
<rect x="120" y="55" width="5" height="5" fill="#04040c"/>
<rect x="130" y="55" width="5" height="5" fill="#050511"/>
<rect x="140" y="55" width="5" height="5" fill="#050511"/>
<rect x="160" y="55" width="5" height="5" fill="#04040c"/>
<rect x="165" y="55" width="5" height="5" fill="#010102"/>
<rect x="175" y="55" width="5" height="5" fill="#030309"/>
<rect x="180" y="55" width="5" height="5" fill="#010102"/>
<rect x="185" y="55" width="5" height="5" fill="#04040c"/>
<rect x="0" y="60" width="5" height="5" fill="#030309"/>
<rect x="15" y="60" width="5" height="5" fill="#010102"/>
<rect x="20" y="60" width="5" height="5" fill="#050511"/>
<rect x="35" y="60" width="5" height="5" fill="#04040c"/>
<rect x="40" y="60" width="5" height="5" fill="#04040c"/>
<rect x="45" y="60" width="5" height="5" fill="#04040c"/>
<rect x="50" y="60" width="5" height="5" fill="#050511"/>
<rect x="55" y="60" width="5" height="5" fill="#010102"/>
<rect x="80" y="60" width="5" height="5" fill="#04040c"/>
<rect x="90" y="60" width="5" height="5" fill="#030309"/>
<rect x="100" y="60" width="5" height="5" fill="#030309"/>
<rect x="110" y="60" width="5" height="5" fill="#010102"/>
<rect x="140" y="60" width="5" height="5" fill="#04040c"/>
<rect x="160" y="60" width="5" height="5" fill="#010102"/>
<rect x="175" y="60" width="5" height="5" fill="#030309"/>
<rect x="180" y="60" width="5" height="5" fill="#050511"/>
<rect x="185" y="60" width="5" height="5" fill="#010102"/>
<rect x="195" y="60" width="5" height="5" fill="#04040c"/>
<rect x="0" y="65" width="5" height="5" fill="#050511"/>
<rect x="10" y="65" width="5" height="5" fill="#030309"/>
<rect x="20" y="65" width="5" height="5" fill="#010102"/>
<rect x="25" y="65" width="5" height="5" fill="#050511"/>
<rect x="45" y="65" width="5" height="5" fill="#010102"/>
<rect x="50" y="65" width="5" height="5" fill="#030309"/>
<rect x="65" y="65" width="5" height="5" fill="#04040c"/>
<rect x="80" y="65" width="5" height="5" fill="#050511"/>
<rect x="85" y="65" width="5" height="5" fill="#030309"/>
<rect x="90" y="65" width="5" height="5" fill="#050511"/>
<rect x="100" y="65" width="5" height="5" fill="#030309"/>
<rect x="105" y="65" width="5" height="5" fill="#04040c"/>
<rect x="110" y="65" width="5" height="5" fill="#010102"/>
<rect x="120" y="65" width="5" height="5" fill="#050511"/>
<rect x="135" y="65" width="5" height="5" fill="#010102"/>
<rect x="140" y="65" width="5" height="5" fill="#050511"/>
<rect x="160" y="65" width="5" height="5" fill="#050511"/>
<rect x="185" y="65" width="5" height="5" fill="#04040c"/>
<rect x="190" y="65" width="5" height="5" fill="#030309"/>
<rect x="10" y="70" width="5" height="5" fill="#010102"/>
<rect x="25" y="70" width="5" height="5" fill="#030309"/>
<rect x="30" y="70" width="5" height="5" fill="#010102"/>
<rect x="45" y="70" width="5" height="5" fill="#04040c"/>
<rect x="50" y="70" width="5" height="5" fill="#010102"/>
<rect x="80" y="70" width="5" height="5" fill="#050511"/>
<rect x="85" y="70" width="5" height="5" fill="#050511"/>
<rect x="90" y="70" width="5" height="5" fill="#050511"/>
<rect x="95" y="70" width="5" height="5" fill="#04040c"/>
<rect x="100" y="70" width="5" height="5" fill="#04040c"/>
<rect x="105" y="70" width="5" height="5" fill="#04040c"/>
<rect x="110" y="70" width="5" height="5" fill="#010102"/>
<rect x="115" y="70" width="5" height="5" fill="#04040c"/>
<rect x="125" y="70" width="5" height="5" fill="#030309"/>
<rect x="140" y="70" width="5" height="5" fill="#010102"/>
<rect x="150" y="70" width="5" height="5" fill="#010102"/>
<rect x="160" y="70" width="5" height="5" fill="#050511"/>
<rect x="165" y="70" width="5" height="5" fill="#030309"/>
<rect x="170" y="70" width="5" height="5" fill="#04040c"/>
<rect x="180" y="70" width="5" height="5" fill="#04040c"/>
<rect x="185" y="70" width="5" height="5" fill="#050511"/>
<rect x="0" y="75" width="5" height="5" fill="#050511"/>
<rect x="5" y="75" width="5" height="5" fill="#050511"/>
<rect x="10" y="75" width="5" height="5" fill="#030309"/>
<rect x="15" y="75" width="5" height="5" fill="#050511"/>
<rect x="20" y="75" width="5" height="5" fill="#04040c"/>
<rect x="35" y="75" width="5" height="5" fill="#050511"/>
<rect x="40" y="75" width="5" height="5" fill="#050511"/>
<rect x="45" y="75" width="5" height="5" fill="#030309"/>
<rect x="60" y="75" width="5" height="5" fill="#030309"/>
<rect x="75" y="75" width="5" height="5" fill="#030309"/>
<rect x="85" y="75" width="5" height="5" fill="#050511"/>
<rect x="90" y="75" width="5" height="5" fill="#050511"/>
<rect x="100" y="75" width="5" height="5" fill="#030309"/>
<rect x="105" y="75" width="5" height="5" fill="#050511"/>
<rect x="110" y="75" width="5" height="5" fill="#030309"/>
<rect x="125" y="75" width="5" height="5" fill="#04040c"/>
<rect x="130" y="75" width="5" height="5" fill="#010102"/>
<rect x="135" y="75" width="5" height="5" fill="#030309"/>
<rect x="140" y="75" width="5" height="5" fill="#04040c"/>
<rect x="145" y="75" width="5" height="5" fill="#030309"/>
<rect x="150" y="75" width="5" height="5" fill="#050511"/>
<rect x="160" y="75" width="5" height="5" fill="#030309"/>
<rect x="165" y="75" width="5" height="5" fill="#04040c"/>
<rect x="180" y="75" width="5" height="5" fill="#050511"/>
<rect x="190" y="75" width="5" height="5" fill="#050511"/>
<rect x="195" y="75" width="5" height="5" fill="#04040c"/>
<rect x="5" y="80" width="5" height="5" fill="#010102"/>
<rect x="25" y="80" width="5" height="5" fill="#030309"/>
<rect x="40" y="80" width="5" height="5" fill="#010102"/>
<rect x="45" y="80" width="5" height="5" fill="#04040c"/>
<rect x="70" y="80" width="5" height="5" fill="#010102"/>
<rect x="75" y="80" width="5" height="5" fill="#04040c"/>
<rect x="80" y="80" width="5" height="5" fill="#04040c"/>
<rect x="85" y="80" width="5" height="5" fill="#030309"/>
<rect x="90" y="80" width="5" height="5" fill="#04040c"/>
<rect x="95" y="80" width="5" height="5" fill="#030309"/>
<rect x="105" y="80" width="5" height="5" fill="#010102"/>
<rect x="125" y="80" width="5" height="5" fill="#010102"/>
<rect x="130" y="80" width="5" height="5" fill="#04040c"/>
<rect x="135" y="80" width="5" height="5" fill="#050511"/>
<rect x="140" y="80" width="5" height="5" fill="#010102"/>
<rect x="145" y="80" width="5" height="5" fill="#030309"/>
<rect x="160" y="80" width="5" height="5" fill="#010102"/>
<rect x="175" y="80" width="5" height="5" fill="#030309"/>
<rect x="180" y="80" width="5" height="5" fill="#010102"/>
<rect x="185" y="80" width="5" height="5" fill="#010102"/>
<rect x="0" y="85" width="5" height="5" fill="#04040c"/>
<rect x="5" y="85" width="5" height="5" fill="#050511"/>
<rect x="20" y="85" width="5" height="5" fill="#010102"/>
<rect x="35" y="85" width="5" height="5" fill="#030309"/>
<rect x="55" y="85" width="5" height="5" fill="#010102"/>
<rect x="60" y="85" width="5" height="5" fill="#04040c"/>
<rect x="75" y="85" width="5" height="5" fill="#050511"/>
<rect x="85" y="85" width="5" height="5" fill="#050511"/>
<rect x="95" y="85" width="5" height="5" fill="#010102"/>
<rect x="100" y="85" width="5" height="5" fill="#010102"/>
<rect x="105" y="85" width="5" height="5" fill="#050511"/>
<rect x="115" y="85" width="5" height="5" fill="#050511"/>
<rect x="120" y="85" width="5" height="5" fill="#04040c"/>
<rect x="125" y="85" width="5" height="5" fill="#050511"/>
<rect x="140" y="85" width="5" height="5" fill="#050511"/>
<rect x="145" y="85" width="5" height="5" fill="#030309"/>
<rect x="155" y="85" width="5" height="5" fill="#010102"/>
<rect x="175" y="85" width="5" height="5" fill="#010102"/>
<rect x="185" y="85" width="5" height="5" fill="#010102"/>
<rect x="0" y="90" width="5" height="5" fill="#030309"/>
<rect x="5" y="90" width="5" height="5" fill="#04040c"/>
<rect x="20" y="90" width="5" height="5" fill="#050511"/>
<rect x="25" y="90" width="5" height="5" fill="#050511"/>
<rect x="40" y="90" width="5" height="5" fill="#050511"/>
<rect x="50" y="90" width="5" height="5" fill="#050511"/>
<rect x="60" y="90" width="5" height="5" fill="#04040c"/>
<rect x="70" y="90" width="5" height="5" fill="#030309"/>
<rect x="75" y="90" width="5" height="5" fill="#050511"/>
<rect x="80" y="90" width="5" height="5" fill="#050511"/>
<rect x="90" y="90" width="5" height="5" fill="#050511"/>
<rect x="100" y="90" width="5" height="5" fill="#010102"/>
<rect x="105" y="90" width="5" height="5" fill="#030309"/>
<rect x="115" y="90" width="5" height="5" fill="#04040c"/>
<rect x="125" y="90" width="5" height="5" fill="#04040c"/>
<rect x="140" y="90" width="5" height="5" fill="#050511"/>
<rect x="150" y="90" width="5" height="5" fill="#050511"/>
<rect x="180" y="90" width="5" height="5" fill="#030309"/>
<rect x="185" y="90" width="5" height="5" fill="#030309"/>
<rect x="190" y="90" width="5" height="5" fill="#04040c"/>
<rect x="195" y="90" width="5" height="5" fill="#030309"/>
<rect x="0" y="95" width="5" height="5" fill="#04040c"/>
<rect x="5" y="95" width="5" height="5" fill="#04040c"/>
<rect x="25" y="95" width="5" height="5" fill="#04040c"/>
<rect x="35" y="95" width="5" height="5" fill="#030309"/>
<rect x="60" y="95" width="5" height="5" fill="#010102"/>
<rect x="85" y="95" width="5" height="5" fill="#030309"/>
<rect x="90" y="95" width="5" height="5" fill="#030309"/>
<rect x="95" y="95" width="5" height="5" fill="#050511"/>
<rect x="105" y="95" width="5" height="5" fill="#010102"/>
<rect x="125" y="95" width="5" height="5" fill="#04040c"/>
<rect x="130" y="95" width="5" height="5" fill="#030309"/>
<rect x="135" y="95" width="5" height="5" fill="#04040c"/>
<rect x="145" y="95" width="5" height="5" fill="#04040c"/>
<rect x="155" y="95" width="5" height="5" fill="#010102"/>
<rect x="160" y="95" width="5" height="5" fill="#04040c"/>
<rect x="165" y="95" width="5" height="5" fill="#010102"/>
<rect x="180" y="95" width="5" height="5" fill="#030309"/>
<rect x="185" y="95" width="5" height="5" fill="#04040c"/>
<rect x="195" y="95" width="5" height="5" fill="#04040c"/>
<rect x="0" y="100" width="5" height="5" fill="#030309"/>
<rect x="10" y="100" width="5" height="5" fill="#030309"/>
<rect x="15" y="100" width="5" height="5" fill="#030309"/>
<rect x="25" y="100" width="5" height="5" fill="#04040c"/>
<rect x="35" y="100" width="5" height="5" fill="#04040c"/>
<rect x="60" y="100" width="5" height="5" fill="#050511"/>
<rect x="65" y="100" width="5" height="5" fill="#030309"/>
<rect x="85" y="100" width="5" height="5" fill="#04040c"/>
<rect x="90" y="100" width="5" height="5" fill="#030309"/>
<rect x="95" y="100" width="5" height="5" fill="#030309"/>
<rect x="110" y="100" width="5" height="5" fill="#030309"/>
<rect x="115" y="100" width="5" height="5" fill="#04040c"/>
<rect x="120" y="100" width="5" height="5" fill="#050511"/>
<rect x="125" y="100" width="5" height="5" fill="#030309"/>
<rect x="130" y="100" width="5" height="5" fill="#050511"/>
<rect x="135" y="100" width="5" height="5" fill="#050511"/>
<rect x="160" y="100" width="5" height="5" fill="#030309"/>
<rect x="170" y="100" width="5" height="5" fill="#030309"/>
<rect x="175" y="100" width="5" height="5" fill="#030309"/>
<rect x="185" y="100" width="5" height="5" fill="#030309"/>
<rect x="195" y="100" width="5" height="5" fill="#010102"/>
<rect x="0" y="105" width="5" height="5" fill="#04040c"/>
<rect x="5" y="105" width="5" height="5" fill="#030309"/>
<rect x="10" y="105" width="5" height="5" fill="#010102"/>
<rect x="15" y="105" width="5" height="5" fill="#04040c"/>
<rect x="45" y="105" width="5" height="5" fill="#04040c"/>
<rect x="55" y="105" width="5" height="5" fill="#04040c"/>
<rect x="60" y="105" width="5" height="5" fill="#030309"/>
<rect x="80" y="105" width="5" height="5" fill="#050511"/>
<rect x="85" y="105" width="5" height="5" fill="#010102"/>
<rect x="105" y="105" width="5" height="5" fill="#030309"/>
<rect x="110" y="105" width="5" height="5" fill="#050511"/>
<rect x="115" y="105" width="5" height="5" fill="#04040c"/>
<rect x="120" y="105" width="5" height="5" fill="#04040c"/>
<rect x="130" y="105" width="5" height="5" fill="#030309"/>
<rect x="135" y="105" width="5" height="5" fill="#050511"/>
<rect x="160" y="105" width="5" height="5" fill="#010102"/>
<rect x="165" y="105" width="5" height="5" fill="#050511"/>
<rect x="175" y="105" width="5" height="5" fill="#010102"/>
<rect x="195" y="105" width="5" height="5" fill="#04040c"/>
<rect x="20" y="110" width="5" height="5" fill="#04040c"/>
<rect x="25" y="110" width="5" height="5" fill="#04040c"/>
<rect x="30" y="110" width="5" height="5" fill="#030309"/>
<rect x="35" y="110" width="5" height="5" fill="#030309"/>
<rect x="40" y="110" width="5" height="5" fill="#04040c"/>
<rect x="60" y="110" width="5" height="5" fill="#04040c"/>
<rect x="65" y="110" width="5" height="5" fill="#030309"/>
<rect x="70" y="110" width="5" height="5" fill="#010102"/>
<rect x="80" y="110" width="5" height="5" fill="#010102"/>
<rect x="105" y="110" width="5" height="5" fill="#010102"/>
<rect x="110" y="110" width="5" height="5" fill="#04040c"/>
<rect x="120" y="110" width="5" height="5" fill="#010102"/>
<rect x="155" y="110" width="5" height="5" fill="#04040c"/>
<rect x="170" y="110" width="5" height="5" fill="#030309"/>
<rect x="180" y="110" width="5" height="5" fill="#010102"/>
<rect x="195" y="110" width="5" height="5" fill="#010102"/>
<rect x="5" y="115" width="5" height="5" fill="#010102"/>
<rect x="30" y="115" width="5" height="5" fill="#030309"/>
<rect x="35" y="115" width="5" height="5" fill="#010102"/>
<rect x="45" y="115" width="5" height="5" fill="#050511"/>
<rect x="55" y="115" width="5" height="5" fill="#04040c"/>
<rect x="65" y="115" width="5" height="5" fill="#010102"/>
<rect x="100" y="115" width="5" height="5" fill="#010102"/>
<rect x="105" y="115" width="5" height="5" fill="#04040c"/>
<rect x="110" y="115" width="5" height="5" fill="#030309"/>
<rect x="130" y="115" width="5" height="5" fill="#010102"/>
<rect x="135" y="115" width="5" height="5" fill="#030309"/>
<rect x="140" y="115" width="5" height="5" fill="#010102"/>
<rect x="160" y="115" width="5" height="5" fill="#050511"/>
<rect x="180" y="115" width="5" height="5" fill="#010102"/>
<rect x="190" y="115" width="5" height="5" fill="#030309"/>
<rect x="15" y="120" width="5" height="5" fill="#04040c"/>
<rect x="20" y="120" width="5" height="5" fill="#010102"/>
<rect x="30" y="120" width="5" height="5" fill="#04040c"/>
<rect x="50" y="120" width="5" height="5" fill="#010102"/>
<rect x="85" y="120" width="5" height="5" fill="#050511"/>
<rect x="90" y="120" width="5" height="5" fill="#010102"/>
<rect x="95" y="120" width="5" height="5" fill="#030309"/>
<rect x="105" y="120" width="5" height="5" fill="#050511"/>
<rect x="115" y="120" width="5" height="5" fill="#050511"/>
<rect x="125" y="120" width="5" height="5" fill="#050511"/>
<rect x="135" y="120" width="5" height="5" fill="#030309"/>
<rect x="140" y="120" width="5" height="5" fill="#030309"/>
<rect x="150" y="120" width="5" height="5" fill="#030309"/>
<rect x="165" y="120" width="5" height="5" fill="#010102"/>
<rect x="170" y="120" width="5" height="5" fill="#04040c"/>
<rect x="175" y="120" width="5" height="5" fill="#010102"/>
<rect x="185" y="120" width="5" height="5" fill="#030309"/>
<rect x="10" y="125" width="5" height="5" fill="#04040c"/>
<rect x="25" y="125" width="5" height="5" fill="#030309"/>
<rect x="35" y="125" width="5" height="5" fill="#04040c"/>
<rect x="70" y="125" width="5" height="5" fill="#04040c"/>
<rect x="85" y="125" width="5" height="5" fill="#050511"/>
<rect x="110" y="125" width="5" height="5" fill="#010102"/>
<rect x="125" y="125" width="5" height="5" fill="#050511"/>
<rect x="135" y="125" width="5" height="5" fill="#030309"/>
<rect x="150" y="125" width="5" height="5" fill="#030309"/>
<rect x="170" y="125" width="5" height="5" fill="#010102"/>
<rect x="180" y="125" width="5" height="5" fill="#050511"/>
<rect x="185" y="125" width="5" height="5" fill="#04040c"/>
<rect x="190" y="125" width="5" height="5" fill="#050511"/>
<rect x="195" y="125" width="5" height="5" fill="#030309"/>
<rect x="5" y="130" width="5" height="5" fill="#010102"/>
<rect x="10" y="130" width="5" height="5" fill="#050511"/>
<rect x="20" y="130" width="5" height="5" fill="#04040c"/>
<rect x="35" y="130" width="5" height="5" fill="#050511"/>
<rect x="45" y="130" width="5" height="5" fill="#030309"/>
<rect x="55" y="130" width="5" height="5" fill="#010102"/>
<rect x="65" y="130" width="5" height="5" fill="#050511"/>
<rect x="70" y="130" width="5" height="5" fill="#030309"/>
<rect x="75" y="130" width="5" height="5" fill="#010102"/>
<rect x="130" y="130" width="5" height="5" fill="#010102"/>
<rect x="140" y="130" width="5" height="5" fill="#04040c"/>
<rect x="150" y="130" width="5" height="5" fill="#030309"/>
<rect x="165" y="130" width="5" height="5" fill="#04040c"/>
<rect x="180" y="130" width="5" height="5" fill="#050511"/>
<rect x="185" y="130" width="5" height="5" fill="#030309"/>
<rect x="190" y="130" width="5" height="5" fill="#010102"/>
<rect x="30" y="135" width="5" height="5" fill="#010102"/>
<rect x="35" y="135" width="5" height="5" fill="#030309"/>
<rect x="60" y="135" width="5" height="5" fill="#010102"/>
<rect x="70" y="135" width="5" height="5" fill="#010102"/>
<rect x="75" y="135" width="5" height="5" fill="#04040c"/>
<rect x="85" y="135" width="5" height="5" fill="#030309"/>
<rect x="95" y="135" width="5" height="5" fill="#030309"/>
<rect x="100" y="135" width="5" height="5" fill="#030309"/>
<rect x="105" y="135" width="5" height="5" fill="#030309"/>
<rect x="110" y="135" width="5" height="5" fill="#04040c"/>
<rect x="130" y="135" width="5" height="5" fill="#04040c"/>
<rect x="140" y="135" width="5" height="5" fill="#010102"/>
<rect x="155" y="135" width="5" height="5" fill="#030309"/>
<rect x="165" y="135" width="5" height="5" fill="#030309"/>
<rect x="185" y="135" width="5" height="5" fill="#050511"/>
<rect x="195" y="135" width="5" height="5" fill="#010102"/>
<rect x="5" y="140" width="5" height="5" fill="#010102"/>
<rect x="15" y="140" width="5" height="5" fill="#030309"/>
<rect x="20" y="140" width="5" height="5" fill="#04040c"/>
<rect x="30" y="140" width="5" height="5" fill="#010102"/>
<rect x="45" y="140" width="5" height="5" fill="#050511"/>
<rect x="50" y="140" width="5" height="5" fill="#030309"/>
<rect x="85" y="140" width="5" height="5" fill="#04040c"/>
<rect x="95" y="140" width="5" height="5" fill="#010102"/>
<rect x="105" y="140" width="5" height="5" fill="#010102"/>
<rect x="130" y="140" width="5" height="5" fill="#030309"/>
<rect x="135" y="140" width="5" height="5" fill="#050511"/>
<rect x="140" y="140" width="5" height="5" fill="#030309"/>
<rect x="145" y="140" width="5" height="5" fill="#04040c"/>
<rect x="165" y="140" width="5" height="5" fill="#010102"/>
<rect x="170" y="140" width="5" height="5" fill="#030309"/>
<rect x="185" y="140" width="5" height="5" fill="#04040c"/>
<rect x="190" y="140" width="5" height="5" fill="#030309"/>
<rect x="5" y="145" width="5" height="5" fill="#050511"/>
<rect x="15" y="145" width="5" height="5" fill="#010102"/>
<rect x="25" y="145" width="5" height="5" fill="#050511"/>
<rect x="35" y="145" width="5" height="5" fill="#050511"/>
<rect x="60" y="145" width="5" height="5" fill="#04040c"/>
<rect x="65" y="145" width="5" height="5" fill="#050511"/>
<rect x="70" y="145" width="5" height="5" fill="#050511"/>
<rect x="75" y="145" width="5" height="5" fill="#04040c"/>
<rect x="80" y="145" width="5" height="5" fill="#010102"/>
<rect x="85" y="145" width="5" height="5" fill="#030309"/>
<rect x="90" y="145" width="5" height="5" fill="#010102"/>
<rect x="100" y="145" width="5" height="5" fill="#030309"/>
<rect x="105" y="145" width="5" height="5" fill="#030309"/>
<rect x="110" y="145" width="5" height="5" fill="#04040c"/>
<rect x="135" y="145" width="5" height="5" fill="#050511"/>
<rect x="140" y="145" width="5" height="5" fill="#010102"/>
<rect x="160" y="145" width="5" height="5" fill="#030309"/>
<rect x="165" y="145" width="5" height="5" fill="#04040c"/>
<rect x="170" y="145" width="5" height="5" fill="#030309"/>
<rect x="175" y="145" width="5" height="5" fill="#050511"/>
<rect x="0" y="150" width="5" height="5" fill="#010102"/>
<rect x="15" y="150" width="5" height="5" fill="#050511"/>
<rect x="40" y="150" width="5" height="5" fill="#010102"/>
<rect x="50" y="150" width="5" height="5" fill="#04040c"/>
<rect x="60" y="150" width="5" height="5" fill="#030309"/>
<rect x="75" y="150" width="5" height="5" fill="#030309"/>
<rect x="85" y="150" width="5" height="5" fill="#010102"/>
<rect x="90" y="150" width="5" height="5" fill="#04040c"/>
<rect x="95" y="150" width="5" height="5" fill="#030309"/>
<rect x="110" y="150" width="5" height="5" fill="#010102"/>
<rect x="120" y="150" width="5" height="5" fill="#050511"/>
<rect x="125" y="150" width="5" height="5" fill="#010102"/>
<rect x="130" y="150" width="5" height="5" fill="#010102"/>
<rect x="135" y="150" width="5" height="5" fill="#010102"/>
<rect x="140" y="150" width="5" height="5" fill="#04040c"/>
<rect x="170" y="150" width="5" height="5" fill="#04040c"/>
<rect x="175" y="150" width="5" height="5" fill="#050511"/>
<rect x="185" y="150" width="5" height="5" fill="#010102"/>
<rect x="0" y="155" width="5" height="5" fill="#030309"/>
<rect x="15" y="155" width="5" height="5" fill="#04040c"/>
<rect x="30" y="155" width="5" height="5" fill="#04040c"/>
<rect x="40" y="155" width="5" height="5" fill="#010102"/>
<rect x="50" y="155" width="5" height="5" fill="#04040c"/>
<rect x="55" y="155" width="5" height="5" fill="#010102"/>
<rect x="60" y="155" width="5" height="5" fill="#030309"/>
<rect x="65" y="155" width="5" height="5" fill="#050511"/>
<rect x="70" y="155" width="5" height="5" fill="#04040c"/>
<rect x="75" y="155" width="5" height="5" fill="#030309"/>
<rect x="80" y="155" width="5" height="5" fill="#010102"/>
<rect x="85" y="155" width="5" height="5" fill="#030309"/>
<rect x="115" y="155" width="5" height="5" fill="#04040c"/>
<rect x="125" y="155" width="5" height="5" fill="#050511"/>
<rect x="140" y="155" width="5" height="5" fill="#050511"/>
<rect x="145" y="155" width="5" height="5" fill="#04040c"/>
<rect x="150" y="155" width="5" height="5" fill="#050511"/>
<rect x="155" y="155" width="5" height="5" fill="#030309"/>
<rect x="160" y="155" width="5" height="5" fill="#050511"/>
<rect x="170" y="155" width="5" height="5" fill="#050511"/>
<rect x="175" y="155" width="5" height="5" fill="#010102"/>
<rect x="180" y="155" width="5" height="5" fill="#010102"/>
<rect x="185" y="155" width="5" height="5" fill="#04040c"/>
<rect x="190" y="155" width="5" height="5" fill="#04040c"/>
<rect x="0" y="160" width="5" height="5" fill="#04040c"/>
<rect x="5" y="160" width="5" height="5" fill="#030309"/>
<rect x="30" y="160" width="5" height="5" fill="#04040c"/>
<rect x="55" y="160" width="5" height="5" fill="#030309"/>
<rect x="85" y="160" width="5" height="5" fill="#050511"/>
<rect x="105" y="160" width="5" height="5" fill="#010102"/>
<rect x="110" y="160" width="5" height="5" fill="#050511"/>
<rect x="115" y="160" width="5" height="5" fill="#050511"/>
<rect x="120" y="160" width="5" height="5" fill="#050511"/>
<rect x="135" y="160" width="5" height="5" fill="#010102"/>
<rect x="145" y="160" width="5" height="5" fill="#050511"/>
<rect x="165" y="160" width="5" height="5" fill="#010102"/>
<rect x="180" y="160" width="5" height="5" fill="#030309"/>
<rect x="10" y="165" width="5" height="5" fill="#030309"/>
<rect x="15" y="165" width="5" height="5" fill="#04040c"/>
<rect x="20" y="165" width="5" height="5" fill="#050511"/>
<rect x="25" y="165" width="5" height="5" fill="#030309"/>
<rect x="30" y="165" width="5" height="5" fill="#04040c"/>
<rect x="35" y="165" width="5" height="5" fill="#010102"/>
<rect x="50" y="165" width="5" height="5" fill="#030309"/>
<rect x="60" y="165" width="5" height="5" fill="#030309"/>
<rect x="80" y="165" width="5" height="5" fill="#030309"/>
<rect x="85" y="165" width="5" height="5" fill="#04040c"/>
<rect x="95" y="165" width="5" height="5" fill="#04040c"/>
<rect x="100" y="165" width="5" height="5" fill="#010102"/>
<rect x="110" y="165" width="5" height="5" fill="#030309"/>
<rect x="120" y="165" width="5" height="5" fill="#010102"/>
<rect x="135" y="165" width="5" height="5" fill="#030309"/>
<rect x="145" y="165" width="5" height="5" fill="#04040c"/>
<rect x="175" y="165" width="5" height="5" fill="#010102"/>
<rect x="185" y="165" width="5" height="5" fill="#04040c"/>
<rect x="0" y="170" width="5" height="5" fill="#010102"/>
<rect x="10" y="170" width="5" height="5" fill="#030309"/>
<rect x="20" y="170" width="5" height="5" fill="#010102"/>
<rect x="25" y="170" width="5" height="5" fill="#030309"/>
<rect x="30" y="170" width="5" height="5" fill="#010102"/>
<rect x="70" y="170" width="5" height="5" fill="#050511"/>
<rect x="95" y="170" width="5" height="5" fill="#030309"/>
<rect x="100" y="170" width="5" height="5" fill="#030309"/>
<rect x="105" y="170" width="5" height="5" fill="#030309"/>
<rect x="110" y="170" width="5" height="5" fill="#050511"/>
<rect x="115" y="170" width="5" height="5" fill="#04040c"/>
<rect x="120" y="170" width="5" height="5" fill="#050511"/>
<rect x="125" y="170" width="5" height="5" fill="#04040c"/>
<rect x="130" y="170" width="5" height="5" fill="#04040c"/>
<rect x="150" y="170" width="5" height="5" fill="#030309"/>
<rect x="160" y="170" width="5" height="5" fill="#010102"/>
<rect x="180" y="170" width="5" height="5" fill="#050511"/>
<rect x="5" y="175" width="5" height="5" fill="#04040c"/>
<rect x="10" y="175" width="5" height="5" fill="#04040c"/>
<rect x="20" y="175" width="5" height="5" fill="#010102"/>
<rect x="25" y="175" width="5" height="5" fill="#050511"/>
<rect x="30" y="175" width="5" height="5" fill="#04040c"/>
<rect x="35" y="175" width="5" height="5" fill="#050511"/>
<rect x="45" y="175" width="5" height="5" fill="#04040c"/>
<rect x="50" y="175" width="5" height="5" fill="#030309"/>
<rect x="55" y="175" width="5" height="5" fill="#030309"/>
<rect x="65" y="175" width="5" height="5" fill="#030309"/>
<rect x="80" y="175" width="5" height="5" fill="#030309"/>
<rect x="105" y="175" width="5" height="5" fill="#050511"/>
<rect x="110" y="175" width="5" height="5" fill="#04040c"/>
<rect x="170" y="175" width="5" height="5" fill="#030309"/>
<rect x="175" y="175" width="5" height="5" fill="#030309"/>
<rect x="195" y="175" width="5" height="5" fill="#050511"/>
<rect x="10" y="180" width="5" height="5" fill="#010102"/>
<rect x="20" y="180" width="5" height="5" fill="#050511"/>
<rect x="25" y="180" width="5" height="5" fill="#010102"/>
<rect x="45" y="180" width="5" height="5" fill="#010102"/>
<rect x="50" y="180" width="5" height="5" fill="#050511"/>
<rect x="55" y="180" width="5" height="5" fill="#050511"/>
<rect x="65" y="180" width="5" height="5" fill="#010102"/>
<rect x="75" y="180" width="5" height="5" fill="#050511"/>
<rect x="80" y="180" width="5" height="5" fill="#04040c"/>
<rect x="90" y="180" width="5" height="5" fill="#010102"/>
<rect x="105" y="180" width="5" height="5" fill="#050511"/>
<rect x="155" y="180" width="5" height="5" fill="#050511"/>
<rect x="160" y="180" width="5" height="5" fill="#050511"/>
<rect x="170" y="180" width="5" height="5" fill="#030309"/>
<rect x="180" y="180" width="5" height="5" fill="#050511"/>
<rect x="0" y="185" width="5" height="5" fill="#04040c"/>
<rect x="15" y="185" width="5" height="5" fill="#050511"/>
<rect x="30" y="185" width="5" height="5" fill="#050511"/>
<rect x="35" y="185" width="5" height="5" fill="#030309"/>
<rect x="50" y="185" width="5" height="5" fill="#050511"/>
<rect x="75" y="185" width="5" height="5" fill="#04040c"/>
<rect x="90" y="185" width="5" height="5" fill="#04040c"/>
<rect x="95" y="185" width="5" height="5" fill="#030309"/>
<rect x="110" y="185" width="5" height="5" fill="#030309"/>
<rect x="120" y="185" width="5" height="5" fill="#030309"/>
<rect x="125" y="185" width="5" height="5" fill="#030309"/>
<rect x="135" y="185" width="5" height="5" fill="#030309"/>
<rect x="150" y="185" width="5" height="5" fill="#010102"/>
<rect x="180" y="185" width="5" height="5" fill="#04040c"/>
<rect x="185" y="185" width="5" height="5" fill="#030309"/>
<rect x="190" y="185" width="5" height="5" fill="#030309"/>
<rect x="195" y="185" width="5" height="5" fill="#030309"/>
<rect x="0" y="190" width="5" height="5" fill="#010102"/>
<rect x="20" y="190" width="5" height="5" fill="#030309"/>
<rect x="35" y="190" width="5" height="5" fill="#04040c"/>
<rect x="40" y="190" width="5" height="5" fill="#04040c"/>
<rect x="45" y="190" width="5" height="5" fill="#030309"/>
<rect x="60" y="190" width="5" height="5" fill="#04040c"/>
<rect x="65" y="190" width="5" height="5" fill="#010102"/>
<rect x="70" y="190" width="5" height="5" fill="#04040c"/>
<rect x="90" y="190" width="5" height="5" fill="#04040c"/>
<rect x="95" y="190" width="5" height="5" fill="#030309"/>
<rect x="100" y="190" width="5" height="5" fill="#04040c"/>
<rect x="105" y="190" width="5" height="5" fill="#010102"/>
<rect x="110" y="190" width="5" height="5" fill="#050511"/>
<rect x="130" y="190" width="5" height="5" fill="#010102"/>
<rect x="145" y="190" width="5" height="5" fill="#010102"/>
<rect x="165" y="190" width="5" height="5" fill="#04040c"/>
<rect x="170" y="190" width="5" height="5" fill="#010102"/>
<rect x="175" y="190" width="5" height="5" fill="#050511"/>
<rect x="180" y="190" width="5" height="5" fill="#050511"/>
<rect x="185" y="190" width="5" height="5" fill="#010102"/>
<rect x="190" y="190" width="5" height="5" fill="#030309"/>
<rect x="0" y="195" width="5" height="5" fill="#050511"/>
<rect x="10" y="195" width="5" height="5" fill="#010102"/>
<rect x="15" y="195" width="5" height="5" fill="#04040c"/>
<rect x="20" y="195" width="5" height="5" fill="#050511"/>
<rect x="30" y="195" width="5" height="5" fill="#04040c"/>
<rect x="35" y="195" width="5" height="5" fill="#04040c"/>
<rect x="40" y="195" width="5" height="5" fill="#050511"/>
<rect x="70" y="195" width="5" height="5" fill="#050511"/>
<rect x="75" y="195" width="5" height="5" fill="#010102"/>
<rect x="80" y="195" width="5" height="5" fill="#04040c"/>
<rect x="85" y="195" width="5" height="5" fill="#010102"/>
<rect x="95" y="195" width="5" height="5" fill="#010102"/>
<rect x="120" y="195" width="5" height="5" fill="#050511"/>
<rect x="130" y="195" width="5" height="5" fill="#04040c"/>
<rect x="135" y="195" width="5" height="5" fill="#030309"/>
<rect x="145" y="195" width="5" height="5" fill="#050511"/>
<rect x="160" y="195" width="5" height="5" fill="#04040c"/>
<rect x="165" y="195" width="5" height="5" fill="#010102"/>
<rect x="185" y="195" width="5" height="5" fill="#04040c"/>
<rect x="195" y="195" width="5" height="5" fill="#050511"/>
<rect x="85" y="75" width="5" height="5" fill="#00084a"/>
<rect x="90" y="75" width="5" height="5" fill="#0838c0"/>
<rect x="95" y="75" width="5" height="5" fill="#60c0ff"/>
<rect x="100" y="75" width="5" height="5" fill="#0848d0"/>
<rect x="105" y="75" width="5" height="5" fill="#000a50"/>
<rect x="85" y="80" width="5" height="5" fill="#000a80"/>
<rect x="105" y="80" width="5" height="5" fill="#0a70e8"/>
<rect x="85" y="85" width="5" height="5" fill="#0a40c0"/>
<rect x="105" y="85" width="5" height="5" fill="#80d0ff"/>
<rect x="85" y="90" width="5" height="5" fill="#000a80"/>
<rect x="105" y="90" width="5" height="5" fill="#0080ff"/>
<rect x="85" y="95" width="5" height="5" fill="#00063a"/>
<rect x="90" y="95" width="5" height="5" fill="#0a40c0"/>
<rect x="95" y="95" width="5" height="5" fill="#80d0ff"/>
<rect x="100" y="95" width="5" height="5" fill="#0080ff"/>
<rect x="105" y="95" width="5" height="5" fill="#000a40"/>
<rect x="90" y="70" width="5" height="5" fill="#000530"/>
<rect x="95" y="70" width="5" height="5" fill="#000638"/>
<rect x="100" y="70" width="5" height="5" fill="#000530"/>
<rect x="90" y="100" width="5" height="5" fill="#000638"/>
<rect x="95" y="100" width="5" height="5" fill="#000840"/>
<rect x="100" y="100" width="5" height="5" fill="#000638"/>
<rect x="80" y="80" width="5" height="5" fill="#00031a"/>
<rect x="80" y="85" width="5" height="5" fill="#00041e"/>
<rect x="80" y="90" width="5" height="5" fill="#00031a"/>
<rect x="110" y="80" width="5" height="5" fill="#00031a"/>
<rect x="110" y="85" width="5" height="5" fill="#00041e"/>
<rect x="110" y="90" width="5" height="5" fill="#00031a"/>
<rect x="90" y="80" width="15" height="15" fill="#ffffff"/>
<rect x="55" y="155" width="5" height="5" fill="#12a0ff"/>
<rect x="60" y="155" width="5" height="5" fill="#12a0ff"/>
<rect x="55" y="160" width="5" height="5" fill="#0a88f0"/>
<rect x="60" y="160" width="5" height="5" fill="#12a0ff"/>
<rect x="55" y="150" width="5" height="5" fill="#000a90"/>
<rect x="60" y="150" width="5" height="5" fill="#000a90"/>
<rect x="50" y="150" width="5" height="5" fill="#000040"/>
<rect x="65" y="150" width="5" height="5" fill="#000038"/>
<rect x="50" y="155" width="5" height="5" fill="#0010b0"/>
<rect x="50" y="160" width="5" height="5" fill="#0010b0"/>
<rect x="65" y="155" width="5" height="5" fill="#0010a8"/>
<rect x="65" y="160" width="5" height="5" fill="#0010a8"/>
<rect x="55" y="165" width="5" height="5" fill="#0820b0"/>
<rect x="60" y="165" width="5" height="5" fill="#0820b0"/>
<rect x="50" y="165" width="5" height="5" fill="#000038"/>
<rect x="65" y="165" width="5" height="5" fill="#000038"/>
<rect x="55" y="145" width="5" height="5" fill="#000028"/>
<rect x="60" y="145" width="5" height="5" fill="#000028"/>
<rect x="55" y="170" width="5" height="5" fill="#000024"/>
<rect x="60" y="170" width="5" height="5" fill="#000024"/>
<rect x="45" y="155" width="5" height="5" fill="#000018"/>
<rect x="45" y="160" width="5" height="5" fill="#000018"/>
<rect x="70" y="155" width="5" height="5" fill="#000018"/>
<rect x="70" y="160" width="5" height="5" fill="#000018"/>
<rect x="80" y="50" width="5" height="5" fill="#ffffff"/>
<rect x="85" y="50" width="5" height="5" fill="#ffffff"/>
<rect x="90" y="50" width="5" height="5" fill="#ffffff"/>
<rect x="95" y="50" width="5" height="5" fill="#ffffff"/>
<rect x="100" y="50" width="5" height="5" fill="#ffffff"/>
<rect x="105" y="50" width="5" height="5" fill="#ffffff"/>
<rect x="110" y="50" width="5" height="5" fill="#ffffff"/>
<rect x="70" y="55" width="5" height="5" fill="#ffffff"/>
<rect x="75" y="55" width="5" height="5" fill="#ffffff"/>
<rect x="115" y="55" width="5" height="5" fill="#ffffff"/>
<rect x="120" y="55" width="5" height="5" fill="#ffffff"/>
<rect x="70" y="60" width="5" height="5" fill="#ffffff"/>
<rect x="120" y="60" width="5" height="5" fill="#ffffff"/>
<rect x="65" y="65" width="5" height="5" fill="#ffffff"/>
<rect x="125" y="65" width="5" height="5" fill="#ffffff"/>
<rect x="130" y="65" width="5" height="5" fill="#ffffff"/>
<rect x="60" y="70" width="5" height="5" fill="#ffffff"/>
<rect x="60" y="75" width="5" height="5" fill="#ffffff"/>
<rect x="60" y="80" width="5" height="5" fill="#ffffff"/>
<rect x="60" y="85" width="5" height="5" fill="#ffffff"/>
<rect x="60" y="90" width="5" height="5" fill="#ffffff"/>
<rect x="60" y="95" width="5" height="5" fill="#ffffff"/>
<rect x="60" y="100" width="5" height="5" fill="#ffffff"/>
<rect x="130" y="70" width="5" height="5" fill="#ffffff"/>
<rect x="130" y="75" width="5" height="5" fill="#ffffff"/>
<rect x="130" y="80" width="5" height="5" fill="#ffffff"/>
<rect x="135" y="85" width="5" height="5" fill="#ffffff"/>
<rect x="130" y="90" width="5" height="5" fill="#ffffff"/>
<rect x="130" y="95" width="5" height="5" fill="#ffffff"/>
<rect x="130" y="100" width="5" height="5" fill="#ffffff"/>
<rect x="130" y="105" width="5" height="5" fill="#ffffff"/>
<rect x="65" y="105" width="5" height="5" fill="#ffffff"/>
<rect x="65" y="110" width="5" height="5" fill="#ffffff"/>
<rect x="70" y="110" width="5" height="5" fill="#ffffff"/>
<rect x="70" y="115" width="5" height="5" fill="#ffffff"/>
<rect x="75" y="120" width="5" height="5" fill="#ffffff"/>
<rect x="80" y="120" width="5" height="5" fill="#ffffff"/>
<rect x="85" y="120" width="5" height="5" fill="#ffffff"/>
<rect x="90" y="125" width="5" height="5" fill="#ffffff"/>
<rect x="95" y="125" width="5" height="5" fill="#ffffff"/>
<rect x="100" y="125" width="5" height="5" fill="#ffffff"/>
<rect x="105" y="120" width="5" height="5" fill="#ffffff"/>
<rect x="110" y="120" width="5" height="5" fill="#ffffff"/>
<rect x="115" y="120" width="5" height="5" fill="#ffffff"/>
<rect x="120" y="115" width="5" height="5" fill="#ffffff"/>
<rect x="120" y="110" width="5" height="5" fill="#ffffff"/>
<rect x="125" y="110" width="5" height="5" fill="#ffffff"/>
</svg>
<svg class="a" style="left:0;top:0" width="1096" height="830">
<circle cx="508.2" cy="52.9" r="25.8" fill="none" stroke="#fde81f" stroke-width="8.3"/>
<ellipse cx="851.6" cy="52.35" rx="35.4" ry="22.35" fill="none" stroke="#fde81f" stroke-width="8.1"/>
<ellipse cx="922.7" cy="52.35" rx="35.6" ry="22.3" fill="none" stroke="#fde81f" stroke-width="8.1"/>
</svg>
<div class="a" style="left:1065px;top:791px;width:15px;height:15px;background:#fff"></div>
<svg class="a" style="left:1065px;top:791px" width="15" height="15"><path d="M4 14 L14 4 M8 14 L14 8 M12 14 L14 12" stroke="#777" stroke-width="1"/></svg>
</body></html>
